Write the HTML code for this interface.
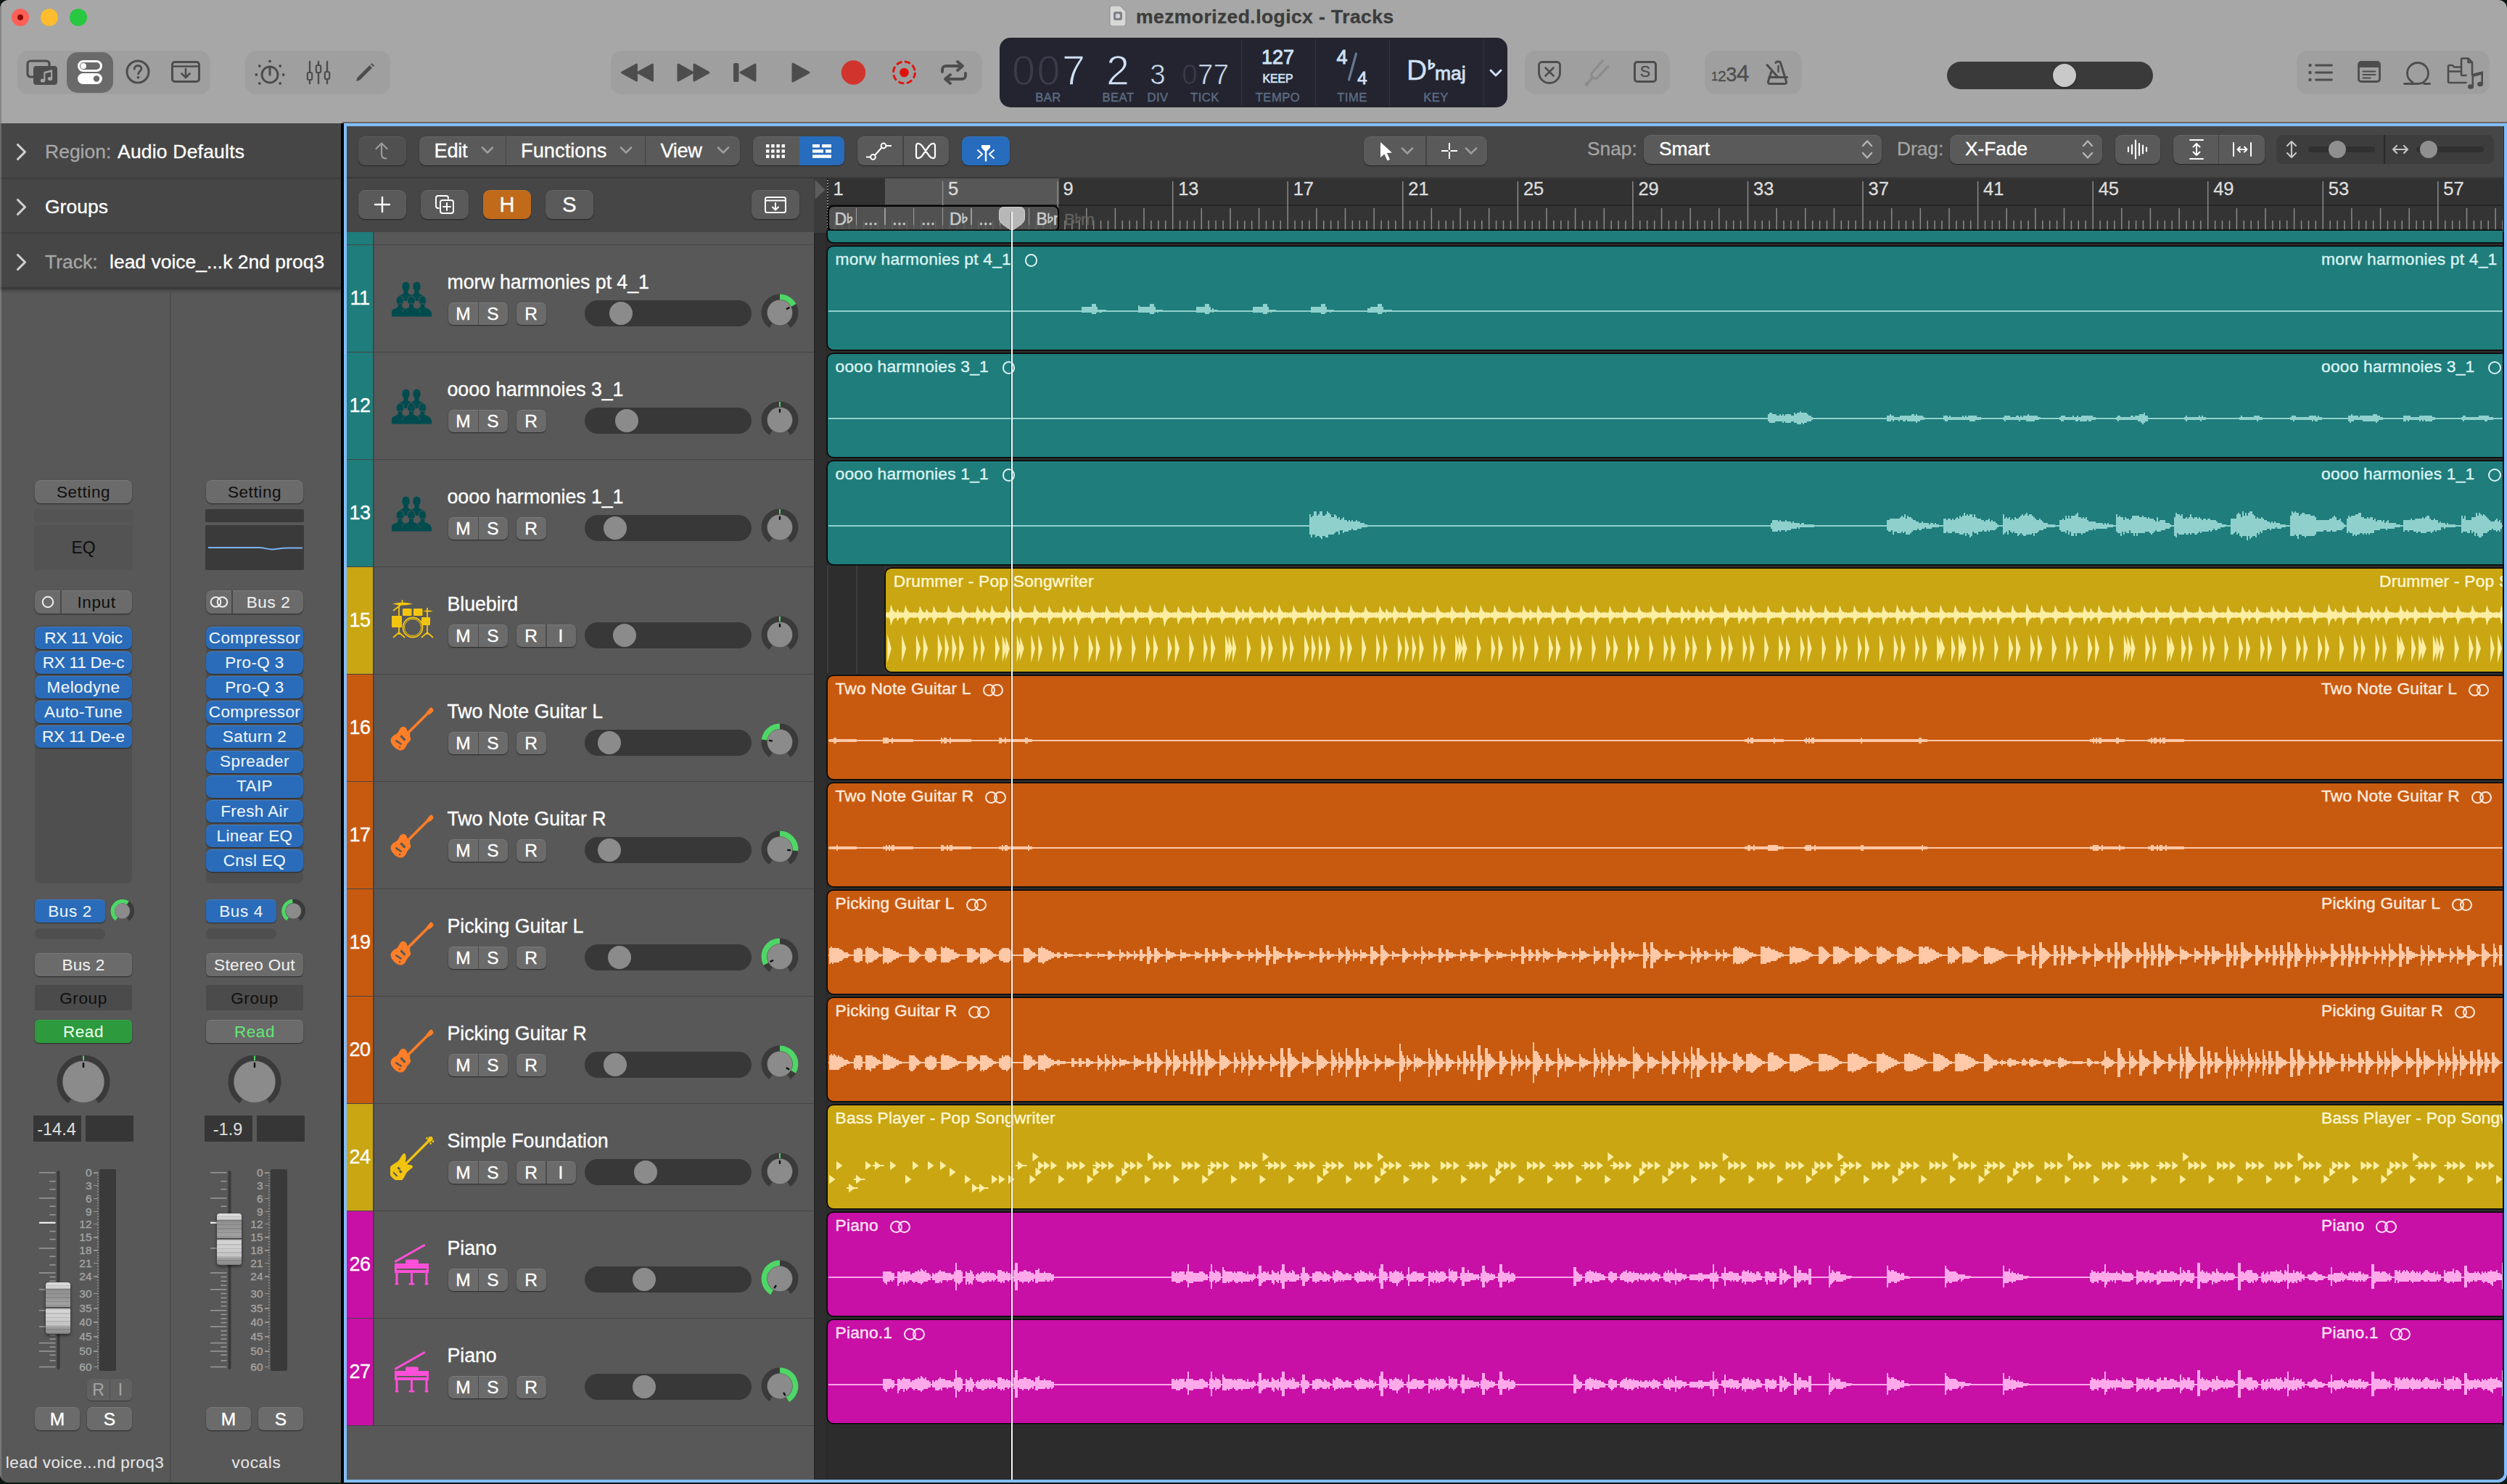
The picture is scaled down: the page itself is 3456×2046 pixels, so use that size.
<!DOCTYPE html><html><head><meta charset="utf-8"><title>mezmorized.logicx - Tracks</title><style>
html,body{margin:0;padding:0;}
body{width:3456px;height:2046px;position:relative;overflow:hidden;background:#0d1712;font-family:"Liberation Sans","DejaVu Sans",sans-serif;-webkit-text-stroke:.32px;}
div,svg{position:absolute;box-sizing:content-box;}
span{position:static}
#win{left:0;top:0;width:3456px;height:2044px;border-radius:12px;overflow:hidden;background:#585858;}
#win>div.sh{left:0;top:0;width:3456px;height:2046px;}
.rl{font-size:22.800px;line-height:28px;height:28px;color:#ecf6f5;-webkit-text-stroke:.42px;white-space:nowrap;letter-spacing:.2px;}
.rl i{display:inline-block;position:relative;vertical-align:-2.500px;height:17px;border:2px solid currentColor;border-radius:10px;box-sizing:border-box;}
.rl i.mono{width:17.500px;margin-left:19px;height:17.500px}
.rl i.stereo{width:17px;margin-left:16px;margin-right:11px}
.rl i.stereo:after{content:"";position:absolute;left:9.300px;top:-2px;width:17px;height:17px;border:2px solid currentColor;border-radius:10px;box-sizing:border-box;}
</style></head><body><div id="win"><div class="sh"><div style="left:0px;top:0px;width:3456px;height:170px;background:#a7a7a7;"></div><div style="left:16px;top:12px;width:24px;height:24px;background:#fe5f57;border-radius:12px;"><div style="left:8px;top:8px;width:8px;height:8px;background:#8c0a05;border-radius:4px;"></div></div><div style="left:56px;top:12px;width:24px;height:24px;background:#febc2e;border-radius:12px;"></div><div style="left:96px;top:12px;width:24px;height:24px;background:#28c840;border-radius:12px;"></div><svg style="left:1528px;top:8px;" width="26" height="28" viewBox="0 0 26 28"><path d="M2 3a3 3 0 0 1 3-3h11l8 8v17a3 3 0 0 1-3 3H5a3 3 0 0 1-3-3z" fill="#d8d8d8" stroke="#8e8e8e" stroke-width="1"/><rect x="7" y="8" width="12" height="12" rx="3" fill="#7d8288"/><circle cx="13" cy="14" r="3.2" fill="#cfd3d8"/></svg><div style="top:5.5px;height:34px;line-height:34px;font-size:26.5px;color:#3c3c3c;white-space:nowrap;font-weight:700;letter-spacing:0.42px;left:1566px;">mezmorized.logicx - Tracks</div><div style="left:24px;top:70px;width:266px;height:60px;background:#9f9f9f;border-radius:15px;"></div><div style="left:338px;top:70px;width:200px;height:60px;background:#9f9f9f;border-radius:15px;"></div><div style="left:842px;top:70px;width:512px;height:60px;background:#9f9f9f;border-radius:15px;"></div><div style="left:2102px;top:70px;width:200px;height:60px;background:#9f9f9f;border-radius:15px;"></div><div style="left:2350px;top:70px;width:134px;height:60px;background:#9f9f9f;border-radius:15px;"></div><div style="left:3166px;top:70px;width:266px;height:60px;background:#9f9f9f;border-radius:15px;"></div><div style="left:92px;top:72px;width:64px;height:56px;background:#6a6a6a;border-radius:15px;"></div><svg style="left:34px;top:78px;" width="48" height="44" viewBox="0 0 48 44"><rect x="4" y="6" width="30" height="22" rx="4" fill="none" stroke="#4d4d4d" stroke-width="3.2"/><rect x="12" y="13" width="33" height="26" rx="4" fill="#4d4d4d"/><g fill="#a4a4a4"><ellipse cx="25" cy="33" rx="3.2" ry="2.6"/><ellipse cx="35" cy="30.5" rx="3.2" ry="2.6"/><path d="M26.4 33V21l11.8-3v12.5h-2V21.3l-7.8 2V33z"/></g></svg><svg style="left:104px;top:80px;" width="40" height="40" viewBox="0 0 40 40"><rect x="4.5" y="4.5" width="31" height="13" rx="6.5" fill="none" stroke="#fff" stroke-width="3"/><circle cx="11" cy="11" r="4" fill="#fff"/><rect x="3" y="21" width="34" height="15" rx="7.5" fill="#fff"/><circle cx="29" cy="28.5" r="4.2" fill="#6a6a6a"/></svg><svg style="left:170px;top:79px;" width="40" height="40" viewBox="0 0 40 40"><circle cx="20" cy="20" r="15" fill="none" stroke="#4d4d4d" stroke-width="3"/><path d="M15.2 16.2c0-3 2.2-4.7 4.9-4.700 2.800 0 4.900 1.700 4.900 4.200 0 3.400-4.400 3.600-4.400 7.300" fill="none" stroke="#4d4d4d" stroke-width="2.8" stroke-linecap="round"/><circle cx="20.500" cy="27.800" r="1.900" fill="#4d4d4d"/></svg><svg style="left:234px;top:82px;" width="44" height="36" viewBox="0 0 44 36"><rect x="3.500" y="3.500" width="37" height="27" rx="3.500" fill="none" stroke="#4d4d4d" stroke-width="3"/><path d="M4 9.500h36" stroke="#4d4d4d" stroke-width="2.600"/><path d="M22 13v11M16.500 19.500l5.500 5.500 5.500-5.500" fill="none" stroke="#4d4d4d" stroke-width="2.600" stroke-linecap="round" stroke-linejoin="round"/></svg><svg style="left:350px;top:79.5px;" width="44" height="46" viewBox="0 0 44 46"><circle cx="22" cy="23" r="11" fill="none" stroke="#4d4d4d" stroke-width="3"/><path d="M22 12v11" stroke="#4d4d4d" stroke-width="3" stroke-linecap="round"/><circle cx="22.0" cy="4.4" r="1.900" fill="#4d4d4d"/><circle cx="36.2" cy="11.0" r="1.900" fill="#4d4d4d"/><circle cx="40.6" cy="23.0" r="1.900" fill="#4d4d4d"/><circle cx="7.8" cy="35.0" r="1.900" fill="#4d4d4d"/><circle cx="3.4" cy="23.0" r="1.900" fill="#4d4d4d"/><circle cx="7.8" cy="11.0" r="1.900" fill="#4d4d4d"/><circle cx="36.2" cy="35.0" r="1.900" fill="#4d4d4d"/></svg><svg style="left:420px;top:82px;" width="38" height="36" viewBox="0 0 38 36"><path d="M7 3v30" stroke="#4d4d4d" stroke-width="2.400" stroke-linecap="round"/><rect x="3.8" y="18" width="6.400" height="10" rx="2" fill="#9f9f9f" stroke="#4d4d4d" stroke-width="2.200"/><path d="M19 3v30" stroke="#4d4d4d" stroke-width="2.400" stroke-linecap="round"/><rect x="15.8" y="8" width="6.400" height="10" rx="2" fill="#9f9f9f" stroke="#4d4d4d" stroke-width="2.200"/><path d="M31 3v30" stroke="#4d4d4d" stroke-width="2.400" stroke-linecap="round"/><rect x="27.8" y="17" width="6.400" height="10" rx="2" fill="#9f9f9f" stroke="#4d4d4d" stroke-width="2.200"/></svg><svg style="left:487px;top:84px;" width="32" height="32" viewBox="0 0 32 32"><path d="M4 28l1.500-5L22.500 6l3.500 3.500L9 26.500z" fill="#4d4d4d"/><path d="M24 4.500l1.500-1.500 3.500 3.500L27.500 8z" fill="#4d4d4d"/></svg><svg style="left:842px;top:70px;" width="512" height="60" viewBox="0 0 512 60"><path d="M35.5 19.0L15.5 30L35.5 41.0z" fill="#4d4d4d" stroke="#4d4d4d" stroke-width="3" stroke-linejoin="round"/><path d="M57.5 19.0L37.5 30L57.5 41.0z" fill="#4d4d4d" stroke="#4d4d4d" stroke-width="3" stroke-linejoin="round"/><path d="M93.0 19.0L113.0 30L93.0 41.0z" fill="#4d4d4d" stroke="#4d4d4d" stroke-width="3" stroke-linejoin="round"/><path d="M115.0 19.0L135.0 30L115.0 41.0z" fill="#4d4d4d" stroke="#4d4d4d" stroke-width="3" stroke-linejoin="round"/><rect x="169" y="17" width="7.500" height="26" rx="2" fill="#4d4d4d"/><path d="M199.0 19.0L179.0 30L199.0 41.0z" fill="#4d4d4d" stroke="#4d4d4d" stroke-width="3" stroke-linejoin="round"/><path d="M251.0 18.0L273.0 30L251.0 42.0z" fill="#4d4d4d" stroke="#4d4d4d" stroke-width="3" stroke-linejoin="round"/><circle cx="334.5" cy="30" r="16.700" fill="#d1342d"/><circle cx="404.5" cy="30" r="15" fill="none" stroke="#e0140c" stroke-width="3" stroke-dasharray="8.200 3.580"/><circle cx="404.5" cy="30" r="6.300" fill="#e0140c"/><g fill="none" stroke="#4d4d4d" stroke-width="3.900" stroke-linecap="round" stroke-linejoin="round"><path d="M457 29v-3a5 5 0 0 1 5-5h22M478 15l7 6-7 6"/><path d="M489 31v3a5 5 0 0 1-5 5h-22M468 45l-7-6 7-6"/></g></svg><div style="left:1378px;top:52px;width:700px;height:96px;background:#23242f;border-radius:15px;"></div><div style="left:1711px;top:54px;width:1px;height:92px;background:#343642;"></div><div style="left:1813px;top:54px;width:1px;height:92px;background:#343642;"></div><div style="left:1915px;top:54px;width:1px;height:92px;background:#343642;"></div><div style="left:2045px;top:54px;width:1px;height:92px;background:#343642;"></div><div style="top:59.5px;height:74px;line-height:74px;font-size:57.5px;color:#cfe0f5;white-space:nowrap;letter-spacing:2.5px;left:496px;width:1000px;text-align:right;-webkit-text-stroke:1.300px #23242f;margin-left:2.5px;"><span style="color:#393c4a">00</span>7</div><div style="top:59.5px;height:74px;line-height:74px;font-size:57.5px;color:#cfe0f5;white-space:nowrap;left:1041px;width:1000px;text-align:center;-webkit-text-stroke:1.300px #23242f;">2</div><div style="top:78.0px;height:50px;line-height:50px;font-size:38.5px;color:#cfe0f5;white-space:nowrap;left:1096px;width:1000px;text-align:center;-webkit-text-stroke:.7px #23242f;">3</div><div style="top:78.0px;height:50px;line-height:50px;font-size:38.5px;color:#cfe0f5;white-space:nowrap;letter-spacing:0.3px;left:694.5px;width:1000px;text-align:right;-webkit-text-stroke:.7px #23242f;"><span style="color:#393c4a">0</span>77</div><div style="top:124.0px;height:21px;line-height:21px;font-size:16.6px;color:#5d6c82;white-space:nowrap;letter-spacing:0.5px;left:945px;width:1000px;text-align:center;-webkit-text-stroke:.45px;">BAR</div><div style="top:124.0px;height:21px;line-height:21px;font-size:16.6px;color:#5d6c82;white-space:nowrap;letter-spacing:0.5px;left:1041.5px;width:1000px;text-align:center;-webkit-text-stroke:.45px;">BEAT</div><div style="top:124.0px;height:21px;line-height:21px;font-size:16.6px;color:#5d6c82;white-space:nowrap;letter-spacing:0.5px;left:1096px;width:1000px;text-align:center;-webkit-text-stroke:.45px;">DIV</div><div style="top:124.0px;height:21px;line-height:21px;font-size:16.6px;color:#5d6c82;white-space:nowrap;letter-spacing:0.5px;left:1161px;width:1000px;text-align:center;-webkit-text-stroke:.45px;">TICK</div><div style="top:124.0px;height:21px;line-height:21px;font-size:16.6px;color:#5d6c82;white-space:nowrap;letter-spacing:0.5px;left:1261.5px;width:1000px;text-align:center;-webkit-text-stroke:.45px;">TEMPO</div><div style="top:124.0px;height:21px;line-height:21px;font-size:16.6px;color:#5d6c82;white-space:nowrap;letter-spacing:0.5px;left:1364px;width:1000px;text-align:center;-webkit-text-stroke:.45px;">TIME</div><div style="top:124.0px;height:21px;line-height:21px;font-size:16.6px;color:#5d6c82;white-space:nowrap;letter-spacing:0.5px;left:1479.5px;width:1000px;text-align:center;-webkit-text-stroke:.45px;">KEY</div><div style="top:61.5px;height:35px;line-height:35px;font-size:27px;color:#cfe0f5;white-space:nowrap;left:1261.5px;width:1000px;text-align:center;-webkit-text-stroke:.9px;">127</div><div style="top:98.5px;height:20px;line-height:20px;font-size:15.8px;color:#cfe0f5;white-space:nowrap;left:1261.5px;width:1000px;text-align:center;-webkit-text-stroke:.7px;">KEEP</div><div style="top:61.5px;height:35px;line-height:35px;font-size:27px;color:#cfe0f5;white-space:nowrap;left:1350px;width:1000px;text-align:center;-webkit-text-stroke:.9px;">4</div><div style="top:91.5px;height:31px;line-height:31px;font-size:24px;color:#cfe0f5;white-space:nowrap;left:1378px;width:1000px;text-align:center;-webkit-text-stroke:.9px;">4</div><svg style="left:1852px;top:70px;" width="26" height="44" viewBox="0 0 26 44"><path d="M17.500 4L7.500 40" stroke="#66788f" stroke-width="3.200" stroke-linecap="round"/></svg><div style="top:72.0px;height:50px;line-height:50px;font-size:39px;color:#cfe0f5;white-space:nowrap;left:1939px;">D</div><div style="top:80.0px;height:18px;line-height:18px;font-size:15.5px;color:#cfe0f5;white-space:nowrap;left:1964.5px;font-family:IPAGothic,sans-serif;font-weight:700;-webkit-text-stroke:.6px #cfe0f5;transform:scaleX(1.250);transform-origin:50% 50%;">♭</div><div style="top:84.0px;height:34px;line-height:34px;font-size:26.5px;color:#cfe0f5;white-space:nowrap;left:1978px;-webkit-text-stroke:.85px;">maj</div><svg style="left:2050px;top:92px;" width="24" height="18" viewBox="0 0 24 18"><path d="M5 5l7 7 7-7" fill="none" stroke="#cfe0f5" stroke-width="3" stroke-linecap="round" stroke-linejoin="round"/></svg><svg style="left:2116px;top:80px;" width="40" height="40" viewBox="0 0 40 40"><path d="M9.500 5.500h21a4 4 0 0 1 4 4v10.500a14.500 14.500 0 0 1-29 0V9.500a4 4 0 0 1 4-4z" fill="none" stroke="#4d4d4d" stroke-width="2.800"/><path d="M14.500 13.500l11 11M25.500 13.500l-11 11" stroke="#4d4d4d" stroke-width="2.600" stroke-linecap="round"/></svg><svg style="left:2183px;top:80px;" width="40" height="42" viewBox="0 0 40 42"><g fill="none" stroke="#8c8c8c" stroke-width="3.400" stroke-linecap="round" stroke-linejoin="round"><path d="M26 4L11.500 20.500c-2 2.300-.5 5 1.500 6.500s5 1.800 6.800-.5L33.500 12"/><path d="M12.500 27L4.500 36"/></g><circle cx="4.500" cy="36" r="2.800" fill="#8c8c8c"/></svg><svg style="left:2250px;top:82px;" width="36" height="36" viewBox="0 0 36 36"><rect x="3.500" y="3.500" width="29" height="27" rx="3.500" fill="none" stroke="#4d4d4d" stroke-width="3"/></svg><div style="top:86.0px;height:27px;line-height:27px;font-size:21.5px;color:#4d4d4d;white-space:nowrap;left:1768px;width:1000px;text-align:center;">S</div><div style="top:81.0px;height:40px;line-height:40px;font-size:32px;color:#4d4d4d;white-space:nowrap;letter-spacing:-0.5px;left:2359px;"><span style="font-size:17px;position:relative;top:-1px">1</span><span style="font-size:21px">2</span><span style="font-size:27px">3</span><span style="font-size:32px">4</span></div><svg style="left:2430px;top:80px;" width="42" height="40" viewBox="0 0 42 40"><g fill="none" stroke="#4d4d4d" stroke-width="3" stroke-linecap="round" stroke-linejoin="round"><path d="M18 6.500a2 2 0 0 1 2-1.500h2.500a2 2 0 0 1 2 1.500l8 26a2.300 2.300 0 0 1-2.200 3H9.700a2.300 2.300 0 0 1-2.200-3l4-13"/><path d="M9 26.500h24.500"/><path d="M6 9.500l15 17"/><path d="M21.500 11v8" stroke-width="2.400"/></g></svg><div style="left:2684px;top:85px;width:284px;height:38px;background:#3a3a3a;border-radius:19px;"></div><div style="left:2830px;top:88px;width:32px;height:32px;background:#c9c9c9;border-radius:16px;box-shadow:0 1px 2px rgba(0,0,0,.5);"></div><svg style="left:3180px;top:84px;" width="38" height="32" viewBox="0 0 38 32"><circle cx="4.500" cy="6" r="2.200" fill="#4d4d4d"/><path d="M12.500 6h22" stroke="#4d4d4d" stroke-width="2.800" stroke-linecap="round"/><circle cx="4.500" cy="16" r="2.200" fill="#4d4d4d"/><path d="M12.500 16h22" stroke="#4d4d4d" stroke-width="2.800" stroke-linecap="round"/><circle cx="4.500" cy="26" r="2.200" fill="#4d4d4d"/><path d="M12.500 26h22" stroke="#4d4d4d" stroke-width="2.800" stroke-linecap="round"/></svg><svg style="left:3248px;top:82px;" width="36" height="36" viewBox="0 0 36 36"><rect x="3.500" y="3.500" width="29" height="27" rx="3.500" fill="none" stroke="#4d4d4d" stroke-width="2.800"/><path d="M3.500 7a3.500 3.500 0 0 1 3.500-3.500h22A3.500 3.500 0 0 1 32.500 7v4h-29z" fill="#4d4d4d"/><path d="M9.500 16.500h17M9.500 21h17M9.500 25.500h10" stroke="#4d4d4d" stroke-width="2.200" stroke-linecap="round"/></svg><svg style="left:3310px;top:80px;" width="44" height="40" viewBox="0 0 44 40"><g fill="none" stroke="#4d4d4d" stroke-width="2.800" stroke-linecap="round"><path d="M4.500 35.500h18.500a14.500 14.500 0 1 0-14.500-14.500c0 5 3 10 7.500 12.500"/><path d="M31.500 35.500h8"/></g></svg><svg style="left:3372px;top:78px;" width="56" height="48" viewBox="0 0 56 48"><g fill="none" stroke="#4d4d4d" stroke-width="2.600" stroke-linejoin="round"><path d="M20 14.500h-9l-2-2.500H4.500a1.500 1.500 0 0 0-1.500 1.500v21a1.500 1.500 0 0 0 1.500 1.500h24"/><path d="M3 20.500h17"/><path d="M36 26V8l-5.500-5.500H22.500a1.500 1.500 0 0 0-1.500 1.500v20.500a1.500 1.500 0 0 0 1.500 1.500h6"/><path d="M30.500 2.500V8H36"/></g><g fill="#4d4d4d"><ellipse cx="34" cy="41.500" rx="4" ry="3.200"/><ellipse cx="47" cy="38" rx="4" ry="3.200"/><path d="M35.500 41.500V24l15.500-4v18h-2.600V25l-10.300 2.700V41.500z"/></g></svg><div style="left:0;top:0;width:470px;height:2046px;-webkit-text-stroke:.1px"><div style="left:0px;top:170px;width:470px;height:1876px;background:#585858;"></div><div style="left:0px;top:170px;width:470px;height:227px;background:#464646;"></div><div style="left:0px;top:245px;width:470px;height:2px;background:#3d3d3d;"></div><div style="left:0px;top:320px;width:470px;height:2px;background:#3d3d3d;"></div><div style="left:0px;top:396px;width:470px;height:3px;background:#3a3a3a;box-shadow:0 2px 4px rgba(0,0,0,.35);"></div><svg style="left:20.5px;top:195.5px;" width="18" height="28" viewBox="0 0 18 28"><path d="M3.500 3.500l10 10-10 10" fill="none" stroke="#d0d0d0" stroke-width="3.100" stroke-linecap="round" stroke-linejoin="round"/></svg><svg style="left:20.5px;top:271.5px;" width="18" height="28" viewBox="0 0 18 28"><path d="M3.500 3.500l10 10-10 10" fill="none" stroke="#d0d0d0" stroke-width="3.100" stroke-linecap="round" stroke-linejoin="round"/></svg><svg style="left:20.5px;top:347.5px;" width="18" height="28" viewBox="0 0 18 28"><path d="M3.500 3.500l10 10-10 10" fill="none" stroke="#d0d0d0" stroke-width="3.100" stroke-linecap="round" stroke-linejoin="round"/></svg><div style="top:192.0px;height:34px;line-height:34px;font-size:26.5px;color:#a6a6a6;white-space:nowrap;left:62px;-webkit-text-stroke:.32px;">Region:</div><div style="top:192.0px;height:34px;line-height:34px;font-size:26.5px;color:#fff;white-space:nowrap;letter-spacing:0.2px;left:162px;-webkit-text-stroke:.32px;">Audio Defaults</div><div style="top:268.0px;height:34px;line-height:34px;font-size:26.5px;color:#fff;white-space:nowrap;left:62px;-webkit-text-stroke:.32px;">Groups</div><div style="top:344.0px;height:34px;line-height:34px;font-size:26.5px;color:#a6a6a6;white-space:nowrap;left:62px;-webkit-text-stroke:.32px;">Track:</div><div style="top:344.0px;height:34px;line-height:34px;font-size:26.5px;color:#fff;white-space:nowrap;left:151px;-webkit-text-stroke:.32px;">lead voice_...k 2nd proq3</div><div style="left:234px;top:399px;width:2px;height:1647px;background:#4c4c4c;"></div><div style="left:48px;top:662px;width:134px;height:32px;background:#6b6b6b;border-radius:8px;box-shadow:0 1px 1.5px rgba(0,0,0,.55), inset 0 1px 0 rgba(255,255,255,.10);"></div><div style="top:663.5px;height:29px;line-height:29px;font-size:22.5px;color:#111;white-space:nowrap;letter-spacing:0.6px;left:-385.0px;width:1000px;text-align:center;">Setting</div><div style="left:47px;top:702px;width:136px;height:18px;background:#545454;border-radius:2px;"></div><div style="left:47px;top:724px;width:136px;height:62px;background:#535353;border-radius:2px;"></div><div style="top:740.5px;height:29px;line-height:29px;font-size:23px;color:#111;white-space:nowrap;left:-385.0px;width:1000px;text-align:center;">EQ</div><div style="left:48px;top:814px;width:134px;height:32px;background:#6b6b6b;border-radius:8px;box-shadow:0 1px 1.5px rgba(0,0,0,.55), inset 0 1px 0 rgba(255,255,255,.10);"></div><div style="left:83px;top:814px;width:1.5px;height:32px;background:#4a4a4a;"></div><svg style="left:56px;top:820px;" width="20" height="20" viewBox="0 0 20 20"><circle cx="10" cy="10" r="7.200" fill="none" stroke="#f0f0f0" stroke-width="2"/></svg><div style="top:815.5px;height:29px;line-height:29px;font-size:22.5px;color:#111;white-space:nowrap;letter-spacing:0.6px;left:-367px;width:1000px;text-align:center;">Input</div><div style="left:48px;top:862px;width:134px;height:356px;background:#4f4f4f;border-radius:8px;"></div><div style="left:48px;top:864.0px;width:134px;height:31px;background:#2a6cb9;border-radius:8px;box-shadow:0 1px 1.5px rgba(0,0,0,.5), inset 0 1px 0 rgba(255,255,255,.12);"></div><div style="top:864.8px;height:29px;line-height:29px;font-size:22.5px;color:#eef4fc;white-space:nowrap;letter-spacing:-0.2px;left:-385.0px;width:1000px;text-align:center;">RX 11 Voic</div><div style="left:48px;top:898.1px;width:134px;height:31px;background:#2a6cb9;border-radius:8px;box-shadow:0 1px 1.5px rgba(0,0,0,.5), inset 0 1px 0 rgba(255,255,255,.12);"></div><div style="top:898.9px;height:29px;line-height:29px;font-size:22.5px;color:#eef4fc;white-space:nowrap;letter-spacing:-0.2px;left:-385.0px;width:1000px;text-align:center;">RX 11 De-c</div><div style="left:48px;top:932.2px;width:134px;height:31px;background:#2a6cb9;border-radius:8px;box-shadow:0 1px 1.5px rgba(0,0,0,.5), inset 0 1px 0 rgba(255,255,255,.12);"></div><div style="top:933.0px;height:29px;line-height:29px;font-size:22.5px;color:#eef4fc;white-space:nowrap;letter-spacing:0.4px;left:-385.0px;width:1000px;text-align:center;">Melodyne</div><div style="left:48px;top:966.3px;width:134px;height:31px;background:#2a6cb9;border-radius:8px;box-shadow:0 1px 1.5px rgba(0,0,0,.5), inset 0 1px 0 rgba(255,255,255,.12);"></div><div style="top:967.1px;height:29px;line-height:29px;font-size:22.5px;color:#eef4fc;white-space:nowrap;letter-spacing:0.4px;left:-385.0px;width:1000px;text-align:center;">Auto-Tune</div><div style="left:48px;top:1000.4px;width:134px;height:31px;background:#2a6cb9;border-radius:8px;box-shadow:0 1px 1.5px rgba(0,0,0,.5), inset 0 1px 0 rgba(255,255,255,.12);"></div><div style="top:1001.2px;height:29px;line-height:29px;font-size:22.5px;color:#eef4fc;white-space:nowrap;letter-spacing:-0.2px;left:-385.0px;width:1000px;text-align:center;">RX 11 De-e</div><div style="left:48px;top:1240px;width:97px;height:32px;background:#2a6cb9;border-radius:6px;box-shadow:0 1px 1.5px rgba(0,0,0,.5), inset 0 1px 0 rgba(255,255,255,.12);"></div><div style="top:1241.5px;height:29px;line-height:29px;font-size:22.5px;color:#e8f0fb;white-space:nowrap;letter-spacing:0.6px;left:-403.5px;width:1000px;text-align:center;">Bus 2</div><svg style="left:149px;top:1236px;" width="40" height="40" viewBox="0 0 40 40"><path d="M11.6 31.3A13.8 13.8 0 1 1 27.4 31.3" fill="none" stroke="#3a3a3a" stroke-width="5.5"/><path d="M11.6 31.3A13.8 13.8 0 0 1 27.4 8.7" fill="none" stroke="#4fd667" stroke-width="5.5"/><circle cx="19.5" cy="20" r="10.5" fill="#8b8b8b"/></svg><div style="left:48px;top:1280px;width:97px;height:15px;background:#4f4f4f;border-radius:7px;"></div><div style="left:48px;top:1314px;width:134px;height:32px;background:#6b6b6b;border-radius:6px;box-shadow:0 1px 1.5px rgba(0,0,0,.55), inset 0 1px 0 rgba(255,255,255,.10);"></div><div style="top:1315.5px;height:29px;line-height:29px;font-size:22.5px;color:#eee;white-space:nowrap;letter-spacing:0.3px;left:-385.0px;width:1000px;text-align:center;">Bus 2</div><div style="left:48px;top:1358px;width:134px;height:35px;background:#4b4b4b;border-radius:2px;"></div><div style="top:1361.5px;height:29px;line-height:29px;font-size:22.5px;color:#111;white-space:nowrap;letter-spacing:0.6px;left:-385.0px;width:1000px;text-align:center;">Group</div><div style="left:48px;top:1406px;width:134px;height:32px;background:#2c9a3d;border-radius:6px;box-shadow:0 1px 1.5px rgba(0,0,0,.55), inset 0 1px 0 rgba(255,255,255,.10);"></div><div style="top:1407.5px;height:29px;line-height:29px;font-size:22.5px;color:#eaffea;white-space:nowrap;letter-spacing:0.6px;left:-385.0px;width:1000px;text-align:center;">Read</div><svg style="left:75.0px;top:1451px;" width="80" height="80" viewBox="0 0 80 80"><path d="M21.2 67.3A32.8 32.8 0 1 1 58.8 67.3" fill="none" stroke="#3a3a3a" stroke-width="7.5"/><path d="M40.0 11.0L40.0 4.5" stroke="#4fd667" stroke-width="2"/><circle cx="40" cy="40.5" r="28.5" fill="#8b8b8b"/><path d="M40.0 14.0L40.0 21.0" stroke="#111" stroke-width="2.400"/></svg><div style="left:46px;top:1538px;width:66px;height:36px;background:#363636;"></div><div style="left:118px;top:1538px;width:66px;height:36px;background:#363636;"></div><div style="top:1541.5px;height:30px;line-height:30px;font-size:23.5px;color:#ddd;white-space:nowrap;left:-422px;width:1000px;text-align:center;">-14.4</div><svg style="left:48px;top:1600px;" width="140" height="300" viewBox="0 0 140 300"><path d="M6 16.7h22.500" stroke="#959595" stroke-width="1.700"/><path d="M6 51.9h22.500" stroke="#959595" stroke-width="1.700"/><path d="M6 121.0h22.500" stroke="#959595" stroke-width="1.700"/><path d="M6 154.9h22.500" stroke="#959595" stroke-width="1.700"/><path d="M6 177.8h22.500" stroke="#959595" stroke-width="1.700"/><path d="M6 206.7h22.500" stroke="#959595" stroke-width="1.700"/><path d="M6 229.0h22.500" stroke="#959595" stroke-width="1.700"/><path d="M6 251.6h22.500" stroke="#959595" stroke-width="1.700"/><path d="M6 262.9h22.500" stroke="#959595" stroke-width="1.700"/><path d="M6 284.6h22.500" stroke="#959595" stroke-width="1.700"/><path d="M20.500 28.7h8" stroke="#959595" stroke-width="1.700"/><path d="M20.500 39.7h8" stroke="#959595" stroke-width="1.700"/><path d="M20.500 63.2h8" stroke="#959595" stroke-width="1.700"/><path d="M20.500 74.8h8" stroke="#959595" stroke-width="1.700"/><path d="M20.500 97.7h8" stroke="#959595" stroke-width="1.700"/><path d="M20.500 108.7h8" stroke="#959595" stroke-width="1.700"/><path d="M20.500 132.3h8" stroke="#959595" stroke-width="1.700"/><path d="M20.500 143.9h8" stroke="#959595" stroke-width="1.700"/><path d="M20.500 160.5h8" stroke="#959595" stroke-width="1.700"/><path d="M20.500 166.2h8" stroke="#959595" stroke-width="1.700"/><path d="M20.500 172.2h8" stroke="#959595" stroke-width="1.700"/><path d="M20.500 183.5h8" stroke="#959595" stroke-width="1.700"/><path d="M20.500 189.4h8" stroke="#959595" stroke-width="1.700"/><path d="M20.500 195.1h8" stroke="#959595" stroke-width="1.700"/><path d="M20.500 200.7h8" stroke="#959595" stroke-width="1.700"/><path d="M20.500 212.3h8" stroke="#959595" stroke-width="1.700"/><path d="M20.500 218.0h8" stroke="#959595" stroke-width="1.700"/><path d="M20.500 223.6h8" stroke="#959595" stroke-width="1.700"/><path d="M20.500 234.9h8" stroke="#959595" stroke-width="1.700"/><path d="M20.500 240.6h8" stroke="#959595" stroke-width="1.700"/><path d="M20.500 246.2h8" stroke="#959595" stroke-width="1.700"/><path d="M20.500 257.2h8" stroke="#959595" stroke-width="1.700"/><path d="M20.500 268.2h8" stroke="#959595" stroke-width="1.700"/><path d="M20.500 275.8h8" stroke="#959595" stroke-width="1.700"/><rect x="30.500" y="14" width="4" height="274" rx="2" fill="#3a3a3a"/><path d="M6 85.800h22.500" stroke="#f2f2f2" stroke-width="2.200"/><path d="M86.800 16v272" stroke="#959595" stroke-width="1.700" stroke-dasharray="1.500 2.300"/></svg><div style="top:1608.0px;height:18px;line-height:18px;font-size:15.5px;color:#a6a6a6;white-space:nowrap;letter-spacing:0.3px;left:-873px;width:1000px;text-align:right;-webkit-text-stroke:.3px;">0</div><div style="left:129px;top:1616.2px;width:5.5px;height:1.6px;background:#959595;"></div><div style="top:1625.5px;height:18px;line-height:18px;font-size:15.5px;color:#a6a6a6;white-space:nowrap;letter-spacing:0.3px;left:-873px;width:1000px;text-align:right;-webkit-text-stroke:.3px;">3</div><div style="left:129px;top:1633.7px;width:5.5px;height:1.6px;background:#959595;"></div><div style="top:1643.5px;height:18px;line-height:18px;font-size:15.5px;color:#a6a6a6;white-space:nowrap;letter-spacing:0.3px;left:-873px;width:1000px;text-align:right;-webkit-text-stroke:.3px;">6</div><div style="left:129px;top:1651.7px;width:5.5px;height:1.6px;background:#959595;"></div><div style="top:1661.5px;height:18px;line-height:18px;font-size:15.5px;color:#a6a6a6;white-space:nowrap;letter-spacing:0.3px;left:-873px;width:1000px;text-align:right;-webkit-text-stroke:.3px;">9</div><div style="left:129px;top:1669.7px;width:5.5px;height:1.6px;background:#959595;"></div><div style="top:1678.5px;height:18px;line-height:18px;font-size:15.5px;color:#a6a6a6;white-space:nowrap;letter-spacing:0.3px;left:-873px;width:1000px;text-align:right;-webkit-text-stroke:.3px;">12</div><div style="left:129px;top:1686.7px;width:5.5px;height:1.6px;background:#959595;"></div><div style="top:1697.0px;height:18px;line-height:18px;font-size:15.5px;color:#a6a6a6;white-space:nowrap;letter-spacing:0.3px;left:-873px;width:1000px;text-align:right;-webkit-text-stroke:.3px;">15</div><div style="left:129px;top:1705.2px;width:5.5px;height:1.6px;background:#959595;"></div><div style="top:1715.0px;height:18px;line-height:18px;font-size:15.5px;color:#a6a6a6;white-space:nowrap;letter-spacing:0.3px;left:-873px;width:1000px;text-align:right;-webkit-text-stroke:.3px;">18</div><div style="left:129px;top:1723.2px;width:5.5px;height:1.6px;background:#959595;"></div><div style="top:1732.5px;height:18px;line-height:18px;font-size:15.5px;color:#a6a6a6;white-space:nowrap;letter-spacing:0.3px;left:-873px;width:1000px;text-align:right;-webkit-text-stroke:.3px;">21</div><div style="left:129px;top:1740.7px;width:5.5px;height:1.6px;background:#959595;"></div><div style="top:1751.0px;height:18px;line-height:18px;font-size:15.5px;color:#a6a6a6;white-space:nowrap;letter-spacing:0.3px;left:-873px;width:1000px;text-align:right;-webkit-text-stroke:.3px;">24</div><div style="left:129px;top:1759.2px;width:5.5px;height:1.6px;background:#959595;"></div><div style="top:1774.5px;height:18px;line-height:18px;font-size:15.5px;color:#a6a6a6;white-space:nowrap;letter-spacing:0.3px;left:-873px;width:1000px;text-align:right;-webkit-text-stroke:.3px;">30</div><div style="left:129px;top:1782.7px;width:5.5px;height:1.6px;background:#959595;"></div><div style="top:1795.0px;height:18px;line-height:18px;font-size:15.5px;color:#a6a6a6;white-space:nowrap;letter-spacing:0.3px;left:-873px;width:1000px;text-align:right;-webkit-text-stroke:.3px;">35</div><div style="left:129px;top:1803.2px;width:5.5px;height:1.6px;background:#959595;"></div><div style="top:1814.0px;height:18px;line-height:18px;font-size:15.5px;color:#a6a6a6;white-space:nowrap;letter-spacing:0.3px;left:-873px;width:1000px;text-align:right;-webkit-text-stroke:.3px;">40</div><div style="left:129px;top:1822.2px;width:5.5px;height:1.6px;background:#959595;"></div><div style="top:1834.0px;height:18px;line-height:18px;font-size:15.5px;color:#a6a6a6;white-space:nowrap;letter-spacing:0.3px;left:-873px;width:1000px;text-align:right;-webkit-text-stroke:.3px;">45</div><div style="left:129px;top:1842.2px;width:5.5px;height:1.6px;background:#959595;"></div><div style="top:1854.0px;height:18px;line-height:18px;font-size:15.5px;color:#a6a6a6;white-space:nowrap;letter-spacing:0.3px;left:-873px;width:1000px;text-align:right;-webkit-text-stroke:.3px;">50</div><div style="left:129px;top:1862.2px;width:5.5px;height:1.6px;background:#959595;"></div><div style="top:1875.5px;height:18px;line-height:18px;font-size:15.5px;color:#a6a6a6;white-space:nowrap;letter-spacing:0.3px;left:-873px;width:1000px;text-align:right;-webkit-text-stroke:.3px;">60</div><div style="left:129px;top:1883.7px;width:5.5px;height:1.6px;background:#959595;"></div><div style="left:136.5px;top:1612px;width:23.5px;height:278px;background:#3a3a3a;border-radius:2px;"></div><div style="left:63px;top:1768px;width:34px;height:71px;border-radius:4px;background:repeating-linear-gradient(rgba(0,0,0,0) 0 4px,rgba(0,0,0,.10) 4px 5.500px),linear-gradient(#dcdcdc 0%,#cfcfcf 11%,#8f8f8f 13%,#979797 30%,#a4a4a4 47%,#4c4c4c 48.500%,#4c4c4c 50%,#d6d6d6 51.500%,#cdcdcd 70%,#c4c4c4 84%,#a0a0a0 86%,#8a8a8a 100%);box-shadow:0 2px 4px rgba(0,0,0,.55);"></div><div style="left:120px;top:1901px;width:61.5px;height:30px;background:#616161;border-radius:6px;box-shadow:0 1px 1px rgba(0,0,0,.35);"></div><div style="left:150.5px;top:1901px;width:1.5px;height:30px;background:#505050;"></div><div style="top:1902.0px;height:29px;line-height:29px;font-size:23px;color:#a4a4a4;white-space:nowrap;left:-364.5px;width:1000px;text-align:center;">R</div><div style="top:1902.0px;height:29px;line-height:29px;font-size:23px;color:#a4a4a4;white-space:nowrap;left:-334px;width:1000px;text-align:center;">I</div><div style="left:48px;top:1940px;width:62px;height:32px;background:#6b6b6b;border-radius:7px;box-shadow:0 1px 1.5px rgba(0,0,0,.55), inset 0 1px 0 rgba(255,255,255,.10);"></div><div style="left:120px;top:1940px;width:62px;height:32px;background:#6b6b6b;border-radius:7px;box-shadow:0 1px 1.5px rgba(0,0,0,.55), inset 0 1px 0 rgba(255,255,255,.10);"></div><div style="top:1941.0px;height:31px;line-height:31px;font-size:24.5px;color:#fff;white-space:nowrap;left:-421px;width:1000px;text-align:center;-webkit-text-stroke:.4px;">M</div><div style="top:1941.0px;height:31px;line-height:31px;font-size:24.5px;color:#fff;white-space:nowrap;left:-349px;width:1000px;text-align:center;-webkit-text-stroke:.4px;">S</div><div style="left:284px;top:662px;width:134px;height:32px;background:#6b6b6b;border-radius:8px;box-shadow:0 1px 1.5px rgba(0,0,0,.55), inset 0 1px 0 rgba(255,255,255,.10);"></div><div style="top:663.5px;height:29px;line-height:29px;font-size:22.5px;color:#111;white-space:nowrap;letter-spacing:0.6px;left:-149.0px;width:1000px;text-align:center;">Setting</div><div style="left:283px;top:702px;width:136px;height:18px;background:#3a3a3a;border-radius:2px;"></div><div style="left:283px;top:724px;width:136px;height:62px;background:#3a3a3a;border-radius:2px;"></div><svg style="left:283px;top:724px;" width="136" height="62" viewBox="0 0 136 62"><path d="M4 31h70c8 0 12 2.500 18 2.500s10-2 22-2h20" fill="none" stroke="#7db4f0" stroke-width="2"/></svg><div style="left:284px;top:814px;width:134px;height:32px;background:#6b6b6b;border-radius:8px;box-shadow:0 1px 1.5px rgba(0,0,0,.55), inset 0 1px 0 rgba(255,255,255,.10);"></div><div style="left:319px;top:814px;width:1.5px;height:32px;background:#4a4a4a;"></div><svg style="left:288px;top:820px;" width="28" height="20" viewBox="0 0 28 20"><circle cx="9.500" cy="10" r="6.800" fill="none" stroke="#f0f0f0" stroke-width="2"/><circle cx="18.500" cy="10" r="6.800" fill="none" stroke="#f0f0f0" stroke-width="2"/></svg><div style="top:815.5px;height:29px;line-height:29px;font-size:22.5px;color:#eee;white-space:nowrap;letter-spacing:0.6px;left:-130px;width:1000px;text-align:center;">Bus 2</div><div style="left:284px;top:862px;width:134px;height:356px;background:#4f4f4f;border-radius:8px;"></div><div style="left:284px;top:864.0px;width:134px;height:31px;background:#2a6cb9;border-radius:8px;box-shadow:0 1px 1.5px rgba(0,0,0,.5), inset 0 1px 0 rgba(255,255,255,.12);"></div><div style="top:864.8px;height:29px;line-height:29px;font-size:22.5px;color:#eef4fc;white-space:nowrap;letter-spacing:0.4px;left:-149.0px;width:1000px;text-align:center;">Compressor</div><div style="left:284px;top:898.1px;width:134px;height:31px;background:#2a6cb9;border-radius:8px;box-shadow:0 1px 1.5px rgba(0,0,0,.5), inset 0 1px 0 rgba(255,255,255,.12);"></div><div style="top:898.9px;height:29px;line-height:29px;font-size:22.5px;color:#eef4fc;white-space:nowrap;letter-spacing:0.4px;left:-149.0px;width:1000px;text-align:center;">Pro-Q 3</div><div style="left:284px;top:932.2px;width:134px;height:31px;background:#2a6cb9;border-radius:8px;box-shadow:0 1px 1.5px rgba(0,0,0,.5), inset 0 1px 0 rgba(255,255,255,.12);"></div><div style="top:933.0px;height:29px;line-height:29px;font-size:22.5px;color:#eef4fc;white-space:nowrap;letter-spacing:0.4px;left:-149.0px;width:1000px;text-align:center;">Pro-Q 3</div><div style="left:284px;top:966.3px;width:134px;height:31px;background:#2a6cb9;border-radius:8px;box-shadow:0 1px 1.5px rgba(0,0,0,.5), inset 0 1px 0 rgba(255,255,255,.12);"></div><div style="top:967.1px;height:29px;line-height:29px;font-size:22.5px;color:#eef4fc;white-space:nowrap;letter-spacing:0.4px;left:-149.0px;width:1000px;text-align:center;">Compressor</div><div style="left:284px;top:1000.4px;width:134px;height:31px;background:#2a6cb9;border-radius:8px;box-shadow:0 1px 1.5px rgba(0,0,0,.5), inset 0 1px 0 rgba(255,255,255,.12);"></div><div style="top:1001.2px;height:29px;line-height:29px;font-size:22.5px;color:#eef4fc;white-space:nowrap;letter-spacing:0.4px;left:-149.0px;width:1000px;text-align:center;">Saturn 2</div><div style="left:284px;top:1034.5px;width:134px;height:31px;background:#2a6cb9;border-radius:8px;box-shadow:0 1px 1.5px rgba(0,0,0,.5), inset 0 1px 0 rgba(255,255,255,.12);"></div><div style="top:1035.3px;height:29px;line-height:29px;font-size:22.5px;color:#eef4fc;white-space:nowrap;letter-spacing:0.4px;left:-149.0px;width:1000px;text-align:center;">Spreader</div><div style="left:284px;top:1068.6px;width:134px;height:31px;background:#2a6cb9;border-radius:8px;box-shadow:0 1px 1.5px rgba(0,0,0,.5), inset 0 1px 0 rgba(255,255,255,.12);"></div><div style="top:1069.4px;height:29px;line-height:29px;font-size:22.5px;color:#eef4fc;white-space:nowrap;letter-spacing:0.4px;left:-149.0px;width:1000px;text-align:center;">TAIP</div><div style="left:284px;top:1102.7px;width:134px;height:31px;background:#2a6cb9;border-radius:8px;box-shadow:0 1px 1.5px rgba(0,0,0,.5), inset 0 1px 0 rgba(255,255,255,.12);"></div><div style="top:1103.5px;height:29px;line-height:29px;font-size:22.5px;color:#eef4fc;white-space:nowrap;letter-spacing:0.4px;left:-149.0px;width:1000px;text-align:center;">Fresh Air</div><div style="left:284px;top:1136.8px;width:134px;height:31px;background:#2a6cb9;border-radius:8px;box-shadow:0 1px 1.5px rgba(0,0,0,.5), inset 0 1px 0 rgba(255,255,255,.12);"></div><div style="top:1137.6px;height:29px;line-height:29px;font-size:22.5px;color:#eef4fc;white-space:nowrap;letter-spacing:0.4px;left:-149.0px;width:1000px;text-align:center;">Linear EQ</div><div style="left:284px;top:1170.9px;width:134px;height:31px;background:#2a6cb9;border-radius:8px;box-shadow:0 1px 1.5px rgba(0,0,0,.5), inset 0 1px 0 rgba(255,255,255,.12);"></div><div style="top:1171.7px;height:29px;line-height:29px;font-size:22.5px;color:#eef4fc;white-space:nowrap;letter-spacing:0.4px;left:-149.0px;width:1000px;text-align:center;">Cnsl EQ</div><div style="left:284px;top:1240px;width:97px;height:32px;background:#2a6cb9;border-radius:6px;box-shadow:0 1px 1.5px rgba(0,0,0,.5), inset 0 1px 0 rgba(255,255,255,.12);"></div><div style="top:1241.5px;height:29px;line-height:29px;font-size:22.5px;color:#e8f0fb;white-space:nowrap;letter-spacing:0.6px;left:-167.5px;width:1000px;text-align:center;">Bus 4</div><svg style="left:385px;top:1236px;" width="40" height="40" viewBox="0 0 40 40"><path d="M11.6 31.3A13.8 13.8 0 1 1 27.4 31.3" fill="none" stroke="#3a3a3a" stroke-width="5.5"/><path d="M11.6 31.3A13.8 13.8 0 0 1 18.3 6.3" fill="none" stroke="#4fd667" stroke-width="5.5"/><circle cx="19.5" cy="20" r="10.5" fill="#8b8b8b"/></svg><div style="left:284px;top:1280px;width:97px;height:15px;background:#4f4f4f;border-radius:7px;"></div><div style="left:284px;top:1314px;width:134px;height:32px;background:#6b6b6b;border-radius:6px;box-shadow:0 1px 1.5px rgba(0,0,0,.55), inset 0 1px 0 rgba(255,255,255,.10);"></div><div style="top:1315.5px;height:29px;line-height:29px;font-size:22.5px;color:#eee;white-space:nowrap;letter-spacing:0.3px;left:-149.0px;width:1000px;text-align:center;">Stereo Out</div><div style="left:284px;top:1358px;width:134px;height:35px;background:#4b4b4b;border-radius:2px;"></div><div style="top:1361.5px;height:29px;line-height:29px;font-size:22.5px;color:#111;white-space:nowrap;letter-spacing:0.6px;left:-149.0px;width:1000px;text-align:center;">Group</div><div style="left:284px;top:1406px;width:134px;height:32px;background:#6b6b6b;border-radius:6px;box-shadow:0 1px 1.5px rgba(0,0,0,.55), inset 0 1px 0 rgba(255,255,255,.10);"></div><div style="top:1407.5px;height:29px;line-height:29px;font-size:22.5px;color:#63e577;white-space:nowrap;letter-spacing:0.6px;left:-149.0px;width:1000px;text-align:center;">Read</div><svg style="left:311.0px;top:1451px;" width="80" height="80" viewBox="0 0 80 80"><path d="M21.2 67.3A32.8 32.8 0 1 1 58.8 67.3" fill="none" stroke="#3a3a3a" stroke-width="7.5"/><path d="M40.0 11.0L40.0 4.5" stroke="#4fd667" stroke-width="2"/><circle cx="40" cy="40.5" r="28.5" fill="#8b8b8b"/><path d="M40.0 14.0L40.0 21.0" stroke="#111" stroke-width="2.400"/></svg><div style="left:282px;top:1538px;width:66px;height:36px;background:#363636;"></div><div style="left:354px;top:1538px;width:66px;height:36px;background:#363636;"></div><div style="top:1541.5px;height:30px;line-height:30px;font-size:23.5px;color:#ddd;white-space:nowrap;left:-186px;width:1000px;text-align:center;">-1.9</div><svg style="left:284px;top:1600px;" width="140" height="300" viewBox="0 0 140 300"><path d="M6 16.7h22.500" stroke="#959595" stroke-width="1.700"/><path d="M6 51.9h22.500" stroke="#959595" stroke-width="1.700"/><path d="M6 121.0h22.500" stroke="#959595" stroke-width="1.700"/><path d="M6 154.9h22.500" stroke="#959595" stroke-width="1.700"/><path d="M6 177.8h22.500" stroke="#959595" stroke-width="1.700"/><path d="M6 206.7h22.500" stroke="#959595" stroke-width="1.700"/><path d="M6 229.0h22.500" stroke="#959595" stroke-width="1.700"/><path d="M6 251.6h22.500" stroke="#959595" stroke-width="1.700"/><path d="M6 262.9h22.500" stroke="#959595" stroke-width="1.700"/><path d="M6 284.6h22.500" stroke="#959595" stroke-width="1.700"/><path d="M20.500 28.7h8" stroke="#959595" stroke-width="1.700"/><path d="M20.500 39.7h8" stroke="#959595" stroke-width="1.700"/><path d="M20.500 63.2h8" stroke="#959595" stroke-width="1.700"/><path d="M20.500 74.8h8" stroke="#959595" stroke-width="1.700"/><path d="M20.500 97.7h8" stroke="#959595" stroke-width="1.700"/><path d="M20.500 108.7h8" stroke="#959595" stroke-width="1.700"/><path d="M20.500 132.3h8" stroke="#959595" stroke-width="1.700"/><path d="M20.500 143.9h8" stroke="#959595" stroke-width="1.700"/><path d="M20.500 160.5h8" stroke="#959595" stroke-width="1.700"/><path d="M20.500 166.2h8" stroke="#959595" stroke-width="1.700"/><path d="M20.500 172.2h8" stroke="#959595" stroke-width="1.700"/><path d="M20.500 183.5h8" stroke="#959595" stroke-width="1.700"/><path d="M20.500 189.4h8" stroke="#959595" stroke-width="1.700"/><path d="M20.500 195.1h8" stroke="#959595" stroke-width="1.700"/><path d="M20.500 200.7h8" stroke="#959595" stroke-width="1.700"/><path d="M20.500 212.3h8" stroke="#959595" stroke-width="1.700"/><path d="M20.500 218.0h8" stroke="#959595" stroke-width="1.700"/><path d="M20.500 223.6h8" stroke="#959595" stroke-width="1.700"/><path d="M20.500 234.9h8" stroke="#959595" stroke-width="1.700"/><path d="M20.500 240.6h8" stroke="#959595" stroke-width="1.700"/><path d="M20.500 246.2h8" stroke="#959595" stroke-width="1.700"/><path d="M20.500 257.2h8" stroke="#959595" stroke-width="1.700"/><path d="M20.500 268.2h8" stroke="#959595" stroke-width="1.700"/><path d="M20.500 275.8h8" stroke="#959595" stroke-width="1.700"/><rect x="30.500" y="14" width="4" height="274" rx="2" fill="#3a3a3a"/><path d="M6 85.800h10" stroke="#f2f2f2" stroke-width="2.200"/><path d="M86.800 16v272" stroke="#959595" stroke-width="1.700" stroke-dasharray="1.500 2.300"/></svg><div style="top:1608.0px;height:18px;line-height:18px;font-size:15.5px;color:#a6a6a6;white-space:nowrap;letter-spacing:0.3px;left:-637px;width:1000px;text-align:right;-webkit-text-stroke:.3px;">0</div><div style="left:365px;top:1616.2px;width:5.5px;height:1.6px;background:#959595;"></div><div style="top:1625.5px;height:18px;line-height:18px;font-size:15.5px;color:#a6a6a6;white-space:nowrap;letter-spacing:0.3px;left:-637px;width:1000px;text-align:right;-webkit-text-stroke:.3px;">3</div><div style="left:365px;top:1633.7px;width:5.5px;height:1.6px;background:#959595;"></div><div style="top:1643.5px;height:18px;line-height:18px;font-size:15.5px;color:#a6a6a6;white-space:nowrap;letter-spacing:0.3px;left:-637px;width:1000px;text-align:right;-webkit-text-stroke:.3px;">6</div><div style="left:365px;top:1651.7px;width:5.5px;height:1.6px;background:#959595;"></div><div style="top:1661.5px;height:18px;line-height:18px;font-size:15.5px;color:#a6a6a6;white-space:nowrap;letter-spacing:0.3px;left:-637px;width:1000px;text-align:right;-webkit-text-stroke:.3px;">9</div><div style="left:365px;top:1669.7px;width:5.5px;height:1.6px;background:#959595;"></div><div style="top:1678.5px;height:18px;line-height:18px;font-size:15.5px;color:#a6a6a6;white-space:nowrap;letter-spacing:0.3px;left:-637px;width:1000px;text-align:right;-webkit-text-stroke:.3px;">12</div><div style="left:365px;top:1686.7px;width:5.5px;height:1.6px;background:#959595;"></div><div style="top:1697.0px;height:18px;line-height:18px;font-size:15.5px;color:#a6a6a6;white-space:nowrap;letter-spacing:0.3px;left:-637px;width:1000px;text-align:right;-webkit-text-stroke:.3px;">15</div><div style="left:365px;top:1705.2px;width:5.5px;height:1.6px;background:#959595;"></div><div style="top:1715.0px;height:18px;line-height:18px;font-size:15.5px;color:#a6a6a6;white-space:nowrap;letter-spacing:0.3px;left:-637px;width:1000px;text-align:right;-webkit-text-stroke:.3px;">18</div><div style="left:365px;top:1723.2px;width:5.5px;height:1.6px;background:#959595;"></div><div style="top:1732.5px;height:18px;line-height:18px;font-size:15.5px;color:#a6a6a6;white-space:nowrap;letter-spacing:0.3px;left:-637px;width:1000px;text-align:right;-webkit-text-stroke:.3px;">21</div><div style="left:365px;top:1740.7px;width:5.5px;height:1.6px;background:#959595;"></div><div style="top:1751.0px;height:18px;line-height:18px;font-size:15.5px;color:#a6a6a6;white-space:nowrap;letter-spacing:0.3px;left:-637px;width:1000px;text-align:right;-webkit-text-stroke:.3px;">24</div><div style="left:365px;top:1759.2px;width:5.5px;height:1.6px;background:#959595;"></div><div style="top:1774.5px;height:18px;line-height:18px;font-size:15.5px;color:#a6a6a6;white-space:nowrap;letter-spacing:0.3px;left:-637px;width:1000px;text-align:right;-webkit-text-stroke:.3px;">30</div><div style="left:365px;top:1782.7px;width:5.5px;height:1.6px;background:#959595;"></div><div style="top:1795.0px;height:18px;line-height:18px;font-size:15.5px;color:#a6a6a6;white-space:nowrap;letter-spacing:0.3px;left:-637px;width:1000px;text-align:right;-webkit-text-stroke:.3px;">35</div><div style="left:365px;top:1803.2px;width:5.5px;height:1.6px;background:#959595;"></div><div style="top:1814.0px;height:18px;line-height:18px;font-size:15.5px;color:#a6a6a6;white-space:nowrap;letter-spacing:0.3px;left:-637px;width:1000px;text-align:right;-webkit-text-stroke:.3px;">40</div><div style="left:365px;top:1822.2px;width:5.5px;height:1.6px;background:#959595;"></div><div style="top:1834.0px;height:18px;line-height:18px;font-size:15.5px;color:#a6a6a6;white-space:nowrap;letter-spacing:0.3px;left:-637px;width:1000px;text-align:right;-webkit-text-stroke:.3px;">45</div><div style="left:365px;top:1842.2px;width:5.5px;height:1.6px;background:#959595;"></div><div style="top:1854.0px;height:18px;line-height:18px;font-size:15.5px;color:#a6a6a6;white-space:nowrap;letter-spacing:0.3px;left:-637px;width:1000px;text-align:right;-webkit-text-stroke:.3px;">50</div><div style="left:365px;top:1862.2px;width:5.5px;height:1.6px;background:#959595;"></div><div style="top:1875.5px;height:18px;line-height:18px;font-size:15.5px;color:#a6a6a6;white-space:nowrap;letter-spacing:0.3px;left:-637px;width:1000px;text-align:right;-webkit-text-stroke:.3px;">60</div><div style="left:365px;top:1883.7px;width:5.5px;height:1.6px;background:#959595;"></div><div style="left:372.5px;top:1612px;width:23.5px;height:278px;background:#3a3a3a;border-radius:2px;"></div><div style="left:299px;top:1673px;width:34px;height:71px;border-radius:4px;background:repeating-linear-gradient(rgba(0,0,0,0) 0 4px,rgba(0,0,0,.10) 4px 5.500px),linear-gradient(#dcdcdc 0%,#cfcfcf 11%,#8f8f8f 13%,#979797 30%,#a4a4a4 47%,#4c4c4c 48.500%,#4c4c4c 50%,#d6d6d6 51.500%,#cdcdcd 70%,#c4c4c4 84%,#a0a0a0 86%,#8a8a8a 100%);box-shadow:0 2px 4px rgba(0,0,0,.55);"></div><div style="left:284px;top:1940px;width:62px;height:32px;background:#6b6b6b;border-radius:7px;box-shadow:0 1px 1.5px rgba(0,0,0,.55), inset 0 1px 0 rgba(255,255,255,.10);"></div><div style="left:356px;top:1940px;width:62px;height:32px;background:#6b6b6b;border-radius:7px;box-shadow:0 1px 1.5px rgba(0,0,0,.55), inset 0 1px 0 rgba(255,255,255,.10);"></div><div style="top:1941.0px;height:31px;line-height:31px;font-size:24.5px;color:#fff;white-space:nowrap;left:-185px;width:1000px;text-align:center;-webkit-text-stroke:.4px;">M</div><div style="top:1941.0px;height:31px;line-height:31px;font-size:24.5px;color:#fff;white-space:nowrap;left:-113px;width:1000px;text-align:center;-webkit-text-stroke:.4px;">S</div><div style="top:2002.0px;height:29px;line-height:29px;font-size:22.5px;color:#e4e4e4;white-space:nowrap;letter-spacing:0.45px;left:-383px;width:1000px;text-align:center;">lead voice...nd proq3</div><div style="top:2002.0px;height:29px;line-height:29px;font-size:22.5px;color:#e4e4e4;white-space:nowrap;letter-spacing:0.7px;left:-146.5px;width:1000px;text-align:center;">vocals</div></div><div style="left:470px;top:170px;width:4px;height:1876px;background:#000;"></div><div style="left:474px;top:170px;width:2982px;height:1874px;background:#82bdfb;border-radius:0 0 12px 0;"></div><div style="left:478px;top:174px;width:2973.5px;height:1866px;background:#2c2c2c;border-radius:0 0 10px 0;overflow:hidden;"><div style="left:0px;top:0px;width:2973px;height:71px;background:#464646;"></div><div style="left:0px;top:70px;width:2973px;height:1.5px;background:#3a3a3a;"></div><div style="left:0px;top:71.5px;width:644px;height:75px;background:#464646;"></div><div style="left:0px;top:146px;width:644px;height:1720px;background:#585858;"></div><div style="left:644px;top:71.5px;width:19px;height:1800px;background:linear-gradient(90deg,#272727 0,#2e2e2e 3px,#2e2e2e 15px,#282828 19px);"></div><div style="left:644px;top:71.5px;width:19px;height:75px;background:#3b3b3b;"></div><svg style="left:644px;top:73px;" width="19" height="34" viewBox="0 0 19 34"><path d="M1.500 1v27l14-13.500z" fill="#5c5c5c"/></svg><div style="left:16px;top:14px;width:66px;height:40px;background:#505050;border-radius:9px;box-shadow:0 1px 1.5px rgba(0,0,0,.5), inset 0 1px 0 rgba(255,255,255,.08);"></div><svg style="left:34px;top:19px;" width="30" height="30" viewBox="0 0 30 30"><path d="M14 5v14.500c0 4 2 6 6.500 6M6.500 12L14 4.500l7.500 7.500" fill="none" stroke="#9a9a9a" stroke-width="2.200" stroke-linecap="round" stroke-linejoin="round"/></svg><div style="left:100px;top:14px;width:442px;height:40px;background:#5a5a5a;border-radius:9px;box-shadow:0 1px 1.5px rgba(0,0,0,.5), inset 0 1px 0 rgba(255,255,255,.08);"></div><div style="left:218.5px;top:14px;width:1.5px;height:40px;background:#444;"></div><div style="left:410.5px;top:14px;width:1.5px;height:40px;background:#444;"></div><div style="top:15.5px;height:35px;line-height:35px;font-size:27.3px;color:#fff;white-space:nowrap;letter-spacing:-0.3px;left:120.5px;">Edit</div><svg style="left:184px;top:25px;" width="20" height="16" viewBox="0 0 20 16"><path d="M3 4.500l7 7 7-7" fill="none" stroke="#9d9d9d" stroke-width="2.600" stroke-linecap="round" stroke-linejoin="round"/></svg><div style="top:15.5px;height:35px;line-height:35px;font-size:27.3px;color:#fff;white-space:nowrap;left:240px;">Functions</div><svg style="left:375px;top:25px;" width="20" height="16" viewBox="0 0 20 16"><path d="M3 4.500l7 7 7-7" fill="none" stroke="#9d9d9d" stroke-width="2.600" stroke-linecap="round" stroke-linejoin="round"/></svg><div style="top:15.5px;height:35px;line-height:35px;font-size:27.3px;color:#fff;white-space:nowrap;letter-spacing:-0.4px;left:432.5px;">View</div><svg style="left:509px;top:25px;" width="20" height="16" viewBox="0 0 20 16"><path d="M3 4.500l7 7 7-7" fill="none" stroke="#9d9d9d" stroke-width="2.600" stroke-linecap="round" stroke-linejoin="round"/></svg><div style="left:560px;top:14px;width:126px;height:40px;background:#5a5a5a;border-radius:9px;box-shadow:0 1px 1.5px rgba(0,0,0,.5), inset 0 1px 0 rgba(255,255,255,.08);"></div><div style="left:623.5px;top:14px;width:62.5px;height:40px;background:#276cbd;border-radius:0 9px 9px 0;"></div><svg style="left:576px;top:23px;" width="32" height="24" viewBox="0 0 32 24"><rect x="2.0" y="2.0" width="4.400" height="4.400" fill="#fff"/><rect x="2.0" y="9.2" width="4.400" height="4.400" fill="#fff"/><rect x="2.0" y="16.4" width="4.400" height="4.400" fill="#fff"/><rect x="9.2" y="2.0" width="4.400" height="4.400" fill="#fff"/><rect x="9.2" y="9.2" width="4.400" height="4.400" fill="#fff"/><rect x="9.2" y="16.4" width="4.400" height="4.400" fill="#fff"/><rect x="16.4" y="2.0" width="4.400" height="4.400" fill="#fff"/><rect x="16.4" y="9.2" width="4.400" height="4.400" fill="#fff"/><rect x="16.4" y="16.4" width="4.400" height="4.400" fill="#fff"/><rect x="23.6" y="2.0" width="4.400" height="4.400" fill="#fff"/><rect x="23.6" y="9.2" width="4.400" height="4.400" fill="#fff"/><rect x="23.6" y="16.4" width="4.400" height="4.400" fill="#fff"/></svg><svg style="left:641px;top:24px;" width="28" height="22" viewBox="0 0 28 22"><g fill="#fff"><rect x="1" y="1" width="10" height="4.400"/><rect x="14" y="1" width="13" height="4.400"/><rect x="1" y="8.200" width="15" height="4.400"/><rect x="19" y="8.200" width="8" height="4.400"/><rect x="1" y="15.400" width="26" height="4.400"/></g></svg><div style="left:704px;top:14px;width:126px;height:40px;background:#5a5a5a;border-radius:9px;box-shadow:0 1px 1.5px rgba(0,0,0,.5), inset 0 1px 0 rgba(255,255,255,.08);"></div><div style="left:766px;top:14px;width:1.5px;height:40px;background:#444;"></div><svg style="left:715px;top:22px;" width="38" height="28" viewBox="0 0 38 28"><g fill="none" stroke="#fff" stroke-width="2"><path d="M1 20.500h6.500M13.500 17.500l9-10M28.500 5h7.500"/><circle cx="10.500" cy="20.500" r="3.400"/><circle cx="25" cy="5" r="3.400"/></g></svg><svg style="left:781px;top:20px;" width="34" height="28" viewBox="0 0 34 28"><path d="M4 7v14M30 7v14M4 7C4 2.500 9 3 12 7L22 21C25 25 30 25.500 30 21M4 21C4 25.500 9 25 12 21L22 7C25 3 30 2.500 30 7" fill="none" stroke="#fff" stroke-width="2.200" stroke-linejoin="round" stroke-linecap="round"/></svg><div style="left:848px;top:14px;width:66px;height:40px;background:#276cbd;border-radius:9px;box-shadow:0 1px 1.5px rgba(0,0,0,.5), inset 0 1px 0 rgba(255,255,255,.08);"></div><svg style="left:864px;top:19px;" width="34" height="32" viewBox="0 0 34 32"><path d="M11 7h12v3.500l-4 4.500h-4l-4-4.500z" fill="#fff"/><path d="M17 13v16.500" stroke="#fff" stroke-width="2.400"/><path d="M6 14l6 5.500-6 5.500M28 14l-6 5.500 6 5.500" fill="none" stroke="#fff" stroke-width="2" stroke-linecap="round" stroke-linejoin="round"/></svg><div style="left:1402px;top:14px;width:170px;height:40px;background:#5a5a5a;border-radius:9px;box-shadow:0 1px 1.5px rgba(0,0,0,.5), inset 0 1px 0 rgba(255,255,255,.08);"></div><div style="left:1487px;top:14px;width:1.5px;height:40px;background:#444;"></div><svg style="left:1420px;top:20px;" width="26" height="30" viewBox="0 0 26 30"><path d="M5 2v21l5.500-4.500 4 9 3.500-1.500-4-9 7-.5z" fill="#fff"/></svg><svg style="left:1452px;top:26px;" width="20" height="16" viewBox="0 0 20 16"><path d="M3 4.500l7 7 7-7" fill="none" stroke="#9d9d9d" stroke-width="2.600" stroke-linecap="round" stroke-linejoin="round"/></svg><svg style="left:1506px;top:20px;" width="28" height="28" viewBox="0 0 28 28"><path d="M14 3v22M3 14h22" stroke="#fff" stroke-width="2"/><rect x="12.500" y="12.500" width="3" height="3" fill="#5a5a5a"/></svg><svg style="left:1540px;top:26px;" width="20" height="16" viewBox="0 0 20 16"><path d="M3 4.500l7 7 7-7" fill="none" stroke="#9d9d9d" stroke-width="2.600" stroke-linecap="round" stroke-linejoin="round"/></svg><div style="top:13.5px;height:34px;line-height:34px;font-size:26.3px;color:#a4a4a4;white-space:nowrap;left:1710px;">Snap:</div><div style="left:1788px;top:12px;width:328px;height:40px;background:#5a5a5a;border-radius:9px;box-shadow:0 1px 1.5px rgba(0,0,0,.5), inset 0 1px 0 rgba(255,255,255,.08);"></div><div style="top:13.5px;height:34px;line-height:34px;font-size:26.3px;color:#fff;white-space:nowrap;left:1809px;">Smart</div><svg style="left:2087px;top:17px;" width="18" height="30" viewBox="0 0 18 30"><path d="M3 10l6-6.500 6 6.500M3 20l6 6.500 6-6.500" fill="none" stroke="#b5b5b5" stroke-width="2.400" stroke-linecap="round" stroke-linejoin="round"/></svg><div style="top:13.5px;height:34px;line-height:34px;font-size:26.3px;color:#a4a4a4;white-space:nowrap;left:2137px;">Drag:</div><div style="left:2210px;top:12px;width:210px;height:40px;background:#5a5a5a;border-radius:9px;box-shadow:0 1px 1.5px rgba(0,0,0,.5), inset 0 1px 0 rgba(255,255,255,.08);"></div><div style="top:13.5px;height:34px;line-height:34px;font-size:26.3px;color:#fff;white-space:nowrap;left:2231px;">X-Fade</div><svg style="left:2391px;top:17px;" width="18" height="30" viewBox="0 0 18 30"><path d="M3 10l6-6.500 6 6.500M3 20l6 6.500 6-6.500" fill="none" stroke="#b5b5b5" stroke-width="2.400" stroke-linecap="round" stroke-linejoin="round"/></svg><div style="left:2438px;top:12px;width:62px;height:40px;background:#5a5a5a;border-radius:9px;box-shadow:0 1px 1.5px rgba(0,0,0,.5), inset 0 1px 0 rgba(255,255,255,.08);"></div><svg style="left:2452px;top:17px;" width="34" height="30" viewBox="0 0 34 30"><g stroke="#fff" stroke-width="2.200" stroke-linecap="round"><path d="M4 12v6M9 9v12M14 2.500v25M19 7v16M24 9.500v11M29 12.500v5"/></g></svg><div style="left:2518px;top:12px;width:126px;height:40px;background:#5a5a5a;border-radius:9px;box-shadow:0 1px 1.5px rgba(0,0,0,.5), inset 0 1px 0 rgba(255,255,255,.08);"></div><div style="left:2579.5px;top:12px;width:1.5px;height:40px;background:#444;"></div><svg style="left:2534px;top:17px;" width="32" height="30" viewBox="0 0 32 30"><g fill="none" stroke="#fff" stroke-width="2" stroke-linecap="round" stroke-linejoin="round"><path d="M7 2h18M7 28h18M16 7v16M11.500 11.500L16 7l4.500 4.500M11.500 18.500L16 23l4.500-4.500"/></g></svg><svg style="left:2597px;top:18px;" width="32" height="28" viewBox="0 0 32 28"><g fill="none" stroke="#fff" stroke-width="2" stroke-linecap="round" stroke-linejoin="round"><path d="M4 5v18M28 5v18M9.500 14h13M13 10.500L9.500 14l3.500 3.500M19 10.500l3.500 3.500-3.500 3.500"/></g></svg><div style="left:2660px;top:12px;width:300px;height:40px;background:#3d3d3d;border-radius:9px;"></div><div style="left:2808px;top:12px;width:1.5px;height:40px;background:#2a2a2a;"></div><svg style="left:2671px;top:18px;" width="20" height="28" viewBox="0 0 20 28"><g fill="none" stroke="#c4c4c4" stroke-width="2.200" stroke-linecap="round" stroke-linejoin="round"><path d="M10 3v22M4 9l6-6 6 6M4 19l6 6 6-6"/></g></svg><div style="left:2704px;top:28px;width:92px;height:8px;background:#313131;border-radius:4px;"></div><div style="left:2732px;top:20px;width:24px;height:24px;background:#8f8f8f;border-radius:12px;"></div><svg style="left:2816px;top:22px;" width="30" height="20" viewBox="0 0 30 20"><g fill="none" stroke="#c4c4c4" stroke-width="2.200" stroke-linecap="round" stroke-linejoin="round"><path d="M5 10h20M10 5l-5 5 5 5M20 5l5 5-5 5"/></g></svg><div style="left:2853px;top:28px;width:93px;height:8px;background:#313131;border-radius:4px;"></div><div style="left:2858px;top:20px;width:24px;height:24px;background:#8f8f8f;border-radius:12px;"></div><div style="left:16px;top:88px;width:66px;height:40px;background:#5a5a5a;border-radius:9px;box-shadow:0 1px 1.5px rgba(0,0,0,.5), inset 0 1px 0 rgba(255,255,255,.08);"></div><svg style="left:35px;top:94px;" width="28" height="28" viewBox="0 0 28 28"><path d="M14 4v20M4 14h20" stroke="#fff" stroke-width="2.400" stroke-linecap="round"/></svg><div style="left:102px;top:88px;width:66px;height:40px;background:#5a5a5a;border-radius:9px;box-shadow:0 1px 1.5px rgba(0,0,0,.5), inset 0 1px 0 rgba(255,255,255,.08);"></div><svg style="left:120px;top:93px;" width="32" height="30" viewBox="0 0 32 30"><g fill="none" stroke="#fff" stroke-width="2"><path d="M7.500 20H6a3 3 0 0 1-3-3V6a3 3 0 0 1 3-3h11a3 3 0 0 1 3 3v1.500"/><rect x="9" y="9" width="18" height="18" rx="3"/><path d="M18 13v10M13 18h10" stroke-linecap="round"/></g></svg><div style="left:188px;top:88px;width:66px;height:40px;background:#c06a1a;border-radius:9px;box-shadow:0 1px 1.5px rgba(0,0,0,.5), inset 0 1px 0 rgba(255,255,255,.08);"></div><div style="top:90.0px;height:37px;line-height:37px;font-size:29px;color:#fff;white-space:nowrap;left:-279px;width:1000px;text-align:center;">H</div><div style="left:274px;top:88px;width:66px;height:40px;background:#5a5a5a;border-radius:9px;box-shadow:0 1px 1.5px rgba(0,0,0,.5), inset 0 1px 0 rgba(255,255,255,.08);"></div><div style="top:90.0px;height:37px;line-height:37px;font-size:29px;color:#fff;white-space:nowrap;left:-193px;width:1000px;text-align:center;">S</div><div style="left:558px;top:88px;width:66px;height:40px;background:#5a5a5a;border-radius:9px;box-shadow:0 1px 1.5px rgba(0,0,0,.5), inset 0 1px 0 rgba(255,255,255,.08);"></div><svg style="left:575px;top:96px;" width="32" height="26" viewBox="0 0 32 26"><g fill="none" stroke="#fff" stroke-width="2" stroke-linecap="round" stroke-linejoin="round"><rect x="2" y="2" width="28" height="21" rx="2.500"/><path d="M2 6.500h28M16 10v9M12 15.500l4 4 4-4"/></g></svg><div style="left:0px;top:146px;width:36px;height:16.5px;background:#1f7d7c;"></div><div style="left:0px;top:162.5px;width:644px;height:1.8px;background:#454545;"></div><div style="left:36px;top:146px;width:2px;height:17px;background:#454545;"></div><div style="left:0px;top:164px;width:36px;height:146.5px;background:#1f7d7c;"></div><div style="left:36px;top:164px;width:2px;height:146.5px;background:#454545;"></div><div style="left:0px;top:310.5px;width:644px;height:1.8px;background:#454545;"></div><div style="top:220.0px;height:35px;line-height:35px;font-size:27px;color:#fff;white-space:nowrap;letter-spacing:-0.5px;left:-482px;width:1000px;text-align:center;">11</div><svg style="left:62.0px;top:212.5px;" width="55" height="50" viewBox="0 0 55 50"><g fill="#004b4e"><ellipse cx="19.5" cy="8" rx="5.2" ry="6.6"/><path d="M16.5 13.0h6.0v4.0c1.0 2.5 9.0 2.5 9.5 8.0v3.0h-25.0v-3.0c0.5-5.5 8.5-5.5 9.5-8.0z"/><ellipse cx="34.5" cy="8" rx="5.2" ry="6.6"/><path d="M31.5 13.0h6.0v4.0c1.0 2.5 9.0 2.5 9.5 8.0v3.0h-25.0v-3.0c0.5-5.5 8.5-5.5 9.5-8.0z"/></g><g fill="#004b4e" stroke="#585858" stroke-width="1.600" paint-order="stroke"><ellipse cx="11.5" cy="27.5" rx="4.9" ry="6.3"/><path d="M8.7 32.2h5.7v3.8c0.9 2.4 8.5 2.4 9.0 7.6v2.8h-23.8v-2.8c0.5-5.2 8.1-5.2 9.0-7.6z"/><ellipse cx="42.5" cy="27.5" rx="4.9" ry="6.3"/><path d="M39.6 32.2h5.7v3.8c0.9 2.4 8.5 2.4 9.0 7.6v2.8h-23.8v-2.8c0.5-5.2 8.1-5.2 9.0-7.6z"/><ellipse cx="27" cy="27.5" rx="4.9" ry="6.3"/><path d="M24.1 32.2h5.7v3.8c0.9 2.4 8.5 2.4 9.0 7.6v2.8h-23.8v-2.8c0.5-5.2 8.1-5.2 9.0-7.6z"/></g><rect x="0" y="44" width="55" height="5.500" fill="#004b4e"/></svg><div style="top:198.0px;height:34px;line-height:34px;font-size:26.8px;color:#fff;white-space:nowrap;letter-spacing:-0.08px;left:138.5px;">morw harmonies pt 4_1</div><div style="left:140px;top:242.5px;width:82px;height:31px;background:#6b6b6b;border-radius:7px;box-shadow:0 1px 1.5px rgba(0,0,0,.55), inset 0 1px 0 rgba(255,255,255,.10);"></div><div style="left:180.5px;top:242.5px;width:1.5px;height:31px;background:#4c4c4c;"></div><div style="top:243.0px;height:31px;line-height:31px;font-size:24.5px;color:#fff;white-space:nowrap;left:-339.5px;width:1000px;text-align:center;">M</div><div style="top:243.0px;height:31px;line-height:31px;font-size:24.5px;color:#fff;white-space:nowrap;left:-298.5px;width:1000px;text-align:center;">S</div><div style="left:233.5px;top:242.5px;width:41px;height:31px;background:#6b6b6b;border-radius:7px;box-shadow:0 1px 1.5px rgba(0,0,0,.55), inset 0 1px 0 rgba(255,255,255,.10);"></div><div style="top:243.0px;height:31px;line-height:31px;font-size:24.5px;color:#fff;white-space:nowrap;left:-246px;width:1000px;text-align:center;">R</div><div style="left:328px;top:240px;width:230px;height:36px;background:#383838;border-radius:18px;"></div><div style="left:361.70000000000005px;top:242px;width:32px;height:32px;background:#8b8b8b;border-radius:16px;"></div><svg style="left:567px;top:227px;" width="60" height="60" viewBox="0 0 60 60"><path d="M17.6 47.7A21.6 21.6 0 1 1 42.4 47.7" fill="none" stroke="#3a3a3a" stroke-width="7.8"/><path d="M30.0 8.4A21.6 21.6 0 0 1 49.1 19.9" fill="none" stroke="#4fd667" stroke-width="7.8"/><circle cx="30" cy="30" r="17.2" fill="#8b8b8b"/><path d="M43.4 22.9L39.0 25.2" stroke="#111" stroke-width="2.400"/></svg><div style="left:0px;top:312px;width:36px;height:146.5px;background:#1f7d7c;"></div><div style="left:36px;top:312px;width:2px;height:146.5px;background:#454545;"></div><div style="left:0px;top:458.5px;width:644px;height:1.8px;background:#454545;"></div><div style="top:368.0px;height:35px;line-height:35px;font-size:27px;color:#fff;white-space:nowrap;letter-spacing:-0.5px;left:-482px;width:1000px;text-align:center;">12</div><svg style="left:62.0px;top:360.5px;" width="55" height="50" viewBox="0 0 55 50"><g fill="#004b4e"><ellipse cx="19.5" cy="8" rx="5.2" ry="6.6"/><path d="M16.5 13.0h6.0v4.0c1.0 2.5 9.0 2.5 9.5 8.0v3.0h-25.0v-3.0c0.5-5.5 8.5-5.5 9.5-8.0z"/><ellipse cx="34.5" cy="8" rx="5.2" ry="6.6"/><path d="M31.5 13.0h6.0v4.0c1.0 2.5 9.0 2.5 9.5 8.0v3.0h-25.0v-3.0c0.5-5.5 8.5-5.5 9.5-8.0z"/></g><g fill="#004b4e" stroke="#585858" stroke-width="1.600" paint-order="stroke"><ellipse cx="11.5" cy="27.5" rx="4.9" ry="6.3"/><path d="M8.7 32.2h5.7v3.8c0.9 2.4 8.5 2.4 9.0 7.6v2.8h-23.8v-2.8c0.5-5.2 8.1-5.2 9.0-7.6z"/><ellipse cx="42.5" cy="27.5" rx="4.9" ry="6.3"/><path d="M39.6 32.2h5.7v3.8c0.9 2.4 8.5 2.4 9.0 7.6v2.8h-23.8v-2.8c0.5-5.2 8.1-5.2 9.0-7.6z"/><ellipse cx="27" cy="27.5" rx="4.9" ry="6.3"/><path d="M24.1 32.2h5.7v3.8c0.9 2.4 8.5 2.4 9.0 7.6v2.8h-23.8v-2.8c0.5-5.2 8.1-5.2 9.0-7.6z"/></g><rect x="0" y="44" width="55" height="5.500" fill="#004b4e"/></svg><div style="top:346.0px;height:34px;line-height:34px;font-size:26.8px;color:#fff;white-space:nowrap;letter-spacing:-0.08px;left:138.5px;">oooo harmnoies 3_1</div><div style="left:140px;top:390.5px;width:82px;height:31px;background:#6b6b6b;border-radius:7px;box-shadow:0 1px 1.5px rgba(0,0,0,.55), inset 0 1px 0 rgba(255,255,255,.10);"></div><div style="left:180.5px;top:390.5px;width:1.5px;height:31px;background:#4c4c4c;"></div><div style="top:391.0px;height:31px;line-height:31px;font-size:24.5px;color:#fff;white-space:nowrap;left:-339.5px;width:1000px;text-align:center;">M</div><div style="top:391.0px;height:31px;line-height:31px;font-size:24.5px;color:#fff;white-space:nowrap;left:-298.5px;width:1000px;text-align:center;">S</div><div style="left:233.5px;top:390.5px;width:41px;height:31px;background:#6b6b6b;border-radius:7px;box-shadow:0 1px 1.5px rgba(0,0,0,.55), inset 0 1px 0 rgba(255,255,255,.10);"></div><div style="top:391.0px;height:31px;line-height:31px;font-size:24.5px;color:#fff;white-space:nowrap;left:-246px;width:1000px;text-align:center;">R</div><div style="left:328px;top:388px;width:230px;height:36px;background:#383838;border-radius:18px;"></div><div style="left:369.70000000000005px;top:390px;width:32px;height:32px;background:#8b8b8b;border-radius:16px;"></div><svg style="left:567px;top:375px;" width="60" height="60" viewBox="0 0 60 60"><path d="M17.6 47.7A21.6 21.6 0 1 1 42.4 47.7" fill="none" stroke="#3a3a3a" stroke-width="7.8"/><path d="M30.0 11.8L30.0 5.0" stroke="#4fd667" stroke-width="2"/><circle cx="30" cy="30" r="17.2" fill="#8b8b8b"/><path d="M30.0 14.8L30.0 19.8" stroke="#111" stroke-width="2.400"/></svg><div style="left:0px;top:460px;width:36px;height:146.5px;background:#1f7d7c;"></div><div style="left:36px;top:460px;width:2px;height:146.5px;background:#454545;"></div><div style="left:0px;top:606.5px;width:644px;height:1.8px;background:#454545;"></div><div style="top:516.0px;height:35px;line-height:35px;font-size:27px;color:#fff;white-space:nowrap;letter-spacing:-0.5px;left:-482px;width:1000px;text-align:center;">13</div><svg style="left:62.0px;top:508.5px;" width="55" height="50" viewBox="0 0 55 50"><g fill="#004b4e"><ellipse cx="19.5" cy="8" rx="5.2" ry="6.6"/><path d="M16.5 13.0h6.0v4.0c1.0 2.5 9.0 2.5 9.5 8.0v3.0h-25.0v-3.0c0.5-5.5 8.5-5.5 9.5-8.0z"/><ellipse cx="34.5" cy="8" rx="5.2" ry="6.6"/><path d="M31.5 13.0h6.0v4.0c1.0 2.5 9.0 2.5 9.5 8.0v3.0h-25.0v-3.0c0.5-5.5 8.5-5.5 9.5-8.0z"/></g><g fill="#004b4e" stroke="#585858" stroke-width="1.600" paint-order="stroke"><ellipse cx="11.5" cy="27.5" rx="4.9" ry="6.3"/><path d="M8.7 32.2h5.7v3.8c0.9 2.4 8.5 2.4 9.0 7.6v2.8h-23.8v-2.8c0.5-5.2 8.1-5.2 9.0-7.6z"/><ellipse cx="42.5" cy="27.5" rx="4.9" ry="6.3"/><path d="M39.6 32.2h5.7v3.8c0.9 2.4 8.5 2.4 9.0 7.6v2.8h-23.8v-2.8c0.5-5.2 8.1-5.2 9.0-7.6z"/><ellipse cx="27" cy="27.5" rx="4.9" ry="6.3"/><path d="M24.1 32.2h5.7v3.8c0.9 2.4 8.5 2.4 9.0 7.6v2.8h-23.8v-2.8c0.5-5.2 8.1-5.2 9.0-7.6z"/></g><rect x="0" y="44" width="55" height="5.500" fill="#004b4e"/></svg><div style="top:494.0px;height:34px;line-height:34px;font-size:26.8px;color:#fff;white-space:nowrap;letter-spacing:-0.08px;left:138.5px;">oooo harmonies 1_1</div><div style="left:140px;top:538.5px;width:82px;height:31px;background:#6b6b6b;border-radius:7px;box-shadow:0 1px 1.5px rgba(0,0,0,.55), inset 0 1px 0 rgba(255,255,255,.10);"></div><div style="left:180.5px;top:538.5px;width:1.5px;height:31px;background:#4c4c4c;"></div><div style="top:539.0px;height:31px;line-height:31px;font-size:24.5px;color:#fff;white-space:nowrap;left:-339.5px;width:1000px;text-align:center;">M</div><div style="top:539.0px;height:31px;line-height:31px;font-size:24.5px;color:#fff;white-space:nowrap;left:-298.5px;width:1000px;text-align:center;">S</div><div style="left:233.5px;top:538.5px;width:41px;height:31px;background:#6b6b6b;border-radius:7px;box-shadow:0 1px 1.5px rgba(0,0,0,.55), inset 0 1px 0 rgba(255,255,255,.10);"></div><div style="top:539.0px;height:31px;line-height:31px;font-size:24.5px;color:#fff;white-space:nowrap;left:-246px;width:1000px;text-align:center;">R</div><div style="left:328px;top:536px;width:230px;height:36px;background:#383838;border-radius:18px;"></div><div style="left:353.6px;top:538px;width:32px;height:32px;background:#8b8b8b;border-radius:16px;"></div><svg style="left:567px;top:523px;" width="60" height="60" viewBox="0 0 60 60"><path d="M17.6 47.7A21.6 21.6 0 1 1 42.4 47.7" fill="none" stroke="#3a3a3a" stroke-width="7.8"/><path d="M30.0 11.8L30.0 5.0" stroke="#4fd667" stroke-width="2"/><circle cx="30" cy="30" r="17.2" fill="#8b8b8b"/><path d="M30.0 14.8L30.0 19.8" stroke="#111" stroke-width="2.400"/></svg><div style="left:0px;top:608px;width:36px;height:146.5px;background:#c9a612;"></div><div style="left:36px;top:608px;width:2px;height:146.5px;background:#454545;"></div><div style="left:0px;top:754.5px;width:644px;height:1.8px;background:#454545;"></div><div style="top:664.0px;height:35px;line-height:35px;font-size:27px;color:#fff;white-space:nowrap;letter-spacing:-0.5px;left:-482px;width:1000px;text-align:center;">15</div><svg style="left:60.5px;top:652.0px;" width="60" height="56" viewBox="0 0 60 56"><g fill="#f2c40f" stroke="none"><path d="M2 6.500c8-2.500 20-2.500 28 0-8 2.500-20 2.500-28 0z"/><path d="M44 16.500c4-1.500 10-1.500 14 0-4 1.500-10 1.500-14 0z"/><rect x="16" y="13" width="12.500" height="10" rx="1"/><rect x="31" y="13" width="12.500" height="10" rx="1"/><rect x="1" y="23" width="14" height="16" rx="1"/><rect x="42" y="25" width="12" height="11" rx="1"/></g><g fill="none" stroke="#f2c40f" stroke-width="1.800"><circle cx="30" cy="39" r="13.500"/><circle cx="30" cy="39" r="11.500" stroke-width="1"/><path d="M15.500 1v6M11 7v42M11 46l-8 7M11 46l8 7M50 12v37M50 46l-8 7M50 46l8 7M16 6l-13 10"/></g></svg><div style="top:642.0px;height:34px;line-height:34px;font-size:26.8px;color:#fff;white-space:nowrap;letter-spacing:-0.08px;left:138.5px;">Bluebird</div><div style="left:140px;top:686.5px;width:82px;height:31px;background:#6b6b6b;border-radius:7px;box-shadow:0 1px 1.5px rgba(0,0,0,.55), inset 0 1px 0 rgba(255,255,255,.10);"></div><div style="left:180.5px;top:686.5px;width:1.5px;height:31px;background:#4c4c4c;"></div><div style="top:687.0px;height:31px;line-height:31px;font-size:24.5px;color:#fff;white-space:nowrap;left:-339.5px;width:1000px;text-align:center;">M</div><div style="top:687.0px;height:31px;line-height:31px;font-size:24.5px;color:#fff;white-space:nowrap;left:-298.5px;width:1000px;text-align:center;">S</div><div style="left:233.5px;top:686.5px;width:82px;height:31px;background:#6b6b6b;border-radius:7px;box-shadow:0 1px 1.5px rgba(0,0,0,.55), inset 0 1px 0 rgba(255,255,255,.10);"></div><div style="left:274px;top:686.5px;width:1.5px;height:31px;background:#4c4c4c;"></div><div style="top:687.0px;height:31px;line-height:31px;font-size:24.5px;color:#fff;white-space:nowrap;left:-205px;width:1000px;text-align:center;">I</div><div style="top:687.0px;height:31px;line-height:31px;font-size:24.5px;color:#fff;white-space:nowrap;left:-246px;width:1000px;text-align:center;">R</div><div style="left:328px;top:684px;width:230px;height:36px;background:#383838;border-radius:18px;"></div><div style="left:367.29999999999995px;top:686px;width:32px;height:32px;background:#8b8b8b;border-radius:16px;"></div><svg style="left:567px;top:671px;" width="60" height="60" viewBox="0 0 60 60"><path d="M17.6 47.7A21.6 21.6 0 1 1 42.4 47.7" fill="none" stroke="#3a3a3a" stroke-width="7.8"/><path d="M30.0 11.8L30.0 5.0" stroke="#4fd667" stroke-width="2"/><circle cx="30" cy="30" r="17.2" fill="#8b8b8b"/><path d="M30.0 14.8L30.0 19.8" stroke="#111" stroke-width="2.400"/></svg><div style="left:0px;top:756px;width:36px;height:146.5px;background:#c85a10;"></div><div style="left:36px;top:756px;width:2px;height:146.5px;background:#454545;"></div><div style="left:0px;top:902.5px;width:644px;height:1.8px;background:#454545;"></div><div style="top:812.0px;height:35px;line-height:35px;font-size:27px;color:#fff;white-space:nowrap;letter-spacing:-0.5px;left:-482px;width:1000px;text-align:center;">16</div><svg style="left:59.5px;top:800.5px;" width="62" height="60" viewBox="0 0 62 60"><g transform="translate(16.5 43.5) rotate(45) scale(0.97)" fill="#ff7e27"><path d="M-3-13C-8-16.500-13-14-12.500-8.500-12-4.500-9.500-2.500-11 2-13.500 9-12 16.500 0 16.500 12 16.500 14 9 11 2.500 9.500-1 10.500-3.500 9.500-7 8.500-10 4-9.500 3-13z"/><rect x="-1.900" y="-50" width="3.800" height="38"/><path d="M-2.200-50l-.8-9c0-1.500 1.500-2.500 3-2l3.500 1.500v4.500l-1.300 5z"/><rect x="-4.500" y="-3" width="9" height="3.200" fill="#585858"/><rect x="-5" y="6" width="10" height="2.600" fill="#585858" transform="rotate(-12 0 7)"/><circle cx="6" cy="11" r="1.200" fill="#585858"/></g></svg><div style="top:790.0px;height:34px;line-height:34px;font-size:26.8px;color:#fff;white-space:nowrap;letter-spacing:-0.08px;left:138.5px;">Two Note Guitar L</div><div style="left:140px;top:834.5px;width:82px;height:31px;background:#6b6b6b;border-radius:7px;box-shadow:0 1px 1.5px rgba(0,0,0,.55), inset 0 1px 0 rgba(255,255,255,.10);"></div><div style="left:180.5px;top:834.5px;width:1.5px;height:31px;background:#4c4c4c;"></div><div style="top:835.0px;height:31px;line-height:31px;font-size:24.5px;color:#fff;white-space:nowrap;left:-339.5px;width:1000px;text-align:center;">M</div><div style="top:835.0px;height:31px;line-height:31px;font-size:24.5px;color:#fff;white-space:nowrap;left:-298.5px;width:1000px;text-align:center;">S</div><div style="left:233.5px;top:834.5px;width:41px;height:31px;background:#6b6b6b;border-radius:7px;box-shadow:0 1px 1.5px rgba(0,0,0,.55), inset 0 1px 0 rgba(255,255,255,.10);"></div><div style="top:835.0px;height:31px;line-height:31px;font-size:24.5px;color:#fff;white-space:nowrap;left:-246px;width:1000px;text-align:center;">R</div><div style="left:328px;top:832px;width:230px;height:36px;background:#383838;border-radius:18px;"></div><div style="left:345.6px;top:834px;width:32px;height:32px;background:#8b8b8b;border-radius:16px;"></div><svg style="left:567px;top:819px;" width="60" height="60" viewBox="0 0 60 60"><path d="M17.6 47.7A21.6 21.6 0 1 1 42.4 47.7" fill="none" stroke="#3a3a3a" stroke-width="7.8"/><path d="M8.6 27.0A21.6 21.6 0 0 1 30.0 8.4" fill="none" stroke="#4fd667" stroke-width="7.8"/><circle cx="30" cy="30" r="17.2" fill="#8b8b8b"/><path d="M14.9 27.9L19.9 28.6" stroke="#111" stroke-width="2.400"/></svg><div style="left:0px;top:904px;width:36px;height:146.5px;background:#c85a10;"></div><div style="left:36px;top:904px;width:2px;height:146.5px;background:#454545;"></div><div style="left:0px;top:1050.5px;width:644px;height:1.8px;background:#454545;"></div><div style="top:960.0px;height:35px;line-height:35px;font-size:27px;color:#fff;white-space:nowrap;letter-spacing:-0.5px;left:-482px;width:1000px;text-align:center;">17</div><svg style="left:59.5px;top:948.5px;" width="62" height="60" viewBox="0 0 62 60"><g transform="translate(16.5 43.5) rotate(45) scale(0.97)" fill="#ff7e27"><path d="M-3-13C-8-16.500-13-14-12.500-8.500-12-4.500-9.500-2.500-11 2-13.500 9-12 16.500 0 16.500 12 16.500 14 9 11 2.500 9.500-1 10.500-3.500 9.500-7 8.500-10 4-9.500 3-13z"/><rect x="-1.900" y="-50" width="3.800" height="38"/><path d="M-2.200-50l-.8-9c0-1.500 1.500-2.500 3-2l3.500 1.500v4.500l-1.300 5z"/><rect x="-4.500" y="-3" width="9" height="3.200" fill="#585858"/><rect x="-5" y="6" width="10" height="2.600" fill="#585858" transform="rotate(-12 0 7)"/><circle cx="6" cy="11" r="1.200" fill="#585858"/></g></svg><div style="top:938.0px;height:34px;line-height:34px;font-size:26.8px;color:#fff;white-space:nowrap;letter-spacing:-0.08px;left:138.5px;">Two Note Guitar R</div><div style="left:140px;top:982.5px;width:82px;height:31px;background:#6b6b6b;border-radius:7px;box-shadow:0 1px 1.5px rgba(0,0,0,.55), inset 0 1px 0 rgba(255,255,255,.10);"></div><div style="left:180.5px;top:982.5px;width:1.5px;height:31px;background:#4c4c4c;"></div><div style="top:983.0px;height:31px;line-height:31px;font-size:24.5px;color:#fff;white-space:nowrap;left:-339.5px;width:1000px;text-align:center;">M</div><div style="top:983.0px;height:31px;line-height:31px;font-size:24.5px;color:#fff;white-space:nowrap;left:-298.5px;width:1000px;text-align:center;">S</div><div style="left:233.5px;top:982.5px;width:41px;height:31px;background:#6b6b6b;border-radius:7px;box-shadow:0 1px 1.5px rgba(0,0,0,.55), inset 0 1px 0 rgba(255,255,255,.10);"></div><div style="top:983.0px;height:31px;line-height:31px;font-size:24.5px;color:#fff;white-space:nowrap;left:-246px;width:1000px;text-align:center;">R</div><div style="left:328px;top:980px;width:230px;height:36px;background:#383838;border-radius:18px;"></div><div style="left:345.6px;top:982px;width:32px;height:32px;background:#8b8b8b;border-radius:16px;"></div><svg style="left:567px;top:967px;" width="60" height="60" viewBox="0 0 60 60"><path d="M17.6 47.7A21.6 21.6 0 1 1 42.4 47.7" fill="none" stroke="#3a3a3a" stroke-width="7.8"/><path d="M30.0 8.4A21.6 21.6 0 0 1 51.5 31.9" fill="none" stroke="#4fd667" stroke-width="7.8"/><circle cx="30" cy="30" r="17.2" fill="#8b8b8b"/><path d="M45.1 31.3L40.2 30.9" stroke="#111" stroke-width="2.400"/></svg><div style="left:0px;top:1052px;width:36px;height:146.5px;background:#c85a10;"></div><div style="left:36px;top:1052px;width:2px;height:146.5px;background:#454545;"></div><div style="left:0px;top:1198.5px;width:644px;height:1.8px;background:#454545;"></div><div style="top:1108.0px;height:35px;line-height:35px;font-size:27px;color:#fff;white-space:nowrap;letter-spacing:-0.5px;left:-482px;width:1000px;text-align:center;">19</div><svg style="left:59.5px;top:1096.5px;" width="62" height="60" viewBox="0 0 62 60"><g transform="translate(16.5 43.5) rotate(45) scale(0.97)" fill="#ff7e27"><path d="M-3-13C-8-16.500-13-14-12.500-8.500-12-4.500-9.500-2.500-11 2-13.500 9-12 16.500 0 16.500 12 16.500 14 9 11 2.500 9.500-1 10.500-3.500 9.500-7 8.500-10 4-9.500 3-13z"/><rect x="-1.900" y="-50" width="3.800" height="38"/><path d="M-2.200-50l-.8-9c0-1.500 1.500-2.500 3-2l3.500 1.500v4.500l-1.300 5z"/><rect x="-4.500" y="-3" width="9" height="3.200" fill="#585858"/><rect x="-5" y="6" width="10" height="2.600" fill="#585858" transform="rotate(-12 0 7)"/><circle cx="6" cy="11" r="1.200" fill="#585858"/></g></svg><div style="top:1086.0px;height:34px;line-height:34px;font-size:26.8px;color:#fff;white-space:nowrap;letter-spacing:-0.08px;left:138.5px;">Picking Guitar L</div><div style="left:140px;top:1130.5px;width:82px;height:31px;background:#6b6b6b;border-radius:7px;box-shadow:0 1px 1.5px rgba(0,0,0,.55), inset 0 1px 0 rgba(255,255,255,.10);"></div><div style="left:180.5px;top:1130.5px;width:1.5px;height:31px;background:#4c4c4c;"></div><div style="top:1131.0px;height:31px;line-height:31px;font-size:24.5px;color:#fff;white-space:nowrap;left:-339.5px;width:1000px;text-align:center;">M</div><div style="top:1131.0px;height:31px;line-height:31px;font-size:24.5px;color:#fff;white-space:nowrap;left:-298.5px;width:1000px;text-align:center;">S</div><div style="left:233.5px;top:1130.5px;width:41px;height:31px;background:#6b6b6b;border-radius:7px;box-shadow:0 1px 1.5px rgba(0,0,0,.55), inset 0 1px 0 rgba(255,255,255,.10);"></div><div style="top:1131.0px;height:31px;line-height:31px;font-size:24.5px;color:#fff;white-space:nowrap;left:-246px;width:1000px;text-align:center;">R</div><div style="left:328px;top:1128px;width:230px;height:36px;background:#383838;border-radius:18px;"></div><div style="left:359.79999999999995px;top:1130px;width:32px;height:32px;background:#8b8b8b;border-radius:16px;"></div><svg style="left:567px;top:1115px;" width="60" height="60" viewBox="0 0 60 60"><path d="M17.6 47.7A21.6 21.6 0 1 1 42.4 47.7" fill="none" stroke="#3a3a3a" stroke-width="7.8"/><path d="M10.9 40.1A21.6 21.6 0 0 1 30.0 8.4" fill="none" stroke="#4fd667" stroke-width="7.8"/><circle cx="30" cy="30" r="17.2" fill="#8b8b8b"/><path d="M16.6 37.1L21.0 34.8" stroke="#111" stroke-width="2.400"/></svg><div style="left:0px;top:1200px;width:36px;height:146.5px;background:#c85a10;"></div><div style="left:36px;top:1200px;width:2px;height:146.5px;background:#454545;"></div><div style="left:0px;top:1346.5px;width:644px;height:1.8px;background:#454545;"></div><div style="top:1256.0px;height:35px;line-height:35px;font-size:27px;color:#fff;white-space:nowrap;letter-spacing:-0.5px;left:-482px;width:1000px;text-align:center;">20</div><svg style="left:59.5px;top:1244.5px;" width="62" height="60" viewBox="0 0 62 60"><g transform="translate(16.5 43.5) rotate(45) scale(0.97)" fill="#ff7e27"><path d="M-3-13C-8-16.500-13-14-12.500-8.500-12-4.500-9.500-2.500-11 2-13.500 9-12 16.500 0 16.500 12 16.500 14 9 11 2.500 9.500-1 10.500-3.500 9.500-7 8.500-10 4-9.500 3-13z"/><rect x="-1.900" y="-50" width="3.800" height="38"/><path d="M-2.200-50l-.8-9c0-1.500 1.500-2.500 3-2l3.500 1.500v4.500l-1.300 5z"/><rect x="-4.500" y="-3" width="9" height="3.200" fill="#585858"/><rect x="-5" y="6" width="10" height="2.600" fill="#585858" transform="rotate(-12 0 7)"/><circle cx="6" cy="11" r="1.200" fill="#585858"/></g></svg><div style="top:1234.0px;height:34px;line-height:34px;font-size:26.8px;color:#fff;white-space:nowrap;letter-spacing:-0.08px;left:138.5px;">Picking Guitar R</div><div style="left:140px;top:1278.5px;width:82px;height:31px;background:#6b6b6b;border-radius:7px;box-shadow:0 1px 1.5px rgba(0,0,0,.55), inset 0 1px 0 rgba(255,255,255,.10);"></div><div style="left:180.5px;top:1278.5px;width:1.5px;height:31px;background:#4c4c4c;"></div><div style="top:1279.0px;height:31px;line-height:31px;font-size:24.5px;color:#fff;white-space:nowrap;left:-339.5px;width:1000px;text-align:center;">M</div><div style="top:1279.0px;height:31px;line-height:31px;font-size:24.5px;color:#fff;white-space:nowrap;left:-298.5px;width:1000px;text-align:center;">S</div><div style="left:233.5px;top:1278.5px;width:41px;height:31px;background:#6b6b6b;border-radius:7px;box-shadow:0 1px 1.5px rgba(0,0,0,.55), inset 0 1px 0 rgba(255,255,255,.10);"></div><div style="top:1279.0px;height:31px;line-height:31px;font-size:24.5px;color:#fff;white-space:nowrap;left:-246px;width:1000px;text-align:center;">R</div><div style="left:328px;top:1276px;width:230px;height:36px;background:#383838;border-radius:18px;"></div><div style="left:353.6px;top:1278px;width:32px;height:32px;background:#8b8b8b;border-radius:16px;"></div><svg style="left:567px;top:1263px;" width="60" height="60" viewBox="0 0 60 60"><path d="M17.6 47.7A21.6 21.6 0 1 1 42.4 47.7" fill="none" stroke="#3a3a3a" stroke-width="7.8"/><path d="M30.0 8.4A21.6 21.6 0 0 1 48.7 40.8" fill="none" stroke="#4fd667" stroke-width="7.8"/><circle cx="30" cy="30" r="17.2" fill="#8b8b8b"/><path d="M43.2 37.6L38.8 35.1" stroke="#111" stroke-width="2.400"/></svg><div style="left:0px;top:1348px;width:36px;height:146.5px;background:#c9a612;"></div><div style="left:36px;top:1348px;width:2px;height:146.5px;background:#454545;"></div><div style="left:0px;top:1494.5px;width:644px;height:1.8px;background:#454545;"></div><div style="top:1404.0px;height:35px;line-height:35px;font-size:27px;color:#fff;white-space:nowrap;letter-spacing:-0.5px;left:-482px;width:1000px;text-align:center;">24</div><svg style="left:59.5px;top:1392.5px;" width="62" height="60" viewBox="0 0 62 60"><g transform="translate(14.5 44.5) rotate(45) scale(0.97)" fill="#f2c40f"><path d="M-3-12C-5-17-11-21-12.500-19-13.500-15-10-8-10.500-4-11 0-13 4-12.500 9-12 15-7 17.500 0 17.500 8 17.500 13 14 12.500 8 12 3 9.500 0 9.500-4 9.500-8 11-11 10-14.500 8-15.500 4-13 3-11z"/><rect x="-1.700" y="-54" width="3.400" height="44"/><path d="M-2-54l-1.500-7c0-2 1.500-3 3-2.500l3 1.200.5 4-1 4.300z"/><circle cx="-4.500" cy="-57" r="1.500"/><circle cx="-4.500" cy="-61.500" r="1.500"/><circle cx="4.500" cy="-55.500" r="1.500"/><circle cx="4.800" cy="-60" r="1.500"/><rect x="-4.500" y="0" width="4" height="3" fill="#585858"/><rect x="0.500" y="1.500" width="4" height="3" fill="#585858"/><rect x="-4" y="10" width="8" height="2" fill="#585858"/></g></svg><div style="top:1382.0px;height:34px;line-height:34px;font-size:26.8px;color:#fff;white-space:nowrap;letter-spacing:-0.08px;left:138.5px;">Simple Foundation</div><div style="left:140px;top:1426.5px;width:82px;height:31px;background:#6b6b6b;border-radius:7px;box-shadow:0 1px 1.5px rgba(0,0,0,.55), inset 0 1px 0 rgba(255,255,255,.10);"></div><div style="left:180.5px;top:1426.5px;width:1.5px;height:31px;background:#4c4c4c;"></div><div style="top:1427.0px;height:31px;line-height:31px;font-size:24.5px;color:#fff;white-space:nowrap;left:-339.5px;width:1000px;text-align:center;">M</div><div style="top:1427.0px;height:31px;line-height:31px;font-size:24.5px;color:#fff;white-space:nowrap;left:-298.5px;width:1000px;text-align:center;">S</div><div style="left:233.5px;top:1426.5px;width:82px;height:31px;background:#6b6b6b;border-radius:7px;box-shadow:0 1px 1.5px rgba(0,0,0,.55), inset 0 1px 0 rgba(255,255,255,.10);"></div><div style="left:274px;top:1426.5px;width:1.5px;height:31px;background:#4c4c4c;"></div><div style="top:1427.0px;height:31px;line-height:31px;font-size:24.5px;color:#fff;white-space:nowrap;left:-205px;width:1000px;text-align:center;">I</div><div style="top:1427.0px;height:31px;line-height:31px;font-size:24.5px;color:#fff;white-space:nowrap;left:-246px;width:1000px;text-align:center;">R</div><div style="left:328px;top:1424px;width:230px;height:36px;background:#383838;border-radius:18px;"></div><div style="left:395.6px;top:1426px;width:32px;height:32px;background:#8b8b8b;border-radius:16px;"></div><svg style="left:567px;top:1411px;" width="60" height="60" viewBox="0 0 60 60"><path d="M17.6 47.7A21.6 21.6 0 1 1 42.4 47.7" fill="none" stroke="#3a3a3a" stroke-width="7.8"/><path d="M30.0 11.8L30.0 5.0" stroke="#4fd667" stroke-width="2"/><circle cx="30" cy="30" r="17.2" fill="#8b8b8b"/><path d="M30.0 14.8L30.0 19.8" stroke="#111" stroke-width="2.400"/></svg><div style="left:0px;top:1496px;width:36px;height:146.5px;background:#c80fa6;"></div><div style="left:36px;top:1496px;width:2px;height:146.5px;background:#454545;"></div><div style="left:0px;top:1642.5px;width:644px;height:1.8px;background:#454545;"></div><div style="top:1552.0px;height:35px;line-height:35px;font-size:27px;color:#fff;white-space:nowrap;letter-spacing:-0.5px;left:-482px;width:1000px;text-align:center;">26</div><svg style="left:65.0px;top:1540.5px;" width="50" height="58" viewBox="0 0 50 58"><g fill="#ff4fd8"><path d="M0.500 23.500L42 0l1.500 2.500L2 26z"/><path d="M1 27h47v13H1z"/><rect x="16" y="21.500" width="18" height="6" rx="2"/><rect x="2.500" y="40" width="3" height="15"/><rect x="43.500" y="40" width="3" height="15"/><rect x="23" y="40" width="3" height="15"/><rect x="1.500" y="54" width="5" height="2.500" rx="1"/><rect x="42.500" y="54" width="5" height="2.500" rx="1"/><rect x="20.500" y="54" width="8" height="2.500" rx="1"/></g><rect x="4" y="34" width="41" height="2" fill="#585858"/></svg><div style="top:1530.0px;height:34px;line-height:34px;font-size:26.8px;color:#fff;white-space:nowrap;letter-spacing:-0.08px;left:138.5px;">Piano</div><div style="left:140px;top:1574.5px;width:82px;height:31px;background:#6b6b6b;border-radius:7px;box-shadow:0 1px 1.5px rgba(0,0,0,.55), inset 0 1px 0 rgba(255,255,255,.10);"></div><div style="left:180.5px;top:1574.5px;width:1.5px;height:31px;background:#4c4c4c;"></div><div style="top:1575.0px;height:31px;line-height:31px;font-size:24.5px;color:#fff;white-space:nowrap;left:-339.5px;width:1000px;text-align:center;">M</div><div style="top:1575.0px;height:31px;line-height:31px;font-size:24.5px;color:#fff;white-space:nowrap;left:-298.5px;width:1000px;text-align:center;">S</div><div style="left:233.5px;top:1574.5px;width:41px;height:31px;background:#6b6b6b;border-radius:7px;box-shadow:0 1px 1.5px rgba(0,0,0,.55), inset 0 1px 0 rgba(255,255,255,.10);"></div><div style="top:1575.0px;height:31px;line-height:31px;font-size:24.5px;color:#fff;white-space:nowrap;left:-246px;width:1000px;text-align:center;">R</div><div style="left:328px;top:1572px;width:230px;height:36px;background:#383838;border-radius:18px;"></div><div style="left:393.9px;top:1574px;width:32px;height:32px;background:#8b8b8b;border-radius:16px;"></div><svg style="left:567px;top:1559px;" width="60" height="60" viewBox="0 0 60 60"><path d="M17.6 47.7A21.6 21.6 0 1 1 42.4 47.7" fill="none" stroke="#3a3a3a" stroke-width="7.8"/><path d="M19.2 48.7A21.6 21.6 0 0 1 30.0 8.4" fill="none" stroke="#4fd667" stroke-width="7.8"/><circle cx="30" cy="30" r="17.2" fill="#8b8b8b"/><path d="M22.4 43.2L24.9 38.8" stroke="#111" stroke-width="2.400"/></svg><div style="left:0px;top:1644px;width:36px;height:146.5px;background:#c80fa6;"></div><div style="left:36px;top:1644px;width:2px;height:146.5px;background:#454545;"></div><div style="left:0px;top:1790.5px;width:644px;height:1.8px;background:#454545;"></div><div style="top:1700.0px;height:35px;line-height:35px;font-size:27px;color:#fff;white-space:nowrap;letter-spacing:-0.5px;left:-482px;width:1000px;text-align:center;">27</div><svg style="left:65.0px;top:1688.5px;" width="50" height="58" viewBox="0 0 50 58"><g fill="#ff4fd8"><path d="M0.500 23.500L42 0l1.500 2.500L2 26z"/><path d="M1 27h47v13H1z"/><rect x="16" y="21.500" width="18" height="6" rx="2"/><rect x="2.500" y="40" width="3" height="15"/><rect x="43.500" y="40" width="3" height="15"/><rect x="23" y="40" width="3" height="15"/><rect x="1.500" y="54" width="5" height="2.500" rx="1"/><rect x="42.500" y="54" width="5" height="2.500" rx="1"/><rect x="20.500" y="54" width="8" height="2.500" rx="1"/></g><rect x="4" y="34" width="41" height="2" fill="#585858"/></svg><div style="top:1678.0px;height:34px;line-height:34px;font-size:26.8px;color:#fff;white-space:nowrap;letter-spacing:-0.08px;left:138.5px;">Piano</div><div style="left:140px;top:1722.5px;width:82px;height:31px;background:#6b6b6b;border-radius:7px;box-shadow:0 1px 1.5px rgba(0,0,0,.55), inset 0 1px 0 rgba(255,255,255,.10);"></div><div style="left:180.5px;top:1722.5px;width:1.5px;height:31px;background:#4c4c4c;"></div><div style="top:1723.0px;height:31px;line-height:31px;font-size:24.5px;color:#fff;white-space:nowrap;left:-339.5px;width:1000px;text-align:center;">M</div><div style="top:1723.0px;height:31px;line-height:31px;font-size:24.5px;color:#fff;white-space:nowrap;left:-298.5px;width:1000px;text-align:center;">S</div><div style="left:233.5px;top:1722.5px;width:41px;height:31px;background:#6b6b6b;border-radius:7px;box-shadow:0 1px 1.5px rgba(0,0,0,.55), inset 0 1px 0 rgba(255,255,255,.10);"></div><div style="top:1723.0px;height:31px;line-height:31px;font-size:24.5px;color:#fff;white-space:nowrap;left:-246px;width:1000px;text-align:center;">R</div><div style="left:328px;top:1720px;width:230px;height:36px;background:#383838;border-radius:18px;"></div><div style="left:393.9px;top:1722px;width:32px;height:32px;background:#8b8b8b;border-radius:16px;"></div><svg style="left:567px;top:1707px;" width="60" height="60" viewBox="0 0 60 60"><path d="M17.6 47.7A21.6 21.6 0 1 1 42.4 47.7" fill="none" stroke="#3a3a3a" stroke-width="7.8"/><path d="M30.0 8.4A21.6 21.6 0 0 1 40.8 48.7" fill="none" stroke="#4fd667" stroke-width="7.8"/><circle cx="30" cy="30" r="17.2" fill="#8b8b8b"/><path d="M37.6 43.2L35.1 38.8" stroke="#111" stroke-width="2.400"/></svg><div style="left:663px;top:71.5px;width:2320px;height:37px;background:#323232;"></div><div style="left:663px;top:108.5px;width:2320px;height:38px;background:#343434;"></div><div style="left:663px;top:108px;width:2320px;height:1.5px;background:#252525;"></div><div style="left:742.3px;top:71.5px;width:239.33999999999992px;height:36.5px;background:#575757;"></div><svg style="left:663px;top:71px;" width="2312" height="75" viewBox="0 0 2312 75"><path d="M0.0 5V75M9.9 59V75M19.8 59V75M29.7 59V75M39.6 42V75M49.6 59V75M59.5 59V75M69.4 59V75M79.3 42V75M89.2 59V75M99.1 59V75M109.0 59V75M118.9 42V75M128.8 59V75M138.7 59V75M148.7 59V75M158.6 5V75M168.5 59V75M178.4 59V75M188.3 59V75M198.2 42V75M208.1 59V75M218.0 59V75M227.9 59V75M237.8 42V75M247.7 59V75M257.7 59V75M267.6 59V75M277.5 42V75M287.4 59V75M297.3 59V75M307.2 59V75M317.1 5V75M327.0 59V75M336.9 59V75M346.8 59V75M356.8 42V75M366.7 59V75M376.6 59V75M386.5 59V75M396.4 42V75M406.3 59V75M416.2 59V75M426.1 59V75M436.0 42V75M445.9 59V75M455.9 59V75M465.8 59V75M475.7 5V75M485.6 59V75M495.5 59V75M505.4 59V75M515.3 42V75M525.2 59V75M535.1 59V75M545.1 59V75M555.0 42V75M564.9 59V75M574.8 59V75M584.7 59V75M594.6 42V75M604.5 59V75M614.4 59V75M624.3 59V75M634.2 5V75M644.1 59V75M654.1 59V75M664.0 59V75M673.9 42V75M683.8 59V75M693.7 59V75M703.6 59V75M713.5 42V75M723.4 59V75M733.3 59V75M743.2 59V75M753.2 42V75M763.1 59V75M773.0 59V75M782.9 59V75M792.8 5V75M802.7 59V75M812.6 59V75M822.5 59V75M832.4 42V75M842.4 59V75M852.3 59V75M862.2 59V75M872.1 42V75M882.0 59V75M891.9 59V75M901.8 59V75M911.7 42V75M921.6 59V75M931.5 59V75M941.5 59V75M951.4 5V75M961.3 59V75M971.2 59V75M981.1 59V75M991.0 42V75M1000.9 59V75M1010.8 59V75M1020.7 59V75M1030.6 42V75M1040.6 59V75M1050.5 59V75M1060.4 59V75M1070.3 42V75M1080.2 59V75M1090.1 59V75M1100.0 59V75M1109.9 5V75M1119.8 59V75M1129.7 59V75M1139.7 59V75M1149.6 42V75M1159.5 59V75M1169.4 59V75M1179.3 59V75M1189.2 42V75M1199.1 59V75M1209.0 59V75M1218.9 59V75M1228.8 42V75M1238.8 59V75M1248.7 59V75M1258.6 59V75M1268.5 5V75M1278.4 59V75M1288.3 59V75M1298.2 59V75M1308.1 42V75M1318.0 59V75M1327.9 59V75M1337.8 59V75M1347.8 42V75M1357.7 59V75M1367.6 59V75M1377.5 59V75M1387.4 42V75M1397.3 59V75M1407.2 59V75M1417.1 59V75M1427.0 5V75M1437.0 59V75M1446.9 59V75M1456.8 59V75M1466.7 42V75M1476.6 59V75M1486.5 59V75M1496.4 59V75M1506.3 42V75M1516.2 59V75M1526.1 59V75M1536.0 59V75M1546.0 42V75M1555.9 59V75M1565.8 59V75M1575.7 59V75M1585.6 5V75M1595.5 59V75M1605.4 59V75M1615.3 59V75M1625.2 42V75M1635.1 59V75M1645.1 59V75M1655.0 59V75M1664.9 42V75M1674.8 59V75M1684.7 59V75M1694.6 59V75M1704.5 42V75M1714.4 59V75M1724.3 59V75M1734.2 59V75M1744.2 5V75M1754.1 59V75M1764.0 59V75M1773.9 59V75M1783.8 42V75M1793.7 59V75M1803.6 59V75M1813.5 59V75M1823.4 42V75M1833.4 59V75M1843.3 59V75M1853.2 59V75M1863.1 42V75M1873.0 59V75M1882.9 59V75M1892.8 59V75M1902.7 5V75M1912.6 59V75M1922.5 59V75M1932.5 59V75M1942.4 42V75M1952.3 59V75M1962.2 59V75M1972.1 59V75M1982.0 42V75M1991.9 59V75M2001.8 59V75M2011.7 59V75M2021.6 42V75M2031.6 59V75M2041.5 59V75M2051.4 59V75M2061.3 5V75M2071.2 59V75M2081.1 59V75M2091.0 59V75M2100.9 42V75M2110.8 59V75M2120.7 59V75M2130.7 59V75M2140.6 42V75M2150.5 59V75M2160.4 59V75M2170.3 59V75M2180.2 42V75M2190.1 59V75M2200.0 59V75M2209.9 59V75M2219.8 5V75M2229.8 59V75M2239.7 59V75M2249.6 59V75M2259.5 42V75M2269.4 59V75M2279.3 59V75M2289.2 59V75M2299.1 42V75M2309.0 59V75M2318.9 59V75M2328.8 59V75" stroke="#8a8a8a" stroke-width="1.500" fill="none"/></svg><div style="top:70.0px;height:33px;line-height:33px;font-size:25.5px;color:#dcdcdc;white-space:nowrap;left:670.5px;">1</div><div style="top:70.0px;height:33px;line-height:33px;font-size:25.5px;color:#dcdcdc;white-space:nowrap;left:829.1px;">5</div><div style="top:70.0px;height:33px;line-height:33px;font-size:25.5px;color:#dcdcdc;white-space:nowrap;left:987.6px;">9</div><div style="top:70.0px;height:33px;line-height:33px;font-size:25.5px;color:#dcdcdc;white-space:nowrap;left:1146.2px;">13</div><div style="top:70.0px;height:33px;line-height:33px;font-size:25.5px;color:#dcdcdc;white-space:nowrap;left:1304.7px;">17</div><div style="top:70.0px;height:33px;line-height:33px;font-size:25.5px;color:#dcdcdc;white-space:nowrap;left:1463.3px;">21</div><div style="top:70.0px;height:33px;line-height:33px;font-size:25.5px;color:#dcdcdc;white-space:nowrap;left:1621.9px;">25</div><div style="top:70.0px;height:33px;line-height:33px;font-size:25.5px;color:#dcdcdc;white-space:nowrap;left:1780.4px;">29</div><div style="top:70.0px;height:33px;line-height:33px;font-size:25.5px;color:#dcdcdc;white-space:nowrap;left:1939.0px;">33</div><div style="top:70.0px;height:33px;line-height:33px;font-size:25.5px;color:#dcdcdc;white-space:nowrap;left:2097.5px;">37</div><div style="top:70.0px;height:33px;line-height:33px;font-size:25.5px;color:#dcdcdc;white-space:nowrap;left:2256.1px;">41</div><div style="top:70.0px;height:33px;line-height:33px;font-size:25.5px;color:#dcdcdc;white-space:nowrap;left:2414.7px;">45</div><div style="top:70.0px;height:33px;line-height:33px;font-size:25.5px;color:#dcdcdc;white-space:nowrap;left:2573.2px;">49</div><div style="top:70.0px;height:33px;line-height:33px;font-size:25.5px;color:#dcdcdc;white-space:nowrap;left:2731.8px;">53</div><div style="top:70.0px;height:33px;line-height:33px;font-size:25.5px;color:#dcdcdc;white-space:nowrap;left:2890.3px;">57</div><div style="left:662px;top:71.5px;width:1.5px;height:75px;background:repeating-linear-gradient(#111 0 2px,#888 2px 4px);"></div><div style="top:114.0px;height:29px;line-height:29px;font-size:22.5px;color:#626262;white-space:nowrap;left:989px;">B<span style="font-family:IPAGothic;font-size:16px;margin:0 -3.500px 0 -4.500px;position:relative;top:-3px;-webkit-text-stroke:.7px">♭</span>m</div><div style="left:663px;top:109px;width:319px;height:37px;background:rgba(88,88,88,.82);border-radius:8px;border:2px solid #050505;box-sizing:border-box;overflow:hidden;"><div style="top:3.0px;height:29px;line-height:29px;font-size:23px;color:#c9c9c9;white-space:nowrap;left:7.5px;-webkit-text-stroke:.55px;">D<span style="font-family:IPAGothic;font-size:16px;margin:0 -3.500px 0 -4.500px;position:relative;top:-3px;-webkit-text-stroke:.7px">♭</span></div><div style="top:3.0px;height:29px;line-height:29px;font-size:23px;color:#c9c9c9;white-space:nowrap;left:166px;-webkit-text-stroke:.55px;">D<span style="font-family:IPAGothic;font-size:16px;margin:0 -3.500px 0 -4.500px;position:relative;top:-3px;-webkit-text-stroke:.7px">♭</span></div><div style="top:3.0px;height:29px;line-height:29px;font-size:23px;color:#c9c9c9;white-space:nowrap;left:285.5px;-webkit-text-stroke:.55px;">B<span style="font-family:IPAGothic;font-size:16px;margin:0 -3.500px 0 -4.500px;position:relative;top:-3px;-webkit-text-stroke:.7px">♭</span>m</div><div style="top:3.0px;height:29px;line-height:29px;font-size:23px;color:#c9c9c9;white-space:nowrap;left:47.6400000000001px;-webkit-text-stroke:.55px;">...</div><div style="top:3.0px;height:29px;line-height:29px;font-size:23px;color:#c9c9c9;white-space:nowrap;left:87.27999999999997px;-webkit-text-stroke:.55px;">...</div><div style="top:3.0px;height:29px;line-height:29px;font-size:23px;color:#c9c9c9;white-space:nowrap;left:126.92000000000007px;-webkit-text-stroke:.55px;">...</div><div style="top:3.0px;height:29px;line-height:29px;font-size:23px;color:#c9c9c9;white-space:nowrap;left:206.20000000000005px;-webkit-text-stroke:.55px;">...</div><div style="top:3.0px;height:29px;line-height:29px;font-size:23px;color:#c9c9c9;white-space:nowrap;left:245.83999999999992px;-webkit-text-stroke:.55px;">...</div><div style="left:36.6px;top:2px;width:1.6px;height:23px;background:#9a9a9a;"></div><div style="left:76.3px;top:2px;width:1.6px;height:23px;background:#9a9a9a;"></div><div style="left:115.9px;top:2px;width:1.6px;height:23px;background:#9a9a9a;"></div><div style="left:155.6px;top:2px;width:1.6px;height:23px;background:#9a9a9a;"></div><div style="left:195.2px;top:2px;width:1.6px;height:23px;background:#9a9a9a;"></div><div style="left:234.8px;top:2px;width:1.6px;height:23px;background:#9a9a9a;"></div><div style="left:274.5px;top:2px;width:1.6px;height:23px;background:#9a9a9a;"></div></div><div style="left:663px;top:146px;width:2320px;height:1645px;background:#2e2e2e;"></div><div style="left:663px;top:1791px;width:2320px;height:90px;background:#2c2c2c;"></div><div style="left:663px;top:144px;width:2329px;height:15.8px;background:#1f7d7c;border-radius:0 0 0 8px;box-shadow:0 0 0 1.500px #050505;"></div><div style="left:663px;top:606px;width:78.27999999999997px;height:148px;background:#2d2d2d;"></div><div style="left:702px;top:606px;width:1.5px;height:148px;background:#3d3d3d;"></div><div style="left:662.3px;top:606px;width:1.5px;height:148px;background:#3d3d3d;"></div><div style="left:741.6px;top:606px;width:1.5px;height:148px;background:#3d3d3d;"></div><div style="left:663px;top:166.2px;width:2329px;height:141.4px;background:#1f7d7c;border-radius:8px 0 0 8px;box-shadow:0 0 0 1.500px #050505;"></div><div style="left:664px;top:254px;width:2308px;height:2px;background:#8fd0cd;"></div><svg style="left:0px;top:164px;" width="2973" height="148" viewBox="0 164 2973 148"><path d="M1013 255V249h14V245h6V249h2V253h12V256h-6V257h-4V256h-2V257h-2V259h-6V257h-14zM1091 255V247h2V249h14V245h6V249h2V253h10V256h-6V257h-2V256h-2V257h-2V259h-6V257h-16zM1171 255V249h12V245h6V249h2V253h2V251h2V253h6V256h-6V257h-2V256h-2V257h-2V259h-6V257h-12zM1249 255V249h14V245h6V249h2V253h10V256h-6V257h-2V256h-2V257h-2V259h-6V257h-14zM1329 255V249h14V245h6V249h2V253h10V256h-4V257h-2V256h-4V257h-2V259h-6V257h-14zM1407 255V251h4V249h10V245h6V249h2V253h12V256h-8V257h-2V256h-2V257h-2V259h-6V257h-14z" fill="#8fd0cd"/></svg><div class="rl" style="color:#d8f2f0;left:673.5px;top:169.2px">morw harmonies pt 4_1<i class="mono"></i></div><div class="rl" style="color:#d8f2f0;left:2722px;top:169.2px">morw harmonies pt 4_1<i class="mono"></i></div><div style="left:663px;top:314.2px;width:2329px;height:141.4px;background:#1f7d7c;border-radius:8px 0 0 8px;box-shadow:0 0 0 1.500px #050505;"></div><div style="left:664px;top:402px;width:2308px;height:2px;background:#8fd0cd;"></div><svg style="left:0px;top:312px;" width="2973" height="148" viewBox="0 312 2973 148"><path d="M1959 403V397h2V395h4V397h6V399h4V397h2V399h2V397h2V399h2V397h8V399h4V395h2V397h2V395h4V393h2V395h8V397h2V399h4V401h2V405h-2V407h-6V409h-4V411h-2V409h-2V411h-6V409h-4V407h-4V409h-8V407h-2V409h-2V407h-10V409h-8V407h-2zM2123 403V399h4V397h2V399h4V401h8V399h16V397h4V399h2V397h2V399h8V401h2V405h-6V407h-4V409h-2V407h-12V405h-2V407h-4V405h-4V407h-2V405h-6V407h-2V405h-2V407h-6zM2201 403V399h6V401h2V399h2V401h16V399h2V401h2V399h2V401h2V399h12V401h6V405h-8V407h-8V405h-30V407h-4V405h-2zM2283 403V401h2V399h8V401h8V399h4V401h2V399h2V401h2V399h6V397h2V399h12V401h4V404h-2V405h-6V407h-12V405h-8V407h-2V405h-18V407h-2V405h-2zM2361 403V401h2V399h6V401h10V399h2V401h4V399h2V401h4V399h16V401h4V405h-6V407h-4V405h-2V407h-10V405h-2V407h-4V405h-16V407h-4V405h-2zM2439 403V401h2V399h4V401h14V399h4V401h2V399h6V397h6V395h2V399h4V407h-4V409h-2V411h-2V409h-2V407h-4V405h-26V407h-2V405h-2zM2533 403V401h2V399h2V401h16V399h2V401h2V399h2V401h4V405h-6V407h-2V405h-18V407h-2V405h-2zM2609 403V401h2V399h2V401h16V399h8V401h4V405h-6V407h-2V405h-24zM2679 403V401h2V399h6V401h18V399h10V401h2V399h2V401h4V405h-6V407h-4V405h-2V407h-2V405h-24V407h-2V405h-4zM2759 403V399h4V397h2V399h8V401h2V399h18V397h6V399h4V401h4V405h-6V407h-2V409h-2V407h-18V405h-12V407h-4V409h-2V407h-2zM2835 403V399h10V401h12V399h18V401h4V405h-4V407h-10V405h-2V407h-2V405h-2V407h-2V405h-14V407h-2V405h-2V407h-4zM2915 403V401h2V399h4V401h18V399h14V401h6V405h-8V407h-4V405h-28V407h-2V405h-2z" fill="#8fd0cd"/></svg><div class="rl" style="color:#d8f2f0;left:673.5px;top:317.2px">oooo harmnoies 3_1<i class="mono"></i></div><div class="rl" style="color:#d8f2f0;left:2722px;top:317.2px">oooo harmnoies 3_1<i class="mono"></i></div><div style="left:663px;top:462.2px;width:2329px;height:141.4px;background:#1f7d7c;border-radius:8px 0 0 8px;box-shadow:0 0 0 1.500px #050505;"></div><div style="left:664px;top:550px;width:2308px;height:2px;background:#8fd0cd;"></div><svg style="left:0px;top:460px;" width="2973" height="148" viewBox="0 460 2973 148"><path d="M1327 551V535h2V539h2V537h2V531h4V537h2V535h2V531h4V537h4V535h2V531h2V533h2V535h2V539h4V535h2V537h2V541h2V539h2V543h2V541h2V539h2V543h4V545h2V543h2V545h2V543h2V545h4V543h2V545h4V547h6V549h4V553h-8V555h-6V557h-6V555h-2V557h-4V559h-6V561h-2V557h-4V563h-2V559h-4V561h-2V563h-8V567h-4V565h-4V569h-2V567h-2V565h-4V567h-2V563h-4V567h-2V563h-2zM1963 551V547h2V543h8V545h2V543h2V545h6V543h2V545h6V547h2V545h2V547h8V549h2V547h4V549h14V553h-20V555h-2V553h-2V555h-8V557h-6V559h-2V557h-6V559h-2V557h-2V559h-8V555h-2zM2123 551V543h4V541h14V539h2V537h2V539h2V535h2V541h2V537h2V539h4V541h2V543h4V545h4V547h4V545h2V547h8V549h2V547h4V549h2V547h2V549h4V553h-10V555h-8V553h-2V555h-4V557h-4V555h-2V557h-6V559h-2V561h-2V563h-6V559h-2V561h-2V559h-2V561h-6V559h-4V563h-2V557h-2V559h-4V557h-2zM2201 551V541h4V543h2V541h4V543h2V541h2V543h2V541h2V539h2V541h2V537h2V539h2V537h2V533h2V537h2V535h2V537h2V535h4V539h2V535h2V539h2V541h6V543h4V545h2V543h4V541h2V545h2V543h2V545h4V547h2V549h2V553h-2V555h-2V557h-8V559h-2V557h-2V559h-4V557h-2V559h-6V563h-2V561h-4V559h-2V565h-2V567h-2V563h-2V561h-2V565h-2V561h-2V563h-6V561h-6V559h-4V561h-6V559h-2V561h-4zM2283 551V535h2V541h2V539h2V541h2V539h2V543h2V541h2V543h2V539h2V541h4V539h2V537h2V535h2V537h2V535h2V533h2V537h2V535h4V537h2V539h2V541h2V543h4V541h2V543h2V545h2V547h6V549h10V553h-12V555h-4V557h-6V559h-2V561h-4V565h-2V561h-2V563h-8V565h-4V563h-2V561h-2V563h-2V565h-2V561h-4V559h-2V561h-2V559h-2V557h-2V563h-2V559h-2V561h-2V563h-2zM2361 551V543h4V541h2V543h2V537h2V541h2V537h2V541h2V537h6V535h2V533h2V539h4V541h2V539h2V541h2V539h2V543h2V545h10V547h10V549h2V547h2V549h2V547h2V549h6V553h-8V555h-16V557h-2V555h-2V557h-6V559h-4V561h-4V563h-2V561h-6V565h-2V561h-2V565h-4V559h-2V563h-2V557h-2V561h-2V559h-6V557h-2zM2439 551V535h2V539h2V537h2V539h4V543h2V539h2V541h4V543h2V541h2V537h10V539h4V537h2V539h4V541h2V539h2V541h6V543h2V545h2V539h2V545h2V543h8V547h6V549h2V553h-2V555h-6V557h-6V559h-6V557h-2V559h-2V561h-2V563h-2V561h-2V559h-6V561h-10V565h-2V561h-2V565h-2V561h-4V557h-2V561h-4V559h-2V563h-2V559h-2V565h-2V561h-4V559h-2zM2519 551V539h2V533h2V535h4V537h2V535h2V541h4V539h2V541h2V539h2V535h2V539h2V541h2V539h4V541h2V539h2V541h2V543h2V541h4V543h2V541h4V543h8V545h2V547h6V549h6V552h-2V553h-6V555h-4V557h-4V555h-2V557h-2V559h-2V557h-2V559h-10V561h-2V559h-2V561h-2V563h-4V561h-4V563h-2V561h-2V563h-4V561h-2V563h-8V561h-2V567h-2V565h-2zM2597 551V541h8V535h2V533h2V535h2V539h2V531h2V537h2V533h2V537h2V533h2V531h4V535h2V537h2V541h2V539h2V541h4V539h2V541h2V543h4V545h4V547h2V545h2V547h2V545h2V547h6V549h8V553h-6V555h-6V553h-2V555h-6V557h-2V555h-4V557h-6V561h-2V559h-2V563h-2V561h-2V567h-2V565h-4V567h-2V569h-2V565h-2V571h-2V565h-6V567h-2V565h-2V561h-2V563h-2V559h-2V561h-2V563h-4zM2679 551V537h2V531h2V533h2V531h2V533h4V537h2V535h2V533h4V535h8V537h6V539h2V543h18V541h4V539h2V537h2V539h2V543h4V541h2V545h2V547h2V549h2V553h-2V555h-2V557h-8V559h-6V557h-2V559h-6V557h-4V559h-10V563h-2V565h-12V567h-2V565h-4V563h-4V569h-2V565h-2V563h-2V565h-6zM2757 551V541h2V537h2V539h2V537h6V535h4V533h4V539h4V541h4V539h2V541h2V539h4V543h2V541h2V545h2V543h6V545h2V543h2V547h2V545h2V543h2V547h10V549h6V553h-8V555h-10V557h-2V555h-8V557h-8V561h-6V563h-2V561h-2V563h-2V561h-2V563h-2V561h-4V563h-4V565h-2V563h-2V565h-2V561h-4V559h-2V561h-2zM2835 551V543h10V541h2V543h4V541h10V539h2V541h2V539h2V537h4V541h2V543h4V541h2V543h4V547h2V545h2V547h6V549h2V547h2V549h10V553h-14V555h-2V553h-4V557h-6V559h-2V557h-2V559h-2V561h-2V559h-6V561h-8V559h-4V561h-2V559h-4V557h-6V559h-2V557h-4V559h-2zM2915 551V537h2V541h2V537h2V543h8V539h6V533h2V537h2V533h2V535h2V537h2V535h2V537h2V539h2V541h2V543h2V545h6V543h2V541h2V545h2V543h2V547h2V555h-2V559h-2V557h-2V559h-2V557h-4V555h-2V557h-4V559h-2V561h-6V565h-2V567h-4V565h-2V561h-2V565h-2V559h-2V561h-2V557h-2V561h-4V559h-6V561h-2z" fill="#8fd0cd"/></svg><div class="rl" style="color:#d8f2f0;left:673.5px;top:465.20000000000005px">oooo harmonies 1_1<i class="mono"></i></div><div class="rl" style="color:#d8f2f0;left:2722px;top:465.20000000000005px">oooo harmonies 1_1<i class="mono"></i></div><div style="left:743.3px;top:610.2px;width:2248.7200000000003px;height:141.4px;background:#c9a612;border-radius:8px 0 0 8px;box-shadow:0 0 0 1.500px #050505;"></div><svg style="left:0px;top:608px;" width="2973" height="148" viewBox="0 608 2973 148"><path d="M743 674.0L744 670.4L745 669.5L746 670.4L747 670.4L748 669.6L749 666.7L750 659.4L751 661.4L752 664.6L753 667.0L754 668.4L755 669.3L756 669.8L757 670.6L758 669.9L759 665.8L760 667.0L761 668.8L762 670.1L763 670.8L764 669.8L765 669.5L766 670.9L767 670.7L768 670.1L769 667.2L770 660.5L771 662.4L772 665.4L773 667.5L774 668.9L775 669.7L776 670.1L777 670.9L778 670.1L779 671.0L780 670.8L781 669.5L782 670.0L783 670.7L784 669.9L785 670.1L786 671.4L787 670.8L788 670.0L789 667.8L790 661.6L791 663.3L792 666.1L793 668.0L794 669.3L795 670.0L796 670.4L797 670.5L798 669.7L799 665.5L800 666.7L801 668.6L802 669.9L803 670.8L804 670.2L805 670.6L806 671.3L807 670.1L808 667.6L809 661.3L810 663.1L811 665.9L812 667.9L813 669.2L814 669.9L815 670.3L816 671.0L817 669.8L818 669.5L819 670.7L820 670.4L821 669.9L822 671.1L823 671.2L824 670.0L825 670.3L826 670.8L827 669.6L828 667.1L829 660.2L830 662.1L831 665.2L832 667.4L833 668.8L834 669.6L835 670.0L836 670.6L837 669.6L838 670.0L839 671.3L840 670.6L841 670.2L842 671.1L843 670.6L844 669.4L845 670.2L846 670.7L847 669.8L848 667.0L849 660.1L850 662.0L851 665.1L852 667.3L853 668.7L854 669.3L855 670.0L856 670.9L857 670.0L858 670.7L859 671.5L860 670.3L861 669.8L862 670.7L863 670.1L864 669.4L865 670.7L866 671.1L867 670.1L868 667.3L869 660.6L870 662.5L871 665.4L872 667.6L873 668.9L874 669.7L875 670.1L876 671.1L877 669.0L878 664.0L879 665.4L880 667.6L881 669.2L882 670.2L883 670.2L884 670.0L885 671.3L886 671.0L887 669.9L888 666.9L889 659.8L890 661.8L891 664.9L892 667.2L893 668.6L894 669.5L895 669.9L896 670.7L897 669.6L898 670.4L899 670.5L900 669.5L901 670.3L902 671.3L903 670.4L904 670.3L905 671.2L906 670.3L907 669.4L908 667.3L909 660.7L910 662.5L911 665.5L912 667.6L913 668.9L914 669.7L915 670.1L916 670.0L917 669.1L918 664.2L919 665.5L920 667.7L921 669.3L922 670.3L923 670.0L924 670.0L925 670.8L926 669.8L927 667.6L928 661.1L929 662.9L930 665.8L931 667.8L932 669.1L933 669.7L934 669.9L935 670.7L936 669.9L937 669.9L938 671.3L939 670.9L940 670.0L941 670.8L942 670.8L943 669.4L944 669.9L945 670.8L946 670.1L947 666.8L948 659.5L949 661.6L950 664.7L951 667.1L952 668.5L953 669.3L954 669.8L955 671.1L956 670.2L957 670.4L958 671.4L959 670.5L960 669.6L961 670.5L962 670.3L963 669.5L964 670.5L965 671.3L966 670.3L967 667.4L968 660.9L969 662.7L970 665.6L971 667.7L972 669.0L973 669.7L974 670.2L975 671.4L976 670.1L977 670.3L978 670.9L979 669.8L980 669.5L981 670.8L982 670.6L983 670.0L984 671.1L985 671.2L986 669.9L987 667.6L988 661.2L989 662.9L990 665.8L991 667.8L992 669.1L993 669.9L994 670.3L995 670.9L996 669.4L997 664.7L998 666.0L999 668.1L1000 669.5L1001 670.5L1002 670.7L1003 670.1L1004 671.0L1005 670.5L1006 669.3L1007 666.9L1008 659.8L1009 661.8L1010 664.9L1011 667.2L1012 668.6L1013 669.4L1014 669.9L1015 670.2L1016 669.3L1017 670.4L1018 671.0L1019 670.1L1020 670.6L1021 671.4L1022 670.2L1023 669.7L1024 670.6L1025 670.1L1026 667.3L1027 660.6L1028 662.5L1029 665.4L1030 667.6L1031 668.9L1032 669.7L1033 669.6L1034 670.7L1035 670.2L1036 669.8L1037 671.1L1038 671.2L1039 670.0L1040 670.5L1041 670.8L1042 669.6L1043 669.7L1044 670.9L1045 670.4L1046 667.3L1047 660.7L1048 662.6L1049 665.5L1050 667.6L1051 668.9L1052 669.5L1053 670.0L1054 671.2L1055 670.5L1056 670.2L1057 671.3L1058 670.7L1059 669.5L1060 670.3L1061 670.6L1062 669.6L1063 670.3L1064 671.4L1065 670.5L1066 666.7L1067 659.3L1068 661.4L1069 664.6L1070 667.0L1071 668.4L1072 669.3L1073 669.7L1074 671.5L1075 670.3L1076 670.0L1077 670.8L1078 670.0L1079 669.4L1080 670.7L1081 670.9L1082 670.1L1083 670.8L1084 671.3L1085 670.0L1086 667.4L1087 660.8L1088 662.7L1089 665.6L1090 667.7L1091 669.0L1092 669.8L1093 670.2L1094 671.0L1095 669.6L1096 669.8L1097 670.7L1098 670.0L1099 670.0L1100 671.3L1101 671.0L1102 670.0L1103 670.7L1104 670.7L1105 669.4L1106 666.8L1107 659.6L1108 661.6L1109 664.8L1110 667.1L1111 668.5L1112 669.4L1113 669.8L1114 670.5L1115 669.4L1116 670.2L1117 671.2L1118 670.4L1119 670.4L1120 671.3L1121 670.4L1122 669.5L1123 670.4L1124 670.4L1125 669.6L1126 666.3L1127 658.5L1128 660.7L1129 664.1L1130 666.6L1131 668.1L1132 669.1L1133 669.5L1134 670.6L1135 669.9L1136 670.9L1137 671.4L1138 670.1L1139 670.2L1140 670.8L1141 669.8L1142 669.5L1143 670.9L1144 670.7L1145 667.7L1146 661.4L1147 663.2L1148 666.0L1149 668.0L1150 669.2L1151 669.8L1152 669.8L1153 671.2L1154 670.8L1155 670.1L1156 671.0L1157 670.8L1158 669.5L1159 670.0L1160 670.7L1161 669.9L1162 670.2L1163 671.4L1164 670.8L1165 667.2L1166 660.3L1167 662.3L1168 665.3L1169 667.4L1170 668.8L1171 669.6L1172 670.0L1173 671.5L1174 670.5L1175 669.7L1176 670.6L1177 670.3L1178 669.4L1179 670.5L1180 671.2L1181 670.2L1182 670.6L1183 671.3L1184 670.1L1185 667.5L1186 660.9L1187 662.8L1188 665.6L1189 667.7L1190 669.0L1191 669.8L1192 670.2L1193 671.0L1194 669.8L1195 669.5L1196 670.7L1197 670.4L1198 669.9L1199 671.1L1200 671.2L1201 669.9L1202 670.3L1203 670.8L1204 669.6L1205 667.4L1206 660.8L1207 662.7L1208 665.6L1209 667.7L1210 669.0L1211 669.6L1212 670.2L1213 670.6L1214 669.6L1215 670.0L1216 671.3L1217 670.6L1218 670.2L1219 671.1L1220 670.6L1221 669.4L1222 670.2L1223 670.7L1224 669.8L1225 667.2L1226 660.4L1227 662.3L1228 665.3L1229 667.5L1230 668.8L1231 669.3L1232 670.1L1233 670.9L1234 669.7L1235 665.3L1236 666.5L1237 668.5L1238 669.8L1239 670.7L1240 670.1L1241 669.4L1242 670.7L1243 671.1L1244 667.4L1245 660.9L1246 662.7L1247 665.6L1248 667.7L1249 669.0L1250 669.8L1251 669.7L1252 671.1L1253 671.1L1254 670.1L1255 670.7L1256 670.9L1257 669.6L1258 669.7L1259 670.8L1260 670.2L1261 670.0L1262 671.3L1263 671.0L1264 667.6L1265 661.2L1266 663.0L1267 665.8L1268 667.9L1269 669.1L1270 669.9L1271 670.3L1272 671.4L1273 669.9L1274 665.9L1275 667.0L1276 668.8L1277 669.5L1278 670.3L1279 671.3L1280 670.4L1281 670.3L1282 671.2L1283 670.3L1284 666.6L1285 659.3L1286 661.4L1287 664.6L1288 666.9L1289 668.4L1290 669.3L1291 669.7L1292 671.0L1293 670.0L1294 669.4L1295 670.6L1296 670.7L1297 670.0L1298 670.9L1299 671.4L1300 670.0L1301 670.0L1302 670.8L1303 669.8L1304 667.1L1305 660.3L1306 662.2L1307 665.2L1308 667.4L1309 668.8L1310 669.6L1311 669.9L1312 670.7L1313 669.9L1314 669.9L1315 671.3L1316 670.9L1317 670.0L1318 670.8L1319 670.7L1320 669.4L1321 669.9L1322 670.8L1323 670.1L1324 667.0L1325 659.9L1326 661.9L1327 665.0L1328 667.2L1329 668.6L1330 669.3L1331 669.9L1332 671.1L1333 669.3L1334 664.7L1335 666.0L1336 668.0L1337 669.5L1338 670.5L1339 670.3L1340 669.5L1341 670.6L1342 671.3L1343 670.3L1344 667.0L1345 660.0L1346 662.0L1347 665.0L1348 667.3L1349 668.7L1350 669.5L1351 669.9L1352 671.3L1353 670.1L1354 670.3L1355 670.9L1356 669.8L1357 669.5L1358 670.8L1359 670.6L1360 670.0L1361 671.1L1362 671.2L1363 667.6L1364 661.2L1365 663.0L1366 665.8L1367 667.9L1368 669.1L1369 669.9L1370 670.1L1371 671.1L1372 670.9L1373 669.5L1374 670.1L1375 670.7L1376 669.7L1377 670.1L1378 671.4L1379 670.7L1380 670.1L1381 671.0L1382 670.5L1383 666.7L1384 659.4L1385 661.5L1386 664.7L1387 667.0L1388 668.5L1389 669.3L1390 669.8L1391 670.8L1392 670.2L1393 669.3L1394 670.4L1395 671.0L1396 670.1L1397 670.6L1398 671.4L1399 670.2L1400 669.7L1401 670.6L1402 670.1L1403 667.7L1404 661.5L1405 663.2L1406 666.0L1407 668.0L1408 669.2L1409 669.8L1410 669.6L1411 670.7L1412 670.2L1413 669.8L1414 671.1L1415 671.2L1416 670.0L1417 670.5L1418 670.8L1419 669.6L1420 669.7L1421 670.9L1422 670.4L1423 667.5L1424 661.0L1425 662.8L1426 665.7L1427 667.8L1428 669.1L1429 669.5L1430 670.0L1431 671.2L1432 669.4L1433 664.7L1434 666.0L1435 668.0L1436 669.5L1437 670.3L1438 670.6L1439 669.6L1440 670.4L1441 671.4L1442 670.5L1443 667.3L1444 660.7L1445 662.6L1446 665.5L1447 667.6L1448 668.9L1449 669.7L1450 670.1L1451 671.5L1452 670.3L1453 670.0L1454 670.8L1455 670.0L1456 669.4L1457 670.7L1458 670.9L1459 670.1L1460 670.9L1461 671.3L1462 669.9L1463 667.4L1464 660.7L1465 662.6L1466 665.5L1467 667.6L1468 669.0L1469 669.7L1470 670.1L1471 671.0L1472 669.6L1473 669.8L1474 670.7L1475 670.0L1476 670.0L1477 671.3L1478 671.0L1479 670.0L1480 670.7L1481 670.7L1482 667.8L1483 661.5L1484 663.3L1485 666.0L1486 668.0L1487 669.3L1488 670.0L1489 669.7L1490 670.5L1491 670.5L1492 669.4L1493 670.2L1494 671.2L1495 670.3L1496 670.4L1497 671.3L1498 670.4L1499 669.5L1500 670.5L1501 670.4L1502 666.9L1503 659.9L1504 661.9L1505 665.0L1506 667.2L1507 668.6L1508 669.5L1509 669.4L1510 670.6L1511 670.5L1512 669.9L1513 670.9L1514 671.4L1515 670.1L1516 670.2L1517 670.8L1518 669.8L1519 669.5L1520 670.9L1521 670.7L1522 667.6L1523 661.2L1524 663.0L1525 665.8L1526 667.9L1527 669.1L1528 669.7L1529 669.8L1530 671.2L1531 670.8L1532 670.1L1533 671.0L1534 670.8L1535 669.5L1536 670.0L1537 670.7L1538 669.9L1539 670.2L1540 671.4L1541 670.7L1542 667.0L1543 660.0L1544 662.0L1545 665.1L1546 667.3L1547 668.7L1548 669.5L1549 669.9L1550 671.5L1551 670.5L1552 669.8L1553 670.6L1554 670.3L1555 669.4L1556 670.5L1557 671.2L1558 670.2L1559 670.6L1560 671.3L1561 670.1L1562 667.0L1563 660.0L1564 662.0L1565 665.0L1566 667.3L1567 668.7L1568 669.5L1569 669.9L1570 671.0L1571 669.8L1572 669.5L1573 670.7L1574 670.4L1575 669.9L1576 671.2L1577 671.2L1578 669.9L1579 670.3L1580 670.8L1581 667.2L1582 660.3L1583 662.3L1584 665.3L1585 667.4L1586 668.8L1587 669.6L1588 669.6L1589 670.2L1590 670.6L1591 669.6L1592 670.0L1593 671.3L1594 670.6L1595 670.2L1596 671.1L1597 670.6L1598 669.4L1599 670.2L1600 670.7L1601 667.5L1602 661.0L1603 662.8L1604 665.7L1605 667.8L1606 669.1L1607 669.8L1608 669.3L1609 670.4L1610 670.8L1611 670.0L1612 670.7L1613 671.5L1614 670.2L1615 669.8L1616 670.7L1617 670.0L1618 669.4L1619 670.7L1620 671.0L1621 667.2L1622 660.4L1623 662.3L1624 665.3L1625 667.5L1626 668.8L1627 669.6L1628 669.7L1629 671.1L1630 669.7L1631 665.4L1632 666.6L1633 668.5L1634 669.6L1635 669.7L1636 670.8L1637 670.2L1638 670.0L1639 671.3L1640 671.0L1641 667.0L1642 659.9L1643 661.9L1644 665.0L1645 667.2L1646 668.7L1647 669.5L1648 669.9L1649 671.4L1650 670.7L1651 669.6L1652 670.4L1653 670.5L1654 669.5L1655 670.3L1656 671.3L1657 670.4L1658 670.3L1659 671.2L1660 670.3L1661 666.9L1662 659.8L1663 661.8L1664 664.9L1665 667.2L1666 668.6L1667 669.5L1668 669.9L1669 671.0L1670 670.0L1671 669.4L1672 670.6L1673 670.7L1674 670.0L1675 670.9L1676 671.4L1677 670.0L1678 670.0L1679 670.8L1680 669.8L1681 667.2L1682 660.3L1683 662.2L1684 665.3L1685 667.4L1686 668.8L1687 669.6L1688 669.9L1689 670.7L1690 669.9L1691 669.9L1692 671.3L1693 670.9L1694 670.0L1695 670.9L1696 670.7L1697 669.4L1698 669.9L1699 670.8L1700 666.9L1701 659.7L1702 661.7L1703 664.9L1704 667.1L1705 668.6L1706 669.4L1707 669.3L1708 670.2L1709 671.1L1710 670.2L1711 670.4L1712 671.4L1713 670.4L1714 669.6L1715 670.5L1716 670.3L1717 669.5L1718 670.6L1719 671.3L1720 667.0L1721 659.9L1722 661.9L1723 665.0L1724 667.2L1725 668.7L1726 669.5L1727 669.7L1728 670.9L1729 671.3L1730 670.1L1731 670.3L1732 670.9L1733 669.7L1734 669.5L1735 670.8L1736 670.6L1737 670.0L1738 671.1L1739 671.2L1740 667.6L1741 661.2L1742 663.0L1743 665.8L1744 667.9L1745 669.1L1746 669.9L1747 670.1L1748 671.1L1749 670.9L1750 669.5L1751 670.1L1752 670.7L1753 669.7L1754 670.1L1755 671.4L1756 670.7L1757 670.1L1758 671.0L1759 670.5L1760 667.5L1761 661.0L1762 662.8L1763 665.7L1764 667.8L1765 669.1L1766 669.8L1767 669.9L1768 670.8L1769 670.2L1770 669.3L1771 670.5L1772 671.0L1773 670.1L1774 670.7L1775 671.4L1776 670.2L1777 669.7L1778 670.6L1779 670.1L1780 667.6L1781 661.2L1782 663.0L1783 665.8L1784 667.9L1785 669.1L1786 669.8L1787 669.6L1788 670.7L1789 670.2L1790 669.8L1791 671.2L1792 671.2L1793 670.0L1794 670.5L1795 670.8L1796 669.5L1797 669.7L1798 670.9L1799 666.7L1800 659.4L1801 661.5L1802 664.7L1803 667.0L1804 668.5L1805 669.3L1806 669.5L1807 670.0L1808 671.2L1809 670.5L1810 670.2L1811 671.3L1812 670.6L1813 669.5L1814 670.3L1815 670.6L1816 669.6L1817 670.4L1818 671.4L1819 666.6L1820 659.2L1821 661.2L1822 664.5L1823 666.9L1824 668.4L1825 669.3L1826 669.7L1827 670.7L1828 671.5L1829 670.3L1830 670.0L1831 670.8L1832 670.0L1833 669.4L1834 670.7L1835 670.9L1836 670.1L1837 670.9L1838 671.3L1839 667.7L1840 661.5L1841 663.2L1842 666.0L1843 668.0L1844 669.2L1845 670.0L1846 670.1L1847 670.8L1848 670.0L1849 665.9L1850 667.1L1851 668.8L1852 670.0L1853 670.0L1854 671.3L1855 671.0L1856 670.0L1857 670.7L1858 670.7L1859 667.3L1860 660.6L1861 662.5L1862 665.4L1863 667.6L1864 668.9L1865 669.7L1866 669.7L1867 670.5L1868 669.6L1869 665.1L1870 666.4L1871 668.3L1872 669.7L1873 670.4L1874 671.2L1875 670.4L1876 669.5L1877 670.5L1878 670.4L1879 667.5L1880 660.9L1881 662.7L1882 665.6L1883 667.7L1884 669.0L1885 669.8L1886 669.4L1887 670.6L1888 670.5L1889 669.9L1890 670.9L1891 671.4L1892 670.1L1893 670.2L1894 670.8L1895 669.8L1896 669.5L1897 670.9L1898 670.7L1899 666.1L1900 658.2L1901 660.4L1902 663.9L1903 666.4L1904 668.0L1905 668.9L1906 669.4L1907 671.2L1908 670.8L1909 670.1L1910 671.0L1911 670.8L1912 669.5L1913 670.0L1914 670.7L1915 669.9L1916 670.2L1917 671.4L1918 667.2L1919 660.4L1920 662.3L1921 665.3L1922 667.5L1923 668.8L1924 669.7L1925 670.1L1926 670.5L1927 669.0L1928 664.0L1929 665.4L1930 667.6L1931 669.2L1932 669.4L1933 670.5L1934 671.1L1935 670.2L1936 670.6L1937 671.3L1938 667.2L1939 660.4L1940 662.3L1941 665.3L1942 667.5L1943 668.8L1944 669.7L1945 670.1L1946 670.5L1947 671.0L1948 669.8L1949 669.5L1950 670.7L1951 670.4L1952 669.9L1953 671.2L1954 671.2L1955 669.9L1956 670.3L1957 670.8L1958 667.2L1959 660.5L1960 662.4L1961 665.3L1962 667.5L1963 668.9L1964 669.7L1965 669.6L1966 670.2L1967 670.6L1968 669.6L1969 670.1L1970 671.3L1971 670.6L1972 670.2L1973 671.1L1974 670.6L1975 669.4L1976 670.2L1977 670.7L1978 667.2L1979 660.5L1980 662.4L1981 665.4L1982 667.5L1983 668.9L1984 669.7L1985 669.3L1986 670.4L1987 670.8L1988 670.0L1989 670.7L1990 671.5L1991 670.2L1992 669.9L1993 670.7L1994 670.0L1995 669.4L1996 670.8L1997 671.0L1998 667.6L1999 661.2L2000 663.0L2001 665.8L2002 667.8L2003 669.1L2004 669.9L2005 669.7L2006 671.1L2007 669.0L2008 664.0L2009 665.4L2010 667.6L2011 669.2L2012 669.7L2013 670.8L2014 670.2L2015 670.1L2016 671.3L2017 666.8L2018 659.5L2019 661.5L2020 664.7L2021 667.1L2022 668.5L2023 669.4L2024 669.8L2025 670.3L2026 671.4L2027 670.7L2028 669.6L2029 670.4L2030 670.5L2031 669.5L2032 670.3L2033 671.3L2034 670.4L2035 670.3L2036 671.2L2037 666.9L2038 659.8L2039 661.8L2040 664.9L2041 667.2L2042 668.6L2043 669.5L2044 669.9L2045 670.2L2046 671.0L2047 670.0L2048 669.4L2049 670.6L2050 670.7L2051 670.0L2052 670.9L2053 671.4L2054 670.0L2055 670.0L2056 670.8L2057 667.4L2058 660.7L2059 662.6L2060 665.5L2061 667.6L2062 668.9L2063 669.7L2064 669.7L2065 669.9L2066 670.7L2067 669.9L2068 669.9L2069 671.3L2070 670.9L2071 670.0L2072 670.9L2073 670.7L2074 669.4L2075 670.0L2076 670.8L2077 667.3L2078 660.5L2079 662.4L2080 665.4L2081 667.5L2082 668.9L2083 669.7L2084 669.3L2085 670.2L2086 671.1L2087 670.2L2088 670.5L2089 671.4L2090 670.4L2091 669.6L2092 670.5L2093 670.3L2094 669.5L2095 670.6L2096 671.3L2097 667.6L2098 661.1L2099 662.9L2100 665.8L2101 667.8L2102 669.1L2103 669.9L2104 669.7L2105 670.9L2106 671.3L2107 670.1L2108 670.3L2109 670.9L2110 669.7L2111 669.5L2112 670.8L2113 670.5L2114 670.0L2115 671.1L2116 671.2L2117 667.3L2118 660.7L2119 662.5L2120 665.5L2121 667.6L2122 668.9L2123 669.7L2124 670.1L2125 671.2L2126 670.9L2127 669.5L2128 670.1L2129 670.7L2130 669.7L2131 670.1L2132 671.4L2133 670.7L2134 670.1L2135 671.0L2136 666.8L2137 659.6L2138 661.6L2139 664.8L2140 667.1L2141 668.5L2142 669.4L2143 669.8L2144 669.9L2145 669.6L2146 665.2L2147 666.4L2148 668.4L2149 669.8L2150 670.1L2151 670.7L2152 671.4L2153 670.2L2154 669.7L2155 670.7L2156 667.4L2157 660.8L2158 662.6L2159 665.5L2160 667.6L2161 669.0L2162 669.8L2163 669.8L2164 669.6L2165 670.7L2166 670.2L2167 669.8L2168 671.2L2169 671.2L2170 670.0L2171 670.5L2172 670.8L2173 669.5L2174 669.7L2175 670.9L2176 667.4L2177 660.9L2178 662.7L2179 665.6L2180 667.7L2181 669.0L2182 669.8L2183 669.5L2184 670.0L2185 671.2L2186 670.5L2187 670.2L2188 671.3L2189 670.6L2190 669.5L2191 670.3L2192 670.6L2193 669.6L2194 670.4L2195 671.4L2196 666.9L2197 659.8L2198 661.8L2199 664.9L2200 667.2L2201 668.6L2202 669.5L2203 669.9L2204 670.7L2205 671.5L2206 670.3L2207 670.0L2208 670.8L2209 670.0L2210 669.4L2211 670.7L2212 670.9L2213 670.1L2214 670.9L2215 671.3L2216 667.0L2217 660.0L2218 662.0L2219 665.0L2220 667.3L2221 668.7L2222 669.5L2223 669.9L2224 670.9L2225 671.0L2226 669.6L2227 669.8L2228 670.7L2229 670.0L2230 670.0L2231 671.3L2232 671.0L2233 670.0L2234 670.7L2235 670.7L2236 667.3L2237 660.7L2238 662.5L2239 665.5L2240 667.6L2241 668.9L2242 669.7L2243 669.7L2244 670.5L2245 670.4L2246 669.4L2247 670.3L2248 671.2L2249 670.3L2250 670.4L2251 671.3L2252 670.3L2253 669.5L2254 670.5L2255 667.8L2256 661.7L2257 663.4L2258 666.1L2259 668.1L2260 669.3L2261 670.1L2262 670.0L2263 669.4L2264 670.0L2265 665.9L2266 667.0L2267 668.8L2268 670.1L2269 670.1L2270 670.2L2271 670.8L2272 669.8L2273 669.5L2274 670.9L2275 667.2L2276 660.4L2277 662.3L2278 665.3L2279 667.5L2280 668.8L2281 669.6L2282 669.7L2283 669.8L2284 671.2L2285 670.8L2286 670.1L2287 671.0L2288 670.8L2289 669.5L2290 670.0L2291 670.7L2292 669.9L2293 670.2L2294 671.4L2295 666.9L2296 659.8L2297 661.8L2298 664.9L2299 667.2L2300 668.6L2301 669.5L2302 669.9L2303 670.5L2304 671.5L2305 670.5L2306 669.8L2307 670.7L2308 670.2L2309 669.4L2310 670.5L2311 671.1L2312 670.2L2313 670.6L2314 671.3L2315 665.8L2316 657.6L2317 659.9L2318 663.5L2319 666.1L2320 667.8L2321 668.7L2322 669.2L2323 670.5L2324 671.0L2325 669.7L2326 669.5L2327 670.7L2328 670.4L2329 669.9L2330 671.2L2331 671.2L2332 669.9L2333 670.4L2334 670.7L2335 666.9L2336 659.7L2337 661.7L2338 664.9L2339 667.2L2340 668.6L2341 669.4L2342 669.6L2343 670.2L2344 670.6L2345 669.6L2346 670.1L2347 671.3L2348 670.6L2349 670.2L2350 671.1L2351 670.5L2352 669.4L2353 670.2L2354 667.1L2355 660.3L2356 662.2L2357 665.2L2358 667.4L2359 668.8L2360 669.6L2361 670.0L2362 669.3L2363 670.4L2364 670.8L2365 670.0L2366 670.7L2367 671.4L2368 670.2L2369 669.9L2370 670.7L2371 670.0L2372 669.4L2373 670.8L2374 667.1L2375 660.2L2376 662.2L2377 665.2L2378 667.4L2379 668.8L2380 669.6L2381 670.0L2382 669.7L2383 671.1L2384 671.1L2385 670.1L2386 670.7L2387 670.9L2388 669.5L2389 669.7L2390 670.8L2391 670.2L2392 670.1L2393 671.4L2394 667.3L2395 660.7L2396 662.5L2397 665.5L2398 667.6L2399 668.9L2400 669.7L2401 670.1L2402 670.3L2403 669.2L2404 664.3L2405 665.7L2406 667.8L2407 669.3L2408 669.5L2409 670.3L2410 671.2L2411 670.4L2412 670.3L2413 671.2L2414 667.0L2415 659.9L2416 661.9L2417 665.0L2418 667.2L2419 668.7L2420 669.5L2421 669.9L2422 670.2L2423 671.0L2424 670.0L2425 669.4L2426 670.6L2427 670.7L2428 670.0L2429 670.9L2430 671.3L2431 670.0L2432 670.0L2433 670.8L2434 667.2L2435 660.3L2436 662.2L2437 665.2L2438 667.4L2439 668.8L2440 669.6L2441 669.7L2442 669.9L2443 669.5L2444 664.9L2445 666.2L2446 668.2L2447 669.6L2448 670.1L2449 670.9L2450 670.7L2451 669.4L2452 670.0L2453 670.8L2454 667.7L2455 661.3L2456 663.1L2457 665.9L2458 667.9L2459 669.2L2460 669.9L2461 669.3L2462 670.2L2463 671.1L2464 670.2L2465 670.5L2466 671.4L2467 670.4L2468 669.6L2469 670.5L2470 670.3L2471 669.5L2472 670.6L2473 667.3L2474 660.6L2475 662.4L2476 665.4L2477 667.5L2478 668.9L2479 669.7L2480 670.1L2481 669.7L2482 671.0L2483 671.3L2484 670.1L2485 670.4L2486 670.9L2487 669.7L2488 669.5L2489 670.8L2490 670.5L2491 670.0L2492 671.2L2493 667.8L2494 661.5L2495 663.3L2496 666.0L2497 668.0L2498 669.3L2499 670.0L2500 670.4L2501 670.1L2502 671.2L2503 670.8L2504 669.5L2505 670.1L2506 670.7L2507 669.7L2508 670.1L2509 671.4L2510 670.7L2511 670.1L2512 671.0L2513 667.0L2514 660.0L2515 662.0L2516 665.0L2517 667.3L2518 668.7L2519 669.5L2520 669.9L2521 669.9L2522 670.8L2523 670.2L2524 669.3L2525 670.5L2526 671.0L2527 670.1L2528 670.7L2529 671.4L2530 670.1L2531 669.7L2532 670.7L2533 667.6L2534 661.3L2535 663.0L2536 665.8L2537 667.9L2538 669.2L2539 669.9L2540 669.8L2541 669.6L2542 670.7L2543 670.2L2544 669.8L2545 671.2L2546 671.2L2547 670.0L2548 670.5L2549 670.8L2550 669.5L2551 669.7L2552 670.9L2553 667.5L2554 661.1L2555 662.9L2556 665.7L2557 667.8L2558 669.1L2559 669.9L2560 669.5L2561 670.0L2562 671.2L2563 670.5L2564 670.3L2565 671.3L2566 670.6L2567 669.5L2568 670.3L2569 670.5L2570 669.6L2571 670.4L2572 667.1L2573 660.2L2574 662.1L2575 665.2L2576 667.4L2577 668.8L2578 669.6L2579 670.0L2580 669.9L2581 670.7L2582 671.5L2583 670.3L2584 670.0L2585 670.8L2586 670.0L2587 669.4L2588 670.7L2589 670.9L2590 670.1L2591 670.9L2592 667.3L2593 660.7L2594 662.5L2595 665.5L2596 667.6L2597 668.9L2598 669.7L2599 670.1L2600 670.1L2601 670.9L2602 671.0L2603 669.6L2604 669.8L2605 670.8L2606 670.0L2607 670.0L2608 671.3L2609 670.9L2610 670.0L2611 670.7L2612 667.5L2613 660.9L2614 662.8L2615 665.6L2616 667.7L2617 669.0L2618 669.8L2619 670.2L2620 669.7L2621 669.8L2622 665.6L2623 666.8L2624 668.6L2625 670.0L2626 670.3L2627 670.4L2628 671.3L2629 670.3L2630 669.5L2631 670.5L2632 667.8L2633 661.6L2634 663.3L2635 666.0L2636 668.0L2637 669.3L2638 670.0L2639 670.0L2640 669.4L2641 670.6L2642 670.5L2643 669.9L2644 671.0L2645 671.4L2646 670.1L2647 670.2L2648 670.8L2649 669.7L2650 669.5L2651 670.9L2652 667.7L2653 661.4L2654 663.2L2655 666.0L2656 668.0L2657 669.2L2658 670.0L2659 669.7L2660 669.8L2661 669.3L2662 664.7L2663 666.0L2664 668.0L2665 669.5L2666 669.4L2667 670.0L2668 670.7L2669 669.9L2670 670.2L2671 671.4L2672 667.6L2673 661.3L2674 663.0L2675 665.8L2676 667.9L2677 669.2L2678 669.9L2679 670.1L2680 670.5L2681 671.5L2682 670.4L2683 669.8L2684 670.7L2685 670.2L2686 669.4L2687 670.5L2688 671.1L2689 670.2L2690 670.6L2691 667.5L2692 660.9L2693 662.8L2694 665.6L2695 667.7L2696 669.0L2697 669.8L2698 670.2L2699 670.1L2700 670.5L2701 671.0L2702 669.7L2703 669.6L2704 670.7L2705 670.4L2706 669.9L2707 671.2L2708 671.2L2709 669.9L2710 670.4L2711 667.2L2712 660.3L2713 662.2L2714 665.2L2715 667.4L2716 668.8L2717 669.6L2718 670.0L2719 669.6L2720 670.2L2721 670.6L2722 669.6L2723 670.1L2724 671.3L2725 670.6L2726 670.2L2727 671.1L2728 670.5L2729 669.4L2730 670.2L2731 666.2L2732 658.5L2733 660.6L2734 664.1L2735 666.5L2736 668.1L2737 669.0L2738 669.5L2739 669.3L2740 669.2L2741 664.5L2742 665.8L2743 667.9L2744 669.4L2745 670.2L2746 669.9L2747 670.7L2748 670.0L2749 669.5L2750 670.8L2751 666.9L2752 659.9L2753 661.8L2754 664.9L2755 667.2L2756 668.6L2757 669.5L2758 669.9L2759 669.7L2760 671.1L2761 671.1L2762 670.1L2763 670.7L2764 670.9L2765 669.5L2766 669.8L2767 670.8L2768 670.2L2769 670.1L2770 671.4L2771 667.0L2772 660.0L2773 661.9L2774 665.0L2775 667.3L2776 668.7L2777 669.5L2778 669.9L2779 670.3L2780 671.4L2781 670.6L2782 669.6L2783 670.4L2784 670.5L2785 669.5L2786 670.3L2787 671.3L2788 670.4L2789 670.3L2790 667.8L2791 661.6L2792 663.3L2793 666.1L2794 668.1L2795 669.3L2796 670.0L2797 670.4L2798 670.3L2799 669.6L2800 665.2L2801 666.5L2802 668.4L2803 669.8L2804 670.7L2805 670.0L2806 671.0L2807 671.3L2808 670.0L2809 670.0L2810 667.3L2811 660.7L2812 662.6L2813 665.5L2814 667.6L2815 668.9L2816 669.7L2817 670.1L2818 669.6L2819 669.9L2820 670.7L2821 669.8L2822 669.9L2823 671.3L2824 670.9L2825 670.1L2826 670.9L2827 670.7L2828 669.4L2829 670.0L2830 666.9L2831 659.8L2832 661.8L2833 664.9L2834 667.2L2835 668.6L2836 669.4L2837 669.9L2838 669.3L2839 669.6L2840 665.2L2841 666.5L2842 668.4L2843 669.8L2844 670.4L2845 669.6L2846 670.6L2847 670.3L2848 669.5L2849 670.6L2850 667.8L2851 661.6L2852 663.3L2853 666.0L2854 668.0L2855 669.3L2856 670.0L2857 670.4L2858 669.7L2859 671.0L2860 671.3L2861 670.1L2862 670.4L2863 670.9L2864 669.7L2865 669.5L2866 670.8L2867 670.5L2868 670.0L2869 671.2L2870 667.7L2871 661.4L2872 663.2L2873 665.9L2874 668.0L2875 669.2L2876 670.0L2877 670.3L2878 670.1L2879 671.2L2880 670.8L2881 669.5L2882 670.1L2883 670.7L2884 669.7L2885 670.2L2886 671.4L2887 670.7L2888 670.1L2889 671.0L2890 667.6L2891 661.1L2892 662.9L2893 665.7L2894 667.8L2895 669.1L2896 669.9L2897 670.3L2898 669.9L2899 670.8L2900 670.2L2901 669.3L2902 670.5L2903 671.0L2904 670.1L2905 670.7L2906 671.4L2907 670.1L2908 669.7L2909 667.2L2910 660.4L2911 662.3L2912 665.3L2913 667.5L2914 668.8L2915 669.7L2916 670.1L2917 669.8L2918 669.6L2919 670.7L2920 670.2L2921 669.8L2922 671.2L2923 671.1L2924 670.0L2925 670.5L2926 670.8L2927 669.5L2928 669.7L2929 667.1L2930 660.2L2931 662.2L2932 665.2L2933 667.4L2934 668.8L2935 669.6L2936 670.0L2937 669.5L2938 670.0L2939 671.2L2940 670.5L2941 670.3L2942 671.3L2943 670.6L2944 669.5L2945 670.3L2946 670.5L2947 669.6L2948 670.4L2949 667.3L2950 660.5L2951 662.4L2952 665.4L2953 667.5L2954 668.9L2955 669.7L2956 670.1L2957 669.9L2958 670.7L2959 671.5L2960 670.2L2961 670.0L2962 670.8L2963 670.0L2964 669.4L2965 670.7L2966 670.9L2967 670.0L2968 670.9L2969 667.5L2970 661.0L2971 662.8L2972 674.0L2971 684.9L2970 686.6L2969 680.3L2968 677.1L2967 678.0L2966 677.1L2965 677.3L2964 678.6L2963 678.0L2962 677.2L2961 678.0L2960 677.8L2959 676.5L2958 677.3L2957 678.1L2956 678.2L2955 678.6L2954 679.5L2953 680.9L2952 683.2L2951 686.3L2950 688.4L2949 681.2L2948 677.6L2947 678.4L2946 677.5L2945 677.7L2944 678.5L2943 677.4L2942 676.7L2941 677.7L2940 677.5L2939 676.8L2938 678.0L2937 678.5L2936 677.8L2935 678.2L2934 679.0L2933 680.3L2932 682.3L2931 685.2L2930 687.0L2929 680.5L2928 678.3L2927 678.5L2926 677.2L2925 677.5L2924 678.0L2923 676.9L2922 676.8L2921 678.2L2920 677.8L2919 677.3L2918 678.4L2917 678.2L2916 678.0L2915 678.4L2914 679.2L2913 680.5L2912 682.7L2911 685.7L2910 687.6L2909 680.8L2908 678.3L2907 677.9L2906 676.6L2905 677.3L2904 677.9L2903 677.0L2902 677.5L2901 678.7L2900 677.8L2899 677.2L2898 678.1L2897 677.8L2896 678.1L2895 678.9L2894 680.2L2893 682.3L2892 685.1L2891 686.9L2890 680.5L2889 677.0L2888 677.9L2887 677.3L2886 676.6L2885 677.8L2884 678.3L2883 677.3L2882 677.9L2881 678.5L2880 677.2L2879 676.8L2878 677.9L2877 677.5L2876 677.9L2875 678.6L2874 679.9L2873 681.8L2872 684.5L2871 686.2L2870 680.1L2869 676.8L2868 678.0L2867 677.5L2866 677.2L2865 678.5L2864 678.3L2863 677.1L2862 677.6L2861 677.9L2860 676.7L2859 677.0L2858 678.3L2857 677.9L2856 678.3L2855 679.1L2854 680.4L2853 682.6L2852 685.5L2851 687.4L2850 680.7L2849 677.4L2848 678.5L2847 677.7L2846 677.4L2845 678.4L2844 677.6L2843 678.2L2842 679.6L2841 681.5L2840 682.8L2839 678.4L2838 678.7L2837 678.1L2836 678.5L2835 679.4L2834 680.8L2833 683.0L2832 686.1L2831 688.1L2830 681.1L2829 678.0L2828 678.6L2827 677.3L2826 677.1L2825 677.9L2824 677.1L2823 676.7L2822 678.1L2821 678.2L2820 677.3L2819 678.1L2818 678.4L2817 678.1L2816 678.5L2815 679.3L2814 680.7L2813 683.0L2812 686.0L2811 688.0L2810 681.0L2809 678.0L2808 678.0L2807 676.7L2806 677.0L2805 678.0L2804 677.3L2803 678.2L2802 679.6L2801 681.5L2800 682.8L2799 678.4L2798 677.7L2797 677.6L2796 678.0L2795 678.7L2794 680.0L2793 682.0L2792 684.7L2791 686.5L2790 680.2L2789 677.7L2788 677.6L2787 676.7L2786 677.7L2785 678.5L2784 677.5L2783 677.6L2782 678.4L2781 677.4L2780 676.6L2779 677.7L2778 678.2L2777 678.6L2776 679.5L2775 680.9L2774 683.2L2773 686.3L2772 688.3L2771 681.2L2770 676.6L2769 677.9L2768 677.8L2767 677.2L2766 678.2L2765 678.5L2764 677.1L2763 677.3L2762 677.9L2761 676.9L2760 676.9L2759 678.3L2758 678.1L2757 678.6L2756 679.4L2755 680.8L2754 683.1L2753 686.3L2752 688.3L2751 681.1L2750 677.2L2749 678.5L2748 678.0L2747 677.3L2746 678.1L2745 677.8L2744 678.6L2743 680.1L2742 682.2L2741 683.5L2740 678.8L2739 678.7L2738 678.6L2737 679.0L2736 680.0L2735 681.6L2734 684.1L2733 687.6L2732 689.8L2731 681.9L2730 677.8L2729 678.6L2728 677.5L2727 676.9L2726 677.8L2725 677.4L2724 676.7L2723 677.9L2722 678.4L2721 677.4L2720 677.8L2719 678.4L2718 677.9L2717 678.3L2716 679.2L2715 680.5L2714 682.7L2713 685.7L2712 687.6L2711 680.8L2710 677.6L2709 678.1L2708 676.8L2707 676.8L2706 678.1L2705 677.6L2704 677.3L2703 678.4L2702 678.3L2701 677.0L2700 677.5L2699 677.9L2698 677.6L2697 678.0L2696 678.7L2695 680.0L2694 682.0L2693 684.7L2692 686.5L2691 680.2L2690 677.4L2689 677.8L2688 676.9L2687 677.5L2686 678.6L2685 677.8L2684 677.3L2683 678.2L2682 677.6L2681 676.5L2680 677.5L2679 677.9L2678 677.9L2677 678.6L2676 679.8L2675 681.8L2674 684.5L2673 686.2L2672 680.1L2671 676.6L2670 677.8L2669 678.1L2668 677.3L2667 678.0L2666 678.6L2665 678.5L2664 680.0L2663 682.0L2662 683.3L2661 678.7L2660 678.2L2659 678.3L2658 678.0L2657 678.8L2656 680.0L2655 682.0L2654 684.8L2653 686.5L2652 680.3L2651 677.1L2650 678.5L2649 678.3L2648 677.2L2647 677.8L2646 677.9L2645 676.6L2644 677.0L2643 678.1L2642 677.5L2641 677.4L2640 678.6L2639 678.0L2638 678.2L2637 679.0L2636 680.3L2635 682.3L2634 685.2L2633 687.0L2632 680.5L2631 677.5L2630 678.5L2629 677.7L2628 676.7L2627 677.6L2626 677.7L2625 678.0L2624 679.4L2623 681.2L2622 682.4L2621 678.2L2620 678.3L2619 678.0L2618 678.4L2617 679.3L2616 680.7L2615 682.9L2614 686.0L2613 687.9L2612 680.9L2611 677.3L2610 678.0L2609 677.1L2608 676.7L2607 678.0L2606 678.0L2605 677.2L2604 678.2L2603 678.4L2602 677.0L2601 677.1L2600 677.9L2599 677.8L2598 678.2L2597 679.0L2596 680.3L2595 682.5L2594 685.4L2593 687.2L2592 680.6L2591 677.1L2590 677.9L2589 677.1L2588 677.3L2587 678.6L2586 678.0L2585 677.2L2584 678.0L2583 677.7L2582 676.5L2581 677.3L2580 678.1L2579 677.8L2578 678.2L2577 678.9L2576 680.2L2575 682.3L2574 685.2L2573 687.0L2572 680.5L2571 677.6L2570 678.4L2569 677.5L2568 677.7L2567 678.5L2566 677.4L2565 676.7L2564 677.7L2563 677.5L2562 676.8L2561 678.0L2560 678.5L2559 677.9L2558 678.6L2557 679.8L2556 681.8L2555 684.5L2554 686.2L2553 680.1L2552 677.1L2551 678.3L2550 678.5L2549 677.2L2548 677.5L2547 678.0L2546 676.8L2545 676.8L2544 678.2L2543 677.8L2542 677.3L2541 678.4L2540 678.2L2539 678.3L2538 679.1L2537 680.5L2536 682.6L2535 685.6L2534 687.4L2533 680.7L2532 677.3L2531 678.3L2530 677.9L2529 676.6L2528 677.3L2527 677.9L2526 677.0L2525 677.5L2524 678.7L2523 677.8L2522 677.2L2521 678.1L2520 678.2L2519 678.7L2518 679.6L2517 681.0L2516 683.4L2515 686.6L2514 688.6L2513 681.3L2512 677.0L2511 677.9L2510 677.3L2509 676.6L2508 677.9L2507 678.3L2506 677.3L2505 677.9L2504 678.5L2503 677.2L2502 676.8L2501 677.9L2500 677.7L2499 678.1L2498 678.9L2497 680.1L2496 682.2L2495 685.0L2494 686.8L2493 680.4L2492 676.8L2491 678.0L2490 677.5L2489 677.2L2488 678.5L2487 678.3L2486 677.1L2485 677.6L2484 677.9L2483 676.7L2482 677.0L2481 678.3L2480 677.9L2479 678.3L2478 679.2L2477 680.5L2476 682.7L2475 685.7L2474 687.6L2473 680.8L2472 677.4L2471 678.5L2470 677.7L2469 677.5L2468 678.4L2467 677.6L2466 676.6L2465 677.5L2464 677.8L2463 676.9L2462 677.8L2461 678.7L2460 678.0L2459 678.8L2458 680.0L2457 682.0L2456 684.8L2455 686.6L2454 680.3L2453 677.2L2452 678.0L2451 678.6L2450 677.3L2449 677.1L2448 677.9L2447 678.4L2446 679.8L2445 681.8L2444 683.1L2443 678.5L2442 678.1L2441 678.3L2440 678.5L2439 679.3L2438 680.8L2437 683.0L2436 686.1L2435 688.1L2434 681.0L2433 677.2L2432 678.0L2431 678.0L2430 676.7L2429 677.1L2428 678.0L2427 677.3L2426 677.4L2425 678.6L2424 678.0L2423 677.0L2422 677.8L2421 677.9L2420 678.3L2419 679.1L2418 680.4L2417 682.5L2416 685.5L2415 687.3L2414 680.7L2413 676.8L2412 677.7L2411 677.6L2410 676.8L2409 677.7L2408 678.5L2407 678.7L2406 680.2L2405 682.3L2404 683.7L2403 678.8L2402 677.7L2401 677.9L2400 678.3L2399 679.1L2398 680.4L2397 682.6L2396 685.5L2395 687.4L2394 680.7L2393 676.6L2392 677.9L2391 677.8L2390 677.2L2389 678.3L2388 678.5L2387 677.1L2386 677.3L2385 677.9L2384 676.9L2383 676.9L2382 678.3L2381 678.3L2380 678.7L2379 679.6L2378 681.0L2377 683.4L2376 686.6L2375 688.7L2374 681.3L2373 677.2L2372 678.6L2371 678.0L2370 677.3L2369 678.1L2368 677.8L2367 676.6L2366 677.3L2365 678.0L2364 677.2L2363 677.6L2362 678.7L2361 677.8L2360 678.2L2359 679.0L2358 680.3L2357 682.4L2356 685.3L2355 687.1L2354 680.6L2353 677.8L2352 678.6L2351 677.5L2350 676.9L2349 677.8L2348 677.4L2347 676.7L2346 677.9L2345 678.4L2344 677.4L2343 677.8L2342 678.4L2341 678.5L2340 679.3L2339 680.8L2338 683.0L2337 686.1L2336 688.1L2335 681.0L2334 677.3L2333 677.6L2332 678.1L2331 676.8L2330 676.8L2329 678.1L2328 677.6L2327 677.3L2326 678.5L2325 678.3L2324 677.0L2323 677.5L2322 678.7L2321 679.2L2320 680.1L2319 681.8L2318 684.3L2317 687.9L2316 690.2L2315 682.1L2314 676.7L2313 677.4L2312 677.8L2311 676.9L2310 677.5L2309 678.6L2308 677.8L2307 677.3L2306 678.2L2305 677.5L2304 676.5L2303 677.5L2302 677.9L2301 678.2L2300 679.0L2299 680.4L2298 682.5L2297 685.4L2296 687.2L2295 680.6L2294 676.6L2293 677.8L2292 678.1L2291 677.3L2290 678.0L2289 678.5L2288 677.2L2287 677.0L2286 677.9L2285 677.2L2284 676.8L2283 678.2L2282 678.3L2281 678.4L2280 679.3L2279 680.6L2278 682.9L2277 685.9L2276 687.8L2275 680.9L2274 677.1L2273 678.5L2272 678.2L2271 677.2L2270 677.8L2269 677.9L2268 677.9L2267 679.2L2266 681.0L2265 682.1L2264 678.0L2263 678.6L2262 678.0L2261 678.1L2260 678.8L2259 680.1L2258 682.1L2257 684.9L2256 686.7L2255 680.4L2254 677.5L2253 678.5L2252 677.7L2251 676.7L2250 677.6L2249 677.7L2248 676.8L2247 677.7L2246 678.6L2245 677.6L2244 677.5L2243 678.3L2242 678.6L2241 679.4L2240 680.9L2239 683.2L2238 686.3L2237 688.3L2236 681.2L2235 677.3L2234 677.3L2233 678.0L2232 677.0L2231 676.7L2230 678.0L2229 678.0L2228 677.3L2227 678.2L2226 678.4L2225 677.0L2224 677.1L2223 677.9L2222 678.3L2221 679.1L2220 680.5L2219 682.6L2218 685.6L2217 687.5L2216 680.7L2215 676.7L2214 677.1L2213 677.9L2212 677.1L2211 677.3L2210 678.6L2209 678.0L2208 677.2L2207 678.0L2206 677.7L2205 676.5L2204 677.3L2203 678.1L2202 678.5L2201 679.3L2200 680.7L2199 682.9L2198 686.0L2197 688.0L2196 681.0L2195 676.6L2194 677.6L2193 678.4L2192 677.4L2191 677.7L2190 678.5L2189 677.4L2188 676.7L2187 677.8L2186 677.5L2185 676.8L2184 678.0L2183 678.5L2182 678.4L2181 679.2L2180 680.6L2179 682.7L2178 685.7L2177 687.6L2176 680.8L2175 677.1L2174 678.3L2173 678.5L2172 677.2L2171 677.5L2170 678.0L2169 676.8L2168 676.8L2167 678.2L2166 677.8L2165 677.3L2164 678.4L2163 678.2L2162 678.4L2161 679.3L2160 680.7L2159 682.9L2158 685.9L2157 687.9L2156 680.9L2155 677.3L2154 678.3L2153 677.8L2152 676.6L2151 677.3L2150 677.9L2149 678.2L2148 679.6L2147 681.6L2146 682.8L2145 678.4L2144 678.1L2143 677.9L2142 678.3L2141 679.2L2140 680.5L2139 682.7L2138 685.7L2137 687.6L2136 680.8L2135 677.0L2134 677.9L2133 677.3L2132 676.6L2131 677.9L2130 678.3L2129 677.3L2128 677.9L2127 678.5L2126 677.1L2125 676.8L2124 678.0L2123 678.4L2122 679.3L2121 680.7L2120 682.9L2119 685.9L2118 687.9L2117 680.9L2116 676.8L2115 676.9L2114 678.0L2113 677.5L2112 677.2L2111 678.5L2110 678.3L2109 677.1L2108 677.7L2107 677.9L2106 676.7L2105 677.1L2104 678.3L2103 678.4L2102 679.2L2101 680.5L2100 682.7L2099 685.7L2098 687.6L2097 680.8L2096 676.7L2095 677.4L2094 678.5L2093 677.7L2092 677.5L2091 678.4L2090 677.6L2089 676.6L2088 677.5L2087 677.8L2086 676.9L2085 677.8L2084 678.7L2083 678.1L2082 678.9L2081 680.2L2080 682.2L2079 685.1L2078 686.9L2077 680.4L2076 677.2L2075 678.0L2074 678.6L2073 677.3L2072 677.1L2071 678.0L2070 677.1L2069 676.7L2068 678.1L2067 678.1L2066 677.3L2065 678.1L2064 678.3L2063 678.4L2062 679.2L2061 680.5L2060 682.7L2059 685.7L2058 687.6L2057 680.8L2056 677.2L2055 678.0L2054 678.0L2053 676.6L2052 677.1L2051 678.0L2050 677.3L2049 677.4L2048 678.6L2047 678.0L2046 677.0L2045 677.8L2044 678.0L2043 678.5L2042 679.3L2041 680.7L2040 682.9L2039 686.0L2038 688.0L2037 681.0L2036 676.8L2035 677.7L2034 677.6L2033 676.7L2032 677.7L2031 678.5L2030 677.5L2029 677.6L2028 678.4L2027 677.3L2026 676.6L2025 677.7L2024 677.9L2023 678.3L2022 679.1L2021 680.5L2020 682.6L2019 685.6L2018 687.5L2017 680.7L2016 676.7L2015 677.9L2014 677.8L2013 677.2L2012 678.3L2011 678.8L2010 680.4L2009 682.6L2008 684.0L2007 679.0L2006 676.9L2005 678.3L2004 678.0L2003 678.7L2002 680.0L2001 682.0L2000 684.7L1999 686.5L1998 680.2L1997 677.0L1996 677.2L1995 678.6L1994 678.0L1993 677.3L1992 678.1L1991 677.8L1990 676.5L1989 677.3L1988 678.0L1987 677.2L1986 677.6L1985 678.7L1984 678.6L1983 679.4L1982 680.9L1981 683.2L1980 686.3L1979 688.3L1978 681.2L1977 677.3L1976 677.8L1975 678.6L1974 677.4L1973 676.9L1972 677.8L1971 677.4L1970 676.7L1969 677.9L1968 678.4L1967 677.4L1966 677.8L1965 678.4L1964 678.2L1963 679.0L1962 680.3L1961 682.4L1960 685.2L1959 687.1L1958 680.5L1957 677.2L1956 677.7L1955 678.1L1954 676.8L1953 676.8L1952 678.1L1951 677.6L1950 677.3L1949 678.5L1948 678.2L1947 677.0L1946 677.5L1945 677.9L1944 678.3L1943 679.1L1942 680.4L1941 682.6L1940 685.5L1939 687.4L1938 680.7L1937 676.7L1936 677.4L1935 677.8L1934 676.9L1933 677.5L1932 678.6L1931 678.8L1930 680.4L1929 682.6L1928 684.0L1927 679.0L1926 677.5L1925 677.9L1924 678.2L1923 679.0L1922 680.3L1921 682.4L1920 685.3L1919 687.2L1918 680.6L1917 676.6L1916 677.8L1915 678.1L1914 677.3L1913 678.0L1912 678.5L1911 677.2L1910 677.0L1909 677.9L1908 677.2L1907 676.8L1906 678.8L1905 679.3L1904 680.3L1903 682.0L1902 684.7L1901 688.3L1900 690.7L1899 682.3L1898 677.3L1897 677.1L1896 678.5L1895 678.2L1894 677.2L1893 677.8L1892 677.9L1891 676.6L1890 677.1L1889 678.1L1888 677.5L1887 677.4L1886 678.6L1885 678.3L1884 679.1L1883 680.5L1882 682.7L1881 685.6L1880 687.5L1879 680.8L1878 677.6L1877 677.5L1876 678.5L1875 677.6L1874 676.8L1873 677.6L1872 678.3L1871 679.7L1870 681.6L1869 682.9L1868 678.4L1867 677.5L1866 678.3L1865 678.3L1864 679.1L1863 680.4L1862 682.5L1861 685.4L1860 687.3L1859 680.7L1858 677.3L1857 677.3L1856 678.0L1855 677.0L1854 676.7L1853 678.0L1852 678.0L1851 679.2L1850 680.9L1849 682.1L1848 678.0L1847 677.2L1846 677.9L1845 678.0L1844 678.8L1843 680.1L1842 682.1L1841 684.9L1840 686.6L1839 680.3L1838 676.7L1837 677.1L1836 677.9L1835 677.1L1834 677.3L1833 678.6L1832 678.0L1831 677.2L1830 678.0L1829 677.7L1828 676.5L1827 677.3L1826 678.1L1825 678.5L1824 679.3L1823 680.7L1822 683.0L1821 686.1L1820 688.0L1819 681.0L1818 676.6L1817 677.6L1816 678.4L1815 677.4L1814 677.7L1813 678.5L1812 677.4L1811 676.7L1810 677.8L1809 677.5L1808 676.8L1807 678.0L1806 678.5L1805 678.4L1804 679.2L1803 680.6L1802 682.8L1801 685.8L1800 687.7L1799 680.8L1798 677.1L1797 678.3L1796 678.5L1795 677.2L1794 677.5L1793 678.0L1792 676.8L1791 676.8L1790 678.2L1789 677.8L1788 677.3L1787 678.4L1786 678.2L1785 678.9L1784 680.1L1783 682.2L1782 685.0L1781 686.8L1780 680.4L1779 677.9L1778 677.4L1777 678.3L1776 677.8L1775 676.6L1774 677.3L1773 677.9L1772 677.0L1771 677.5L1770 678.7L1769 677.8L1768 677.2L1767 678.1L1766 678.2L1765 679.0L1764 680.3L1763 682.4L1762 685.3L1761 687.1L1760 680.5L1759 677.5L1758 677.0L1757 677.9L1756 677.3L1755 676.6L1754 677.9L1753 678.3L1752 677.3L1751 677.9L1750 678.5L1749 677.1L1748 676.9L1747 677.9L1746 678.1L1745 678.9L1744 680.2L1743 682.3L1742 685.1L1741 686.9L1740 680.5L1739 676.8L1738 676.9L1737 678.0L1736 677.4L1735 677.2L1734 678.5L1733 678.3L1732 677.1L1731 677.7L1730 677.9L1729 676.7L1728 677.1L1727 678.3L1726 678.5L1725 679.4L1724 680.8L1723 683.1L1722 686.2L1721 688.2L1720 681.1L1719 676.7L1718 677.4L1717 678.5L1716 677.7L1715 677.5L1714 678.4L1713 677.6L1712 676.6L1711 677.6L1710 677.8L1709 676.9L1708 677.8L1707 678.7L1706 678.5L1705 679.4L1704 680.8L1703 683.0L1702 686.1L1701 688.1L1700 681.1L1699 677.2L1698 678.1L1697 678.6L1696 677.3L1695 677.1L1694 678.0L1693 677.1L1692 676.7L1691 678.1L1690 678.1L1689 677.3L1688 678.1L1687 678.5L1686 679.3L1685 680.7L1684 683.0L1683 686.1L1682 688.0L1681 681.0L1680 678.2L1679 677.2L1678 678.0L1677 678.0L1676 676.6L1675 677.1L1674 678.0L1673 677.3L1672 677.4L1671 678.6L1670 678.0L1669 677.0L1668 678.0L1667 678.4L1666 679.2L1665 680.6L1664 682.8L1663 685.8L1662 687.8L1661 680.9L1660 677.7L1659 676.8L1658 677.7L1657 677.6L1656 676.7L1655 677.7L1654 678.5L1653 677.5L1652 677.6L1651 678.4L1650 677.3L1649 676.6L1648 678.1L1647 678.5L1646 679.3L1645 680.7L1644 682.9L1643 686.0L1642 688.0L1641 681.0L1640 677.0L1639 676.7L1638 678.0L1637 677.8L1636 677.2L1635 678.3L1634 678.4L1633 679.5L1632 681.4L1631 682.6L1630 678.3L1629 676.9L1628 678.3L1627 678.5L1626 679.3L1625 680.8L1624 683.0L1623 686.1L1622 688.1L1621 681.0L1620 677.0L1619 677.3L1618 678.6L1617 678.0L1616 677.3L1615 678.2L1614 677.8L1613 676.5L1612 677.3L1611 678.0L1610 677.2L1609 677.6L1608 678.7L1607 678.2L1606 679.0L1605 680.4L1604 682.5L1603 685.4L1602 687.3L1601 680.6L1600 677.3L1599 677.8L1598 678.6L1597 677.4L1596 676.9L1595 677.8L1594 677.4L1593 676.7L1592 678.0L1591 678.4L1590 677.4L1589 677.8L1588 678.4L1587 678.4L1586 679.2L1585 680.5L1584 682.7L1583 685.7L1582 687.6L1581 680.8L1580 677.2L1579 677.7L1578 678.1L1577 676.8L1576 676.8L1575 678.1L1574 677.6L1573 677.3L1572 678.5L1571 678.2L1570 677.0L1569 678.0L1568 678.4L1567 679.3L1566 680.6L1565 682.8L1564 685.9L1563 687.8L1562 680.9L1561 677.9L1560 676.7L1559 677.4L1558 677.8L1557 676.8L1556 677.5L1555 678.6L1554 677.7L1553 677.4L1552 678.2L1551 677.5L1550 676.5L1549 678.1L1548 678.6L1547 679.4L1546 680.8L1545 683.1L1544 686.2L1543 688.2L1542 681.1L1541 677.3L1540 676.6L1539 677.8L1538 678.1L1537 677.3L1536 678.0L1535 678.5L1534 677.2L1533 677.0L1532 677.9L1531 677.2L1530 676.8L1529 678.2L1528 678.3L1527 678.7L1526 680.0L1525 682.0L1524 684.7L1523 686.4L1522 680.2L1521 677.3L1520 677.1L1519 678.5L1518 678.2L1517 677.2L1516 677.8L1515 677.9L1514 676.6L1513 677.1L1512 678.1L1511 677.5L1510 677.4L1509 678.6L1508 678.5L1507 679.3L1506 680.7L1505 682.9L1504 686.0L1503 688.0L1502 681.0L1501 677.6L1500 677.5L1499 678.5L1498 677.6L1497 676.7L1496 677.6L1495 677.7L1494 676.8L1493 677.8L1492 678.6L1491 677.5L1490 677.5L1489 678.3L1488 678.2L1487 679.0L1486 680.3L1485 682.4L1484 685.3L1483 687.2L1482 680.6L1481 677.3L1480 677.3L1479 678.0L1478 677.0L1477 676.7L1476 678.0L1475 678.0L1474 677.3L1473 678.2L1472 678.4L1471 677.0L1470 677.7L1469 678.1L1468 678.8L1467 680.1L1466 682.1L1465 684.9L1464 686.7L1463 680.3L1462 678.1L1461 676.7L1460 677.1L1459 677.9L1458 677.1L1457 677.3L1456 678.6L1455 678.0L1454 677.2L1453 678.0L1452 677.7L1451 676.5L1450 677.7L1449 678.1L1448 678.9L1447 680.2L1446 682.2L1445 685.0L1444 686.8L1443 680.4L1442 677.5L1441 676.6L1440 677.6L1439 678.4L1438 677.4L1437 677.7L1436 678.5L1435 680.0L1434 682.0L1433 683.3L1432 678.6L1431 676.8L1430 678.0L1429 678.5L1428 678.9L1427 680.1L1426 682.2L1425 685.0L1424 686.8L1423 680.4L1422 677.6L1421 677.1L1420 678.3L1419 678.4L1418 677.2L1417 677.5L1416 678.0L1415 676.8L1414 676.9L1413 678.2L1412 677.8L1411 677.3L1410 678.4L1409 678.2L1408 678.9L1407 680.2L1406 682.3L1405 685.2L1404 687.0L1403 680.5L1402 677.9L1401 677.4L1400 678.3L1399 677.8L1398 676.6L1397 677.4L1396 677.9L1395 677.0L1394 677.6L1393 678.7L1392 677.8L1391 677.2L1390 678.1L1389 678.4L1388 679.2L1387 680.6L1386 682.8L1385 685.8L1384 687.7L1383 680.9L1382 677.5L1381 677.0L1380 677.9L1379 677.3L1378 676.6L1377 677.9L1376 678.3L1375 677.3L1374 677.9L1373 678.5L1372 677.1L1371 676.9L1370 677.9L1369 678.1L1368 678.9L1367 680.2L1366 682.2L1365 685.1L1364 686.9L1363 680.4L1362 676.8L1361 676.9L1360 678.0L1359 677.4L1358 677.2L1357 678.5L1356 678.2L1355 677.1L1354 677.7L1353 677.9L1352 676.7L1351 678.1L1350 678.6L1349 679.4L1348 680.9L1347 683.1L1346 686.3L1345 688.3L1344 681.1L1343 677.7L1342 676.7L1341 677.4L1340 678.5L1339 677.7L1338 677.5L1337 678.5L1336 680.0L1335 682.0L1334 683.3L1333 678.7L1332 676.9L1331 678.1L1330 678.7L1329 679.3L1328 680.7L1327 682.9L1326 686.0L1325 688.0L1324 681.0L1323 677.9L1322 677.2L1321 678.1L1320 678.6L1319 677.3L1318 677.2L1317 678.0L1316 677.1L1315 676.7L1314 678.1L1313 678.1L1312 677.3L1311 678.1L1310 678.5L1309 679.3L1308 680.7L1307 682.9L1306 686.0L1305 687.9L1304 681.0L1303 678.2L1302 677.2L1301 678.0L1300 678.0L1299 676.6L1298 677.1L1297 678.0L1296 677.3L1295 677.4L1294 678.6L1293 678.0L1292 677.0L1291 678.2L1290 678.7L1289 679.6L1288 681.0L1287 683.4L1286 686.6L1285 688.6L1284 681.3L1283 677.7L1282 676.8L1281 677.7L1280 677.6L1279 676.7L1278 677.7L1277 678.5L1276 679.2L1275 681.0L1274 682.1L1273 678.1L1272 676.6L1271 677.7L1270 678.0L1269 678.8L1268 680.0L1267 682.0L1266 684.8L1265 686.6L1264 680.3L1263 677.0L1262 676.7L1261 678.0L1260 677.8L1259 677.2L1258 678.3L1257 678.4L1256 677.1L1255 677.3L1254 677.9L1253 676.9L1252 676.9L1251 678.3L1250 678.3L1249 679.1L1248 680.4L1247 682.5L1246 685.5L1245 687.3L1244 680.7L1243 676.9L1242 677.3L1241 678.6L1240 677.9L1239 677.3L1238 678.2L1237 679.5L1236 681.5L1235 682.7L1234 678.3L1233 677.1L1232 678.1L1231 678.7L1230 679.4L1229 680.8L1228 683.0L1227 686.2L1226 688.1L1225 681.1L1224 678.2L1223 677.3L1222 677.8L1221 678.6L1220 677.4L1219 676.9L1218 677.8L1217 677.4L1216 676.7L1215 678.0L1214 678.4L1213 677.4L1212 677.8L1211 678.4L1210 678.9L1209 680.2L1208 682.3L1207 685.1L1206 686.9L1205 680.5L1204 678.4L1203 677.2L1202 677.7L1201 678.1L1200 676.8L1199 676.9L1198 678.1L1197 677.6L1196 677.3L1195 678.5L1194 678.2L1193 677.0L1192 677.9L1191 678.3L1190 679.2L1189 680.5L1188 682.7L1187 685.7L1186 687.6L1185 680.8L1184 677.9L1183 676.7L1182 677.4L1181 677.8L1180 676.8L1179 677.5L1178 678.6L1177 677.7L1176 677.4L1175 678.3L1174 677.5L1173 676.5L1172 677.9L1171 678.3L1170 679.2L1169 680.5L1168 682.7L1167 685.7L1166 687.6L1165 680.8L1164 677.2L1163 676.6L1162 677.8L1161 678.1L1160 677.3L1159 678.0L1158 678.5L1157 677.2L1156 677.0L1155 677.9L1154 677.2L1153 676.8L1152 678.2L1151 678.2L1150 679.0L1149 680.3L1148 682.4L1147 685.3L1146 687.2L1145 680.6L1144 677.3L1143 677.1L1142 678.5L1141 678.2L1140 677.2L1139 677.8L1138 677.9L1137 676.6L1136 677.1L1135 678.1L1134 677.4L1133 678.8L1132 679.3L1131 680.3L1130 682.0L1129 684.6L1128 688.3L1127 690.6L1126 682.3L1125 678.4L1124 677.6L1123 677.6L1122 678.5L1121 677.6L1120 676.7L1119 677.6L1118 677.6L1117 676.8L1116 677.8L1115 678.6L1114 677.5L1113 678.1L1112 678.5L1111 679.3L1110 680.7L1109 682.9L1108 686.0L1107 688.0L1106 681.0L1105 678.6L1104 677.3L1103 677.3L1102 678.0L1101 677.0L1100 676.7L1099 678.0L1098 678.0L1097 677.3L1096 678.2L1095 678.4L1094 677.0L1093 677.6L1092 677.9L1091 678.7L1090 679.9L1089 681.9L1088 684.6L1087 686.3L1086 680.2L1085 678.0L1084 676.7L1083 677.2L1082 677.9L1081 677.1L1080 677.3L1079 678.6L1078 678.0L1077 677.2L1076 678.0L1075 677.7L1074 676.5L1073 678.0L1072 678.4L1071 679.3L1070 680.7L1069 682.9L1068 685.9L1067 687.9L1066 680.9L1065 677.5L1064 676.6L1063 677.7L1062 678.4L1061 677.4L1060 677.7L1059 678.5L1058 677.3L1057 676.7L1056 677.8L1055 677.5L1054 676.8L1053 678.0L1052 678.5L1051 678.9L1050 680.2L1049 682.3L1048 685.1L1047 686.9L1046 680.5L1045 677.6L1044 677.1L1043 678.3L1042 678.4L1041 677.2L1040 677.5L1039 678.0L1038 676.8L1037 676.9L1036 678.2L1035 677.8L1034 677.3L1033 678.4L1032 678.2L1031 679.0L1030 680.3L1029 682.4L1028 685.3L1027 687.1L1026 680.5L1025 677.9L1024 677.4L1023 678.3L1022 677.8L1021 676.6L1020 677.4L1019 677.9L1018 677.0L1017 677.6L1016 678.7L1015 677.8L1014 678.1L1013 678.6L1012 679.4L1011 680.9L1010 683.2L1009 686.3L1008 688.3L1007 681.1L1006 678.7L1005 677.5L1004 677.0L1003 677.9L1002 677.3L1001 677.5L1000 678.5L999 679.9L998 682.0L997 683.3L996 678.6L995 677.1L994 677.8L993 678.2L992 679.0L991 680.4L990 682.5L989 685.4L988 687.3L987 680.6L986 678.1L985 676.8L984 676.9L983 678.0L982 677.4L981 677.2L980 678.5L979 678.2L978 677.1L977 677.7L976 677.9L975 676.6L974 677.7L973 678.3L972 678.9L971 680.2L970 682.3L969 685.1L968 686.9L967 680.5L966 677.7L965 676.7L964 677.5L963 678.5L962 677.7L961 677.5L960 678.4L959 677.5L958 676.6L957 677.6L956 677.8L955 676.9L954 678.3L953 678.7L952 679.6L951 681.1L950 683.4L949 686.7L948 688.7L947 681.4L946 677.9L945 677.2L944 678.1L943 678.6L942 677.2L941 677.2L940 678.0L939 677.1L938 676.7L937 678.1L936 678.1L935 677.3L934 678.1L933 678.3L932 678.6L931 679.9L930 681.8L929 684.5L928 686.2L927 680.1L926 678.2L925 677.2L924 678.0L923 678.0L922 677.7L921 678.7L920 680.3L919 682.5L918 683.8L917 678.9L916 678.0L915 677.8L914 678.2L913 679.0L912 680.3L911 682.4L910 685.3L909 687.1L908 680.6L907 678.6L906 677.7L905 676.8L904 677.7L903 677.6L902 676.7L901 677.7L900 678.5L899 677.5L898 677.6L897 678.4L896 677.3L895 678.2L894 678.6L893 679.5L892 680.9L891 683.2L890 686.4L889 688.4L888 681.2L887 678.1L886 677.0L885 676.7L884 678.0L883 677.8L882 677.8L881 678.8L880 680.4L879 682.6L878 684.0L877 679.0L876 676.9L875 677.9L874 678.3L873 679.1L872 680.4L871 682.6L870 685.5L869 687.4L868 680.7L867 677.9L866 676.9L865 677.3L864 678.6L863 677.9L862 677.3L861 678.2L860 677.7L859 676.5L858 677.3L857 678.0L856 677.1L855 678.1L854 678.7L853 679.4L852 680.8L851 683.1L850 686.2L849 688.2L848 681.1L847 678.2L846 677.3L845 677.8L844 678.6L843 677.4L842 676.9L841 677.8L840 677.4L839 676.7L838 678.0L837 678.4L836 677.4L835 678.1L834 678.6L833 679.4L832 680.8L831 683.1L830 686.2L829 688.2L828 681.1L827 678.4L826 677.2L825 677.7L824 678.0L823 676.8L822 676.9L821 678.1L820 677.6L819 677.3L818 678.5L817 678.2L816 677.0L815 677.6L814 678.0L813 678.7L812 679.9L811 681.9L810 684.6L809 686.4L808 680.2L807 677.9L806 676.7L805 677.4L804 677.8L803 677.2L802 678.1L801 679.4L800 681.3L799 682.5L798 678.3L797 677.5L796 677.8L795 678.2L794 679.0L793 680.3L792 682.4L791 685.2L790 687.1L789 680.5L788 678.0L787 677.2L786 676.6L785 677.9L784 678.1L783 677.3L782 678.0L781 678.5L780 677.2L779 677.0L778 677.9L777 677.1L776 678.1L775 678.5L774 679.4L773 680.8L772 683.0L771 686.1L770 688.1L769 681.0L768 677.9L767 677.3L766 677.1L765 678.5L764 678.2L763 677.2L762 677.9L761 679.2L760 681.0L759 682.2L758 678.1L757 677.4L756 678.2L755 678.7L754 679.6L753 681.0L752 683.4L751 686.6L750 688.6L749 681.3L748 678.4L747 677.6L746 677.6L745 678.5L744 677.6zM745.3 700.2l5.5 19.8l-5.5 19.8zM765.1 700.8l6.0 19.2l-6.0 19.2zM784.9 701.2l6.0 18.8l-6.0 18.8zM794.8 700.1l6.3 19.9l-6.3 19.9zM814.7 700.1l6.1 19.9l-6.1 19.9zM824.6 700.0l5.7 20.0l-5.7 20.0zM834.5 700.1l6.2 19.9l-6.2 19.9zM844.4 701.1l6.6 18.9l-6.6 18.9zM864.2 700.8l5.6 19.2l-5.6 19.2zM874.1 701.0l5.4 19.0l-5.4 19.0zM893.9 701.2l6.3 18.8l-6.3 18.8zM903.8 701.1l5.6 18.9l-5.6 18.9zM908.3 703.1l5.6 16.9l-5.6 16.9zM923.7 701.1l5.5 18.9l-5.5 18.9zM928.2 703.1l5.5 16.9l-5.5 16.9zM943.5 700.6l5.6 19.4l-5.6 19.4zM953.4 700.7l5.6 19.3l-5.6 19.3zM973.2 700.5l5.6 19.5l-5.6 19.5zM983.1 700.8l6.0 19.2l-6.0 19.2zM1002.9 701.0l5.9 19.0l-5.9 19.0zM1022.8 700.3l6.4 19.7l-6.4 19.7zM1032.7 700.9l5.8 19.1l-5.8 19.1zM1052.5 700.1l5.8 19.9l-5.8 19.9zM1062.4 701.1l6.4 18.9l-6.4 18.9zM1082.2 700.0l5.5 20.0l-5.5 20.0zM1102.0 700.4l5.5 19.6l-5.5 19.6zM1112.0 699.9l6.4 20.1l-6.4 20.1zM1131.8 701.2l5.9 18.8l-5.9 18.8zM1141.7 700.1l6.4 19.9l-6.4 19.9zM1161.5 699.8l6.5 20.2l-6.5 20.2zM1181.3 699.9l5.5 20.1l-5.5 20.1zM1191.2 700.1l6.2 19.9l-6.2 19.9zM1211.1 700.2l5.5 19.8l-5.5 19.8zM1215.6 702.2l5.5 17.8l-5.5 17.8zM1221.0 700.3l5.4 19.7l-5.4 19.7zM1240.8 700.5l5.6 19.5l-5.6 19.5zM1260.6 699.8l6.5 20.2l-6.5 20.2zM1270.5 700.4l6.3 19.6l-6.3 19.6zM1290.3 700.2l6.3 19.8l-6.3 19.8zM1300.2 700.7l5.5 19.3l-5.5 19.3zM1320.1 700.3l6.5 19.7l-6.5 19.7zM1330.0 700.1l5.8 19.9l-5.8 19.9zM1339.9 700.8l5.4 19.2l-5.4 19.2zM1349.8 700.8l6.1 19.2l-6.1 19.2zM1369.6 699.9l5.9 20.1l-5.9 20.1zM1379.5 699.8l6.5 20.2l-6.5 20.2zM1399.3 699.8l6.0 20.2l-6.0 20.2zM1419.2 699.8l5.4 20.2l-5.4 20.2zM1429.1 699.8l5.5 20.2l-5.5 20.2zM1448.9 699.8l6.0 20.2l-6.0 20.2zM1458.8 700.9l5.6 19.1l-5.6 19.1zM1468.7 700.4l5.6 19.6l-5.6 19.6zM1478.6 700.0l6.3 20.0l-6.3 20.0zM1498.4 699.8l5.4 20.2l-5.4 20.2zM1508.4 700.4l6.3 19.6l-6.3 19.6zM1528.2 700.4l5.6 19.6l-5.6 19.6zM1532.7 702.4l5.6 17.6l-5.6 17.6zM1538.1 700.1l6.5 19.9l-6.5 19.9zM1557.9 701.1l5.8 18.9l-5.8 18.9zM1577.7 700.6l5.8 19.4l-5.8 19.4zM1587.6 701.0l6.2 19.0l-6.2 19.0zM1607.5 701.0l6.2 19.0l-6.2 19.0zM1617.4 700.3l5.8 19.7l-5.8 19.7zM1637.2 700.9l5.8 19.1l-5.8 19.1zM1657.0 700.3l6.2 19.7l-6.2 19.7zM1666.9 701.1l6.3 18.9l-6.3 18.9zM1686.7 700.3l6.3 19.7l-6.3 19.7zM1696.6 700.8l6.4 19.2l-6.4 19.2zM1716.5 700.2l5.6 19.8l-5.6 19.8zM1736.3 701.1l5.7 18.9l-5.7 18.9zM1746.2 700.7l6.3 19.3l-6.3 19.3zM1766.0 700.7l6.2 19.3l-6.2 19.3zM1775.9 700.5l6.2 19.5l-6.2 19.5zM1795.7 700.4l5.6 19.6l-5.6 19.6zM1815.6 701.1l6.2 18.9l-6.2 18.9zM1825.5 700.6l6.5 19.4l-6.5 19.4zM1845.3 700.8l6.0 19.2l-6.0 19.2zM1855.2 700.5l6.2 19.5l-6.2 19.5zM1875.0 700.7l6.4 19.3l-6.4 19.3zM1894.8 699.8l6.5 20.2l-6.5 20.2zM1904.8 700.3l6.1 19.7l-6.1 19.7zM1924.6 700.7l5.8 19.3l-5.8 19.3zM1934.5 699.9l6.0 20.1l-6.0 20.1zM1954.3 699.9l5.9 20.1l-5.9 20.1zM1974.1 701.0l6.1 19.0l-6.1 19.0zM1984.0 700.7l5.9 19.3l-5.9 19.3zM2003.9 701.1l6.0 18.9l-6.0 18.9zM2013.8 699.8l5.8 20.2l-5.8 20.2zM2033.6 701.0l5.6 19.0l-5.6 19.0zM2053.4 700.5l6.5 19.5l-6.5 19.5zM2063.3 700.4l5.5 19.6l-5.5 19.6zM2083.1 701.1l5.6 18.9l-5.6 18.9zM2093.0 700.1l6.0 19.9l-6.0 19.9zM2112.9 700.5l5.6 19.5l-5.6 19.5zM2132.7 700.3l6.0 19.7l-6.0 19.7zM2142.6 700.5l6.1 19.5l-6.1 19.5zM2162.4 701.0l5.6 19.0l-5.6 19.0zM2172.3 700.4l6.5 19.6l-6.5 19.6zM2192.1 700.8l6.5 19.2l-6.5 19.2zM2196.6 702.8l6.5 17.2l-6.5 17.2zM2212.0 700.9l5.7 19.1l-5.7 19.1zM2221.9 699.8l6.2 20.2l-6.2 20.2zM2226.4 701.8l6.2 18.2l-6.2 18.2zM2241.7 700.1l5.7 19.9l-5.7 19.9zM2251.6 700.4l5.8 19.6l-5.8 19.6zM2271.4 700.8l5.4 19.2l-5.4 19.2zM2291.2 700.8l6.2 19.2l-6.2 19.2zM2301.1 700.5l6.4 19.5l-6.4 19.5zM2321.0 700.2l6.3 19.8l-6.3 19.8zM2330.9 700.6l6.5 19.4l-6.5 19.4zM2350.7 700.4l6.5 19.6l-6.5 19.6zM2370.5 700.8l5.5 19.2l-5.5 19.2zM2380.4 701.2l6.0 18.8l-6.0 18.8zM2400.2 700.0l6.4 20.0l-6.4 20.0zM2410.2 700.3l5.8 19.7l-5.8 19.7zM2430.0 700.3l5.7 19.7l-5.7 19.7zM2449.8 700.0l5.5 20.0l-5.5 20.0zM2454.3 702.0l5.5 18.0l-5.5 18.0zM2459.7 700.8l5.9 19.2l-5.9 19.2zM2479.5 699.9l6.5 20.1l-6.5 20.1zM2489.4 700.4l5.4 19.6l-5.4 19.6zM2509.3 700.1l5.9 19.9l-5.9 19.9zM2513.8 702.1l5.9 17.9l-5.9 17.9zM2529.1 700.5l6.5 19.5l-6.5 19.5zM2539.0 700.0l5.5 20.0l-5.5 20.0zM2558.8 701.0l6.0 19.0l-6.0 19.0zM2568.7 700.0l6.3 20.0l-6.3 20.0zM2588.5 700.5l5.7 19.5l-5.7 19.5zM2608.4 701.2l5.8 18.8l-5.8 18.8zM2618.3 701.0l5.7 19.0l-5.7 19.0zM2638.1 700.8l5.9 19.2l-5.9 19.2zM2648.0 700.5l6.1 19.5l-6.1 19.5zM2667.8 700.7l6.4 19.3l-6.4 19.3zM2687.6 701.0l6.3 19.0l-6.3 19.0zM2697.5 700.3l5.9 19.7l-5.9 19.7zM2717.4 700.3l6.1 19.7l-6.1 19.7zM2727.3 700.9l5.8 19.1l-5.8 19.1zM2747.1 700.9l6.4 19.1l-6.4 19.1zM2766.9 700.2l6.4 19.8l-6.4 19.8zM2776.8 700.9l6.0 19.1l-6.0 19.1zM2796.6 700.1l5.8 19.9l-5.8 19.9zM2806.6 700.8l5.6 19.2l-5.6 19.2zM2826.4 700.1l6.4 19.9l-6.4 19.9zM2830.9 702.1l6.4 17.9l-6.4 17.9zM2846.2 700.7l6.2 19.3l-6.2 19.3zM2856.1 700.9l6.3 19.1l-6.3 19.1zM2860.6 702.9l6.3 17.1l-6.3 17.1zM2875.9 700.4l5.9 19.6l-5.9 19.6zM2880.4 702.4l5.9 17.6l-5.9 17.6zM2885.8 700.2l5.5 19.8l-5.5 19.8zM2905.7 700.6l6.2 19.4l-6.2 19.4zM2925.5 700.2l6.4 19.8l-6.4 19.8zM2935.4 700.8l6.6 19.2l-6.6 19.2zM2955.2 700.6l5.6 19.4l-5.6 19.4zM2965.1 700.0l5.8 20.0l-5.8 20.0z" fill="#fdeea2"/></svg><div class="rl" style="color:#fff6d2;left:753.8px;top:613.2px">Drummer - Pop Songwriter</div><div class="rl" style="color:#fff6d2;left:2802px;top:613.2px">Drummer - Pop Songwriter</div><div style="left:663px;top:758.2px;width:2329px;height:141.4px;background:#c85a10;border-radius:8px 0 0 8px;box-shadow:0 0 0 1.500px #050505;"></div><div style="left:664px;top:846px;width:2308px;height:2px;background:#ffc8a6;"></div><svg style="left:0px;top:756px;" width="2973" height="148" viewBox="0 756 2973 148"><path d="M665 847V845h6V843h4V845h28V849h-28V851h-4V849h-6zM739 847V843h8V845h4V843h2V845h28V849h-28V851h-2V849h-4V851h-8zM819 847V843h2V845h2V843h4V845h4V843h2V845h28V849h-28V851h-2V849h-4V851h-4V849h-2V851h-2zM899 847V843h4V845h4V843h2V845h26V843h4V845h6V849h-6V851h-4V849h-26V851h-2V849h-4V851h-4zM1927 847V845h4V843h2V845h2V843h4V845h28V843h2V845h12V849h-12V851h-2V849h-28V851h-4V849h-2V851h-2V849h-4zM2009 847V845h2V843h2V845h2V843h2V845h2V843h4V845h64V843h2V845h78V843h4V845h8V849h-8V851h-4V849h-78V851h-2V849h-64V851h-4V849h-2V851h-2V849h-2V851h-2V849h-2zM2403 847V845h4V843h2V845h2V843h2V845h2V843h4V845h20V843h4V845h8V849h-8V851h-4V849h-20V851h-4V849h-2V851h-2V849h-2V851h-2V849h-4zM2483 847V845h4V843h2V845h2V843h4V845h4V843h2V845h2V843h4V845h26V849h-26V851h-4V849h-2V851h-2V849h-4V851h-4V849h-2V851h-2V849h-4z" fill="#ffc8a6"/></svg><div class="rl" style="color:#ffeadd;left:673.5px;top:761.2px">Two Note Guitar L<i class="stereo"></i></div><div class="rl" style="color:#ffeadd;left:2722px;top:761.2px">Two Note Guitar L<i class="stereo"></i></div><div style="left:663px;top:906.2px;width:2329px;height:141.4px;background:#c85a10;border-radius:8px 0 0 8px;box-shadow:0 0 0 1.500px #050505;"></div><div style="left:664px;top:994px;width:2308px;height:2px;background:#ffc8a6;"></div><svg style="left:0px;top:904px;" width="2973" height="148" viewBox="0 904 2973 148"><path d="M665 995V993h10V991h2V993h26V997h-26V999h-2V997h-10zM739 995V993h4V991h2V993h2V991h2V993h2V991h4V993h26V997h-26V999h-4V997h-2V999h-2V997h-2V999h-2V997h-4zM819 995V991h4V993h4V991h2V993h2V991h4V993h26V997h-26V999h-4V997h-2V999h-2V997h-4V999h-4zM899 995V993h4V991h2V993h2V991h4V993h28V991h2V993h4V997h-4V999h-2V997h-28V999h-4V997h-2V999h-2V997h-4zM1927 995V993h4V991h4V993h4V991h2V993h18V991h14V993h8V997h-8V999h-14V997h-18V999h-2V997h-4V999h-4V997h-4zM2009 995V993h2V991h8V993h4V991h2V993h62V991h4V993h80V991h2V993h6V997h-6V999h-2V997h-80V999h-4V997h-62V999h-2V997h-4V999h-8V997h-2zM2403 995V993h4V991h8V993h4V991h2V993h22V991h2V993h6V997h-6V999h-2V997h-22V999h-2V997h-4V999h-8V997h-4zM2483 995V993h4V991h4V993h4V991h2V993h2V991h4V993h4V991h2V993h24V997h-24V999h-2V997h-4V999h-4V997h-2V999h-2V997h-4V999h-4V997h-4z" fill="#ffc8a6"/></svg><div class="rl" style="color:#ffeadd;left:673.5px;top:909.2px">Two Note Guitar R<i class="stereo"></i></div><div class="rl" style="color:#ffeadd;left:2722px;top:909.2px">Two Note Guitar R<i class="stereo"></i></div><div style="left:663px;top:1054.2px;width:2329px;height:141.4px;background:#c85a10;border-radius:8px 0 0 8px;box-shadow:0 0 0 1.500px #050505;"></div><div style="left:664px;top:1142px;width:2308px;height:2px;background:#ffc8a6;"></div><svg style="left:0px;top:1052px;" width="2973" height="148" viewBox="0 1052 2973 148"><path d="M665 1143V1133h2V1131h2V1133h10V1135h4V1137h2V1139h6V1141h2V1145h-2V1147h-6V1149h-2V1151h-4V1153h-8V1155h-2V1153h-2V1155h-2zM699 1143V1135h4V1133h6V1135h2V1151h-4V1153h-6V1151h-2zM715 1143V1133h2V1131h2V1133h6V1135h2V1137h4V1139h2V1141h4V1145h-4V1147h-2V1149h-4V1151h-2V1153h-6V1155h-2V1153h-2zM739 1143V1131h2V1133h8V1135h4V1137h4V1139h4V1141h4V1145h-4V1147h-4V1149h-4V1151h-2V1153h-4V1155h-2V1153h-4V1155h-2zM775 1143V1131h4V1133h4V1135h2V1137h2V1139h2V1141h2V1145h-2V1147h-2V1149h-2V1151h-2V1153h-8zM797 1143V1137h2V1133h10V1135h2V1137h2V1149h-2V1151h-4V1153h-6V1151h-2V1149h-2zM819 1143V1131h2V1133h4V1131h2V1133h4V1135h6V1139h4V1141h4V1145h-2V1147h-4V1149h-6V1151h-2V1153h-12zM855 1143V1133h8V1135h4V1139h4V1141h2V1133h10V1135h4V1137h2V1139h2V1141h4V1145h-4V1147h-2V1149h-4V1151h-2V1153h-4V1155h-2V1153h-2V1155h-2V1145h-2V1147h-2V1149h-4V1151h-2V1153h-8zM899 1143V1137h2V1135h2V1133h10V1135h2V1137h2V1149h-2V1151h-2V1153h-8V1151h-4V1149h-2zM933 1143V1133h8V1135h2V1137h2V1139h4V1141h2V1145h-2V1147h-4V1149h-2V1151h-2V1153h-8zM953 1143V1133h4V1131h2V1133h4V1135h4V1137h4V1139h4V1141h4V1139h4V1141h2V1145h-2V1147h-4V1145h-4V1147h-4V1149h-4V1151h-4V1153h-2V1155h-2V1153h-6zM989 1143V1139h4V1141h8V1145h-8V1147h-4zM1009 1143V1141h4V1145h-4zM1019 1143V1139h4V1141h4V1145h-4V1147h-4zM1035 1143V1139h2V1141h8V1145h-8V1147h-2zM1049 1143V1137h4V1139h2V1141h4V1145h-4V1147h-2V1149h-4zM1065 1143V1135h2V1139h4V1141h2V1145h-4V1147h-2V1151h-2zM1075 1143V1137h2V1139h2V1141h4V1145h-4V1147h-2V1149h-2zM1085 1143V1137h2V1141h4V1145h-2V1147h-2V1149h-2zM1093 1143V1135h4V1141h4V1145h-2V1147h-2V1151h-4zM1103 1143V1131h4V1137h2V1141h2V1145h-2V1149h-2V1155h-4zM1113 1143V1133h4V1137h2V1139h2V1141h4V1145h-4V1147h-2V1149h-2V1153h-4zM1129 1143V1133h2V1137h4V1139h6V1141h2V1145h-4V1147h-4V1149h-4V1153h-2zM1149 1143V1135h2V1139h6V1141h6V1145h-6V1147h-6V1151h-2zM1169 1143V1137h2V1139h4V1141h4V1145h-2V1147h-6V1149h-2zM1183 1143V1133h4V1139h2V1141h2V1145h-2V1147h-2V1153h-4zM1193 1143V1135h4V1139h4V1141h4V1145h-4V1147h-4V1151h-4zM1207 1143V1133h4V1137h2V1139h4V1141h4V1145h-2V1147h-6V1149h-2V1153h-4zM1227 1143V1137h4V1139h2V1141h4V1145h-4V1147h-2V1149h-4zM1243 1143V1135h2V1139h4V1141h2V1145h-2V1147h-4V1151h-2zM1253 1143V1133h2V1137h2V1139h4V1141h4V1145h-4V1147h-4V1149h-2V1153h-2zM1267 1143V1129h4V1137h2V1141h2V1145h-2V1149h-2V1157h-4zM1277 1143V1131h4V1137h4V1139h4V1141h4V1145h-4V1147h-4V1149h-4V1155h-4zM1297 1143V1133h4V1139h2V1141h2V1145h-2V1147h-2V1153h-4zM1307 1143V1137h4V1139h4V1141h6V1145h-4V1147h-6V1149h-4zM1327 1143V1137h2V1139h4V1141h4V1145h-4V1147h-4V1149h-2zM1341 1143V1133h4V1139h2V1141h2V1145h-2V1147h-2V1153h-4zM1351 1143V1137h4V1141h6V1145h-4V1147h-2V1149h-4zM1367 1143V1133h2V1137h2V1139h2V1141h2V1145h-2V1147h-2V1149h-2V1153h-2zM1377 1143V1131h2V1135h2V1137h2V1141h2V1145h-2V1149h-2V1151h-2V1155h-2zM1387 1143V1135h2V1139h4V1141h2V1145h-2V1147h-4V1151h-2zM1397 1143V1135h2V1139h6V1141h2V1145h-2V1147h-6V1151h-2zM1411 1143V1131h4V1137h4V1139h2V1141h2V1145h-2V1147h-2V1149h-4V1155h-4zM1425 1143V1129h4V1135h2V1137h2V1139h2V1141h2V1145h-2V1147h-2V1149h-2V1151h-2V1157h-4zM1441 1143V1137h2V1139h2V1141h6V1145h-8V1149h-2zM1455 1143V1133h4V1137h2V1139h2V1141h4V1145h-4V1147h-2V1149h-2V1153h-4zM1471 1143V1137h2V1139h2V1141h4V1145h-4V1147h-2V1149h-2zM1481 1143V1131h2V1137h2V1139h2V1141h2V1145h-2V1147h-2V1149h-2V1155h-2zM1491 1143V1137h2V1139h4V1141h4V1145h-4V1147h-4V1149h-2zM1505 1143V1133h4V1139h2V1141h2V1145h-2V1147h-2V1153h-4zM1515 1143V1135h4V1139h6V1141h4V1145h-4V1147h-6V1151h-4zM1535 1143V1135h2V1139h6V1141h2V1145h-4V1147h-4V1151h-2zM1549 1143V1135h4V1139h6V1141h4V1145h-4V1147h-6V1151h-4zM1569 1143V1133h4V1137h2V1139h2V1141h4V1145h-4V1147h-2V1149h-2V1153h-4zM1585 1143V1137h2V1139h6V1141h6V1145h-6V1147h-6V1149h-2zM1605 1143V1135h2V1139h4V1141h4V1145h-4V1147h-4V1151h-2zM1619 1143V1131h4V1139h2V1141h2V1145h-2V1147h-2V1155h-4zM1629 1143V1135h4V1139h2V1141h2V1145h-2V1147h-2V1151h-4zM1639 1143V1135h4V1139h2V1141h2V1145h-2V1147h-2V1151h-4zM1649 1143V1133h2V1137h4V1139h4V1141h4V1145h-4V1147h-2V1149h-4V1147h-2V1153h-2zM1669 1143V1133h2V1137h4V1139h6V1141h2V1145h-2V1147h-8V1149h-2V1153h-2zM1689 1143V1137h2V1139h2V1141h4V1145h-4V1147h-2V1149h-2zM1699 1143V1133h2V1137h6V1139h2V1141h4V1145h-4V1147h-4V1149h-4V1153h-2zM1719 1143V1131h2V1137h6V1141h4V1145h-2V1147h-2V1149h-2V1151h-4V1155h-2zM1733 1143V1135h4V1139h2V1141h2V1145h-2V1147h-2V1151h-4zM1743 1143V1125h4V1133h2V1135h2V1139h2V1141h2V1145h-2V1149h-4V1153h-2V1161h-4zM1757 1143V1133h4V1139h2V1141h2V1145h-2V1147h-2V1153h-4zM1767 1143V1137h4V1141h2V1139h2V1141h6V1145h-8V1147h-2V1149h-4zM1787 1143V1125h4V1135h2V1139h2V1147h-2V1151h-2V1161h-4zM1797 1143V1125h4V1133h2V1135h4V1137h2V1139h2V1141h2V1145h-2V1147h-2V1149h-4V1153h-4V1161h-4zM1817 1143V1135h4V1139h4V1141h6V1145h-4V1147h-6V1151h-4zM1837 1143V1137h4V1139h2V1141h4V1145h-4V1147h-2V1149h-4zM1853 1143V1131h2V1137h2V1139h2V1141h2V1133h4V1139h2V1141h2V1145h-2V1147h-2V1153h-4V1145h-2V1147h-2V1149h-2V1155h-2zM1871 1143V1137h4V1139h2V1141h4V1145h-4V1147h-2V1149h-4zM1887 1143V1135h2V1139h4V1141h2V1145h-2V1147h-2V1149h-2V1151h-2zM1897 1143V1135h2V1139h4V1141h4V1145h-4V1147h-4V1151h-2zM1911 1143V1133h2V1131h4V1133h2V1131h2V1133h6V1135h4V1137h2V1139h6V1141h4V1145h-6V1147h-4V1149h-2V1151h-4V1153h-2V1155h-2V1153h-2V1155h-6V1153h-2V1155h-2zM1949 1143V1131h6V1133h4V1131h2V1133h2V1135h6V1137h4V1139h6V1141h2V1145h-4V1147h-4V1149h-2V1151h-8V1153h-6V1155h-8zM1989 1143V1131h2V1133h2V1131h4V1133h10V1135h4V1137h4V1139h4V1141h2V1145h-4V1147h-2V1149h-4V1151h-6V1153h-6V1155h-2V1153h-4V1155h-4zM2029 1143V1131h6V1133h2V1135h2V1137h2V1139h2V1141h2V1145h-2V1147h-2V1149h-2V1151h-2V1153h-2V1155h-6zM2049 1143V1131h8V1133h6V1135h2V1137h4V1139h2V1141h4V1145h-4V1147h-4V1149h-2V1151h-4V1153h-2V1155h-2V1153h-2V1155h-6zM2079 1143V1131h2V1133h4V1131h4V1133h2V1135h4V1137h2V1139h2V1141h4V1145h-4V1147h-2V1149h-4V1151h-4V1153h-2V1155h-2V1153h-4V1155h-2zM2109 1143V1131h2V1133h2V1131h4V1133h4V1135h2V1137h4V1139h2V1141h4V1145h-4V1147h-2V1149h-4V1151h-2V1153h-4V1155h-6V1153h-2zM2137 1143V1133h2V1131h6V1133h4V1135h4V1137h4V1139h2V1141h4V1145h-4V1147h-2V1149h-4V1151h-4V1153h-6V1155h-2V1153h-2V1155h-2zM2167 1143V1131h6V1133h2V1131h6V1135h2V1133h2V1135h4V1137h2V1139h4V1141h4V1145h-4V1147h-4V1149h-4V1151h-4V1153h-4V1155h-4V1153h-2V1155h-6zM2207 1143V1131h2V1133h4V1131h2V1133h2V1135h2V1137h2V1139h2V1141h2V1145h-2V1147h-2V1149h-4V1153h-4V1155h-2V1153h-2V1155h-2zM2227 1143V1131h10V1133h2V1135h4V1137h4V1139h2V1141h4V1145h-4V1147h-2V1149h-4V1151h-2V1153h-12V1155h-2zM2257 1143V1133h2V1131h6V1133h8V1135h4V1137h6V1139h2V1141h4V1145h-4V1147h-4V1149h-4V1151h-4V1153h-4V1155h-4V1153h-2V1155h-6zM2303 1143V1131h4V1137h6V1139h2V1141h4V1145h-4V1147h-4V1149h-4V1155h-4zM2323 1143V1129h4V1137h2V1141h2V1145h-2V1149h-2V1157h-4zM2333 1143V1125h4V1133h4V1135h2V1137h2V1139h2V1141h2V1145h-2V1147h-2V1149h-2V1151h-2V1153h-2V1155h-2V1161h-4zM2353 1143V1129h4V1137h2V1141h2V1145h-2V1147h-2V1157h-4zM2363 1143V1129h4V1139h2V1141h2V1145h-2V1149h-2V1157h-4zM2373 1143V1131h4V1135h2V1137h4V1139h2V1141h4V1145h-4V1147h-2V1149h-6V1155h-4zM2393 1143V1131h4V1137h2V1139h4V1141h2V1145h-2V1147h-4V1149h-2V1155h-4zM2409 1143V1127h2V1133h2V1135h2V1137h4V1139h2V1141h2V1145h-2V1147h-2V1149h-2V1151h-6V1159h-2zM2427 1143V1133h4V1139h2V1141h2V1145h-2V1147h-2V1153h-4zM2437 1143V1125h4V1137h2V1139h2V1147h-2V1149h-2V1161h-4zM2447 1143V1125h4V1133h4V1135h2V1137h2V1139h2V1141h2V1145h-2V1147h-2V1149h-2V1151h-2V1153h-4V1161h-4zM2467 1143V1133h4V1139h2V1141h2V1145h-2V1147h-2V1153h-4zM2477 1143V1125h4V1135h2V1139h2V1147h-2V1149h-2V1161h-4zM2487 1143V1129h4V1137h2V1141h2V1147h-2V1149h-2V1157h-4zM2497 1143V1127h4V1137h2V1139h2V1147h-2V1149h-2V1159h-4zM2507 1143V1129h4V1135h4V1137h2V1139h2V1141h4V1145h-4V1147h-2V1149h-2V1151h-4V1157h-4zM2527 1143V1131h2V1135h4V1137h4V1139h2V1141h4V1145h-4V1147h-2V1149h-8V1155h-2zM2547 1143V1133h2V1137h4V1139h2V1141h4V1145h-2V1147h-4V1149h-4V1153h-2zM2561 1143V1129h4V1137h2V1139h2V1145h-2V1149h-2V1157h-4zM2571 1143V1131h4V1137h6V1139h2V1141h4V1145h-4V1147h-2V1149h-4V1151h-2V1155h-4zM2591 1143V1127h4V1137h2V1139h2V1147h-2V1151h-2V1159h-4zM2601 1143V1129h4V1137h2V1141h2V1145h-2V1149h-2V1157h-4zM2611 1143V1125h4V1133h2V1135h2V1137h2V1139h4V1141h2V1145h-2V1147h-2V1149h-2V1151h-4V1153h-2V1161h-4zM2631 1143V1129h4V1135h2V1137h2V1139h2V1141h2V1145h-2V1147h-2V1149h-2V1151h-2V1157h-4zM2645 1143V1133h4V1139h2V1141h2V1145h-2V1147h-2V1153h-4zM2655 1143V1129h4V1137h2V1141h2V1147h-2V1149h-2V1157h-4zM2665 1143V1129h4V1137h2V1141h2V1145h-2V1149h-2V1157h-4zM2675 1143V1125h4V1137h2V1139h2V1147h-2V1151h-2V1161h-4zM2685 1143V1127h4V1133h2V1135h2V1139h2V1141h2V1145h-2V1147h-2V1151h-4V1159h-4zM2701 1143V1127h2V1133h2V1137h2V1141h2V1147h-2V1149h-2V1153h-2V1159h-2zM2711 1143V1131h2V1137h2V1139h2V1141h2V1145h-2V1147h-2V1149h-2V1155h-2zM2721 1143V1133h2V1137h4V1139h2V1141h4V1145h-2V1147h-4V1149h-4V1153h-2zM2735 1143V1127h4V1135h2V1137h2V1139h2V1141h2V1145h-2V1147h-2V1149h-2V1151h-2V1159h-4zM2749 1143V1129h4V1137h2V1141h2V1147h-2V1149h-2V1157h-4zM2759 1143V1127h4V1137h2V1139h2V1147h-2V1151h-2V1159h-4zM2769 1143V1131h4V1139h2V1141h2V1145h-2V1147h-2V1155h-4zM2779 1143V1131h4V1137h2V1139h4V1141h2V1145h-4V1147h-2V1149h-2V1155h-4zM2795 1143V1131h2V1137h2V1139h2V1141h2V1145h-2V1147h-2V1149h-2V1155h-2zM2805 1143V1131h2V1135h2V1137h2V1141h2V1145h-2V1149h-4V1155h-2zM2815 1143V1127h2V1135h4V1137h2V1139h2V1141h2V1145h-2V1147h-2V1149h-2V1151h-4V1159h-2zM2829 1143V1127h4V1137h2V1139h2V1147h-2V1149h-2V1159h-4zM2839 1143V1131h4V1137h4V1139h4V1141h4V1145h-4V1147h-4V1149h-4V1155h-4zM2859 1143V1129h2V1135h2V1137h2V1141h2V1145h-2V1149h-2V1151h-2V1157h-2zM2869 1143V1129h2V1137h2V1135h2V1137h2V1139h2V1141h2V1145h-2V1147h-4V1151h-4V1157h-2zM2883 1143V1133h4V1139h4V1141h4V1145h-4V1147h-4V1153h-4zM2899 1143V1133h2V1137h2V1139h2V1141h2V1145h-2V1147h-2V1149h-2V1153h-2zM2909 1143V1131h2V1135h4V1139h4V1141h2V1145h-2V1147h-2V1149h-6V1155h-2zM2923 1143V1129h4V1135h2V1137h4V1139h2V1141h4V1145h-4V1147h-2V1149h-4V1151h-2V1157h-4zM2943 1143V1127h4V1135h2V1137h2V1139h2V1141h2V1145h-2V1147h-2V1149h-2V1151h-2V1159h-4zM2959 1143V1127h2V1133h2V1139h2V1147h-2V1153h-2V1159h-2zM2967 1143V1129h4V1157h-4z" fill="#ffc8a6"/></svg><div class="rl" style="color:#ffeadd;left:673.5px;top:1057.2px">Picking Guitar L<i class="stereo"></i></div><div class="rl" style="color:#ffeadd;left:2722px;top:1057.2px">Picking Guitar L<i class="stereo"></i></div><div style="left:663px;top:1202.2px;width:2329px;height:141.4px;background:#c85a10;border-radius:8px 0 0 8px;box-shadow:0 0 0 1.500px #050505;"></div><div style="left:664px;top:1290px;width:2308px;height:2px;background:#ffc8a6;"></div><svg style="left:0px;top:1200px;" width="2973" height="148" viewBox="0 1200 2973 148"><path d="M665 1291V1281h2V1279h2V1281h2V1279h2V1281h2V1283h2V1281h2V1283h4V1285h2V1287h6V1289h2V1293h-4V1295h-4V1297h-4V1299h-2V1301h-14zM699 1291V1285h2V1281h8V1283h2V1297h-2V1301h-4V1299h-2V1301h-2V1299h-2zM715 1291V1281h10V1283h4V1285h2V1287h4V1289h2V1293h-4V1295h-4V1299h-6V1303h-2V1301h-6zM739 1291V1279h2V1281h2V1279h2V1281h4V1283h4V1285h4V1287h4V1289h4V1293h-4V1295h-4V1297h-2V1299h-6V1301h-10zM775 1291V1281h8V1283h2V1285h2V1287h2V1289h2V1293h-2V1295h-4V1299h-2V1301h-2V1303h-4V1301h-2zM797 1291V1285h2V1283h4V1281h4V1283h4V1285h2V1297h-2V1299h-2V1301h-8V1299h-2V1297h-2zM819 1291V1281h2V1279h2V1281h8V1283h4V1285h4V1287h2V1289h6V1292h-2V1293h-2V1295h-4V1297h-4V1299h-4V1301h-12zM855 1291V1281h8V1283h4V1285h2V1287h2V1289h2V1281h10V1283h2V1285h4V1287h2V1289h4V1293h-4V1295h-2V1297h-4V1299h-2V1301h-4V1303h-2V1301h-2V1303h-2V1293h-4V1295h-2V1297h-2V1299h-2V1301h-6V1303h-2zM899 1291V1285h4V1281h2V1283h2V1281h6V1283h2V1285h2V1297h-2V1299h-2V1301h-2V1303h-2V1301h-6V1299h-2V1297h-2zM933 1291V1281h2V1279h2V1281h6V1283h2V1287h4V1289h2V1293h-2V1295h-4V1297h-2V1299h-2V1301h-8zM953 1291V1281h8V1279h2V1281h2V1283h2V1285h4V1287h4V1289h4V1287h4V1289h8V1293h-8V1295h-4V1293h-4V1295h-4V1297h-2V1299h-6V1303h-2V1301h-8zM999 1291V1285h4V1289h4V1293h-4V1297h-4zM1009 1291V1285h4V1289h4V1293h-4V1297h-4zM1019 1291V1285h4V1287h2V1289h4V1293h-4V1295h-2V1297h-4zM1035 1291V1281h2V1285h2V1287h2V1289h2V1293h-2V1295h-2V1297h-2V1301h-2zM1045 1291V1279h2V1285h2V1287h2V1289h2V1293h-2V1295h-2V1297h-2V1303h-2zM1055 1291V1281h2V1285h2V1287h2V1289h2V1293h-2V1295h-2V1297h-2V1301h-2zM1065 1291V1285h2V1287h8V1289h4V1293h-6V1295h-6V1297h-2zM1085 1291V1281h2V1285h4V1287h4V1289h4V1293h-4V1295h-4V1297h-4V1301h-2zM1103 1291V1279h4V1285h2V1289h2V1293h-2V1295h-2V1303h-4zM1113 1291V1277h4V1283h2V1285h2V1287h2V1289h2V1293h-2V1295h-2V1297h-2V1299h-2V1305h-4zM1129 1291V1273h2V1281h2V1283h2V1287h2V1295h-2V1297h-2V1301h-2V1309h-2zM1139 1291V1273h2V1281h4V1283h2V1287h2V1289h2V1293h-2V1297h-2V1299h-2V1301h-2V1303h-2V1309h-2zM1153 1291V1279h4V1287h2V1289h2V1293h-2V1295h-2V1303h-4zM1163 1291V1275h4V1285h2V1287h2V1295h-2V1297h-2V1307h-4zM1173 1291V1273h4V1283h2V1287h2V1295h-2V1297h-2V1309h-4zM1183 1291V1273h4V1281h2V1283h2V1285h4V1287h2V1289h2V1293h-2V1295h-2V1297h-2V1299h-4V1301h-2V1309h-4zM1203 1291V1273h2V1281h6V1283h2V1285h2V1287h2V1289h2V1293h-2V1295h-2V1297h-2V1299h-4V1301h-4V1309h-2zM1223 1291V1277h2V1283h2V1287h2V1289h2V1293h-2V1297h-2V1299h-2V1305h-2zM1233 1291V1277h2V1283h2V1285h2V1289h2V1295h-2V1297h-2V1301h-2V1305h-2zM1243 1291V1273h2V1281h4V1285h2V1287h2V1289h2V1293h-2V1295h-2V1297h-2V1301h-4V1309h-2zM1257 1291V1281h4V1285h2V1287h2V1289h4V1293h-4V1295h-2V1297h-2V1301h-4zM1273 1291V1279h2V1283h2V1285h2V1287h2V1289h4V1293h-2V1295h-4V1297h-4V1303h-2zM1287 1291V1271h4V1283h2V1287h2V1295h-2V1299h-2V1311h-4zM1297 1291V1271h4V1279h2V1283h4V1285h2V1287h2V1289h2V1293h-2V1295h-2V1297h-2V1299h-2V1301h-2V1303h-2V1311h-4zM1317 1291V1277h2V1283h6V1285h2V1287h2V1289h4V1293h-4V1295h-2V1297h-2V1299h-6V1305h-2zM1337 1291V1273h2V1281h6V1283h2V1285h2V1287h2V1289h2V1293h-2V1295h-2V1297h-2V1299h-4V1301h-4V1309h-2zM1357 1291V1273h2V1281h2V1283h2V1287h2V1295h-2V1297h-2V1301h-2V1309h-2zM1367 1291V1277h2V1283h2V1285h2V1289h2V1293h-2V1297h-2V1299h-2V1305h-2zM1377 1291V1271h2V1281h4V1283h2V1285h2V1289h2V1293h-2V1295h-2V1299h-2V1301h-4V1311h-2zM1391 1291V1271h4V1283h2V1287h2V1295h-2V1299h-2V1311h-4zM1401 1291V1281h4V1285h2V1287h2V1289h4V1293h-4V1295h-2V1297h-2V1301h-4zM1417 1291V1279h2V1285h4V1287h2V1289h2V1293h-2V1295h-2V1297h-2V1299h-2V1303h-2zM1431 1291V1281h2V1285h6V1287h4V1289h2V1293h-2V1295h-4V1297h-6V1301h-2zM1451 1291V1265h2V1275h2V1281h2V1285h2V1297h-2V1303h-2V1305h-2V1317h-2zM1461 1291V1281h2V1285h2V1287h2V1289h2V1293h-2V1295h-2V1297h-2V1301h-2zM1471 1291V1279h2V1285h2V1283h2V1285h4V1287h2V1289h4V1293h-4V1295h-2V1297h-4V1299h-2V1297h-2V1303h-2zM1491 1291V1271h2V1279h2V1283h2V1287h2V1295h-2V1299h-2V1301h-2V1311h-2zM1501 1291V1273h2V1279h2V1281h2V1283h2V1285h2V1289h2V1293h-2V1297h-2V1299h-2V1301h-4V1309h-2zM1515 1291V1279h4V1285h2V1287h4V1289h2V1293h-4V1297h-2V1299h-2V1303h-4zM1531 1291V1281h2V1285h2V1289h2V1293h-2V1297h-2V1301h-2zM1539 1291V1275h4V1285h2V1287h2V1295h-2V1297h-2V1307h-4zM1549 1291V1279h4V1287h2V1289h2V1293h-2V1297h-2V1303h-4zM1559 1291V1267h4V1281h2V1287h2V1295h-2V1301h-2V1315h-4zM1569 1291V1271h4V1279h4V1283h2V1285h2V1287h2V1289h2V1293h-2V1295h-2V1297h-2V1299h-2V1301h-2V1303h-2V1311h-4zM1589 1291V1275h4V1283h4V1287h2V1289h2V1293h-2V1295h-2V1297h-2V1301h-2V1307h-4zM1605 1291V1273h2V1281h2V1283h2V1287h2V1295h-2V1299h-2V1301h-2V1309h-2zM1615 1291V1279h2V1285h2V1287h2V1289h2V1293h-2V1295h-2V1297h-2V1303h-2zM1625 1291V1281h2V1285h2V1287h2V1289h2V1293h-2V1295h-2V1297h-2V1301h-2zM1635 1291V1263h2V1275h4V1277h2V1281h2V1285h2V1287h2V1293h-2V1297h-2V1301h-2V1303h-2V1309h-2V1307h-2V1319h-2zM1653 1291V1279h4V1285h2V1287h2V1289h4V1293h-2V1295h-4V1297h-2V1303h-4zM1669 1291V1271h2V1279h2V1283h2V1287h2V1295h-2V1299h-2V1301h-2V1311h-2zM1679 1291V1279h2V1283h4V1285h2V1287h4V1289h4V1293h-4V1295h-2V1297h-8V1303h-2zM1699 1291V1279h2V1283h2V1285h4V1287h4V1289h4V1293h-4V1295h-4V1297h-2V1299h-2V1297h-2V1303h-2zM1719 1291V1271h2V1279h2V1283h2V1287h2V1295h-2V1299h-2V1303h-2V1311h-2zM1729 1291V1277h2V1283h2V1285h2V1287h2V1293h-2V1297h-2V1299h-2V1305h-2zM1739 1291V1273h2V1281h4V1283h2V1287h2V1289h2V1293h-2V1295h-2V1297h-2V1301h-4V1309h-2zM1753 1291V1279h2V1285h2V1283h2V1285h4V1287h2V1289h4V1293h-4V1295h-2V1297h-8V1303h-2zM1773 1291V1269h2V1279h2V1277h2V1279h2V1281h2V1285h2V1287h2V1289h2V1293h-2V1295h-2V1297h-2V1299h-2V1303h-6V1313h-2zM1793 1291V1277h2V1283h6V1285h2V1287h4V1289h2V1293h-4V1295h-2V1297h-2V1299h-6V1305h-2zM1813 1291V1275h2V1281h2V1283h2V1285h2V1287h2V1289h2V1293h-2V1295h-2V1297h-2V1299h-4V1307h-2zM1827 1291V1275h4V1283h2V1285h2V1287h2V1289h2V1293h-2V1295h-2V1297h-2V1301h-2V1307h-4zM1843 1291V1277h2V1283h2V1285h2V1287h2V1295h-2V1297h-2V1299h-2V1305h-2zM1853 1291V1269h2V1279h2V1281h2V1287h2V1271h4V1281h4V1283h2V1285h2V1287h2V1289h2V1293h-2V1295h-2V1297h-2V1299h-2V1301h-4V1311h-4V1295h-2V1299h-2V1301h-2V1313h-2zM1881 1291V1277h4V1285h2V1289h2V1293h-2V1297h-2V1305h-4zM1891 1291V1277h4V1283h2V1285h4V1287h2V1289h4V1293h-4V1295h-2V1297h-4V1299h-2V1305h-4zM1911 1291V1279h4V1277h2V1281h2V1283h4V1287h2V1289h2V1293h-2V1295h-2V1297h-2V1301h-4V1305h-2V1303h-2V1301h-2zM1929 1291V1279h6V1277h2V1279h2V1281h4V1283h2V1285h4V1287h2V1289h4V1293h-4V1295h-2V1297h-4V1299h-2V1301h-2V1303h-2V1305h-4V1303h-6zM1959 1291V1279h2V1277h6V1281h6V1283h2V1285h4V1287h2V1289h4V1293h-4V1295h-2V1297h-2V1299h-4V1301h-4V1303h-10zM1989 1291V1279h14V1281h4V1283h4V1285h4V1287h2V1289h4V1293h-2V1295h-6V1297h-4V1299h-4V1301h-4V1303h-4V1305h-2V1303h-6zM2029 1291V1279h12V1281h6V1283h4V1285h4V1287h2V1289h4V1293h-4V1295h-2V1297h-4V1299h-2V1301h-6V1303h-2V1301h-2V1303h-10zM2069 1291V1279h6V1277h2V1279h6V1281h2V1283h6V1285h4V1287h2V1289h6V1292h-2V1293h-4V1295h-2V1297h-6V1299h-2V1301h-6V1303h-4V1305h-2V1303h-6zM2109 1291V1279h8V1277h2V1279h2V1281h4V1283h4V1285h4V1287h4V1289h2V1290h2V1293h-4V1295h-4V1297h-4V1299h-4V1301h-4V1303h-2V1305h-4V1303h-4V1305h-2zM2147 1291V1279h6V1277h2V1279h6V1281h4V1283h4V1285h4V1287h4V1289h2V1293h-4V1295h-2V1297h-4V1299h-4V1301h-6V1303h-10V1301h-2zM2187 1291V1277h2V1279h8V1281h4V1283h2V1285h4V1287h2V1289h4V1293h-4V1295h-2V1297h-4V1299h-2V1301h-4V1303h-10zM2217 1291V1279h4V1277h2V1279h8V1281h4V1283h4V1285h4V1287h2V1289h4V1293h-4V1295h-2V1297h-4V1299h-4V1301h-6V1303h-12zM2257 1291V1279h6V1281h2V1283h2V1285h2V1287h6V1289h2V1293h-2V1295h-6V1299h-4V1301h-2V1303h-6zM2279 1291V1289h2V1287h2V1289h4V1293h-4V1295h-2V1293h-2zM2289 1291V1287h2V1285h4V1287h6V1289h4V1293h-4V1295h-6V1297h-4V1295h-2zM2309 1291V1287h2V1285h2V1287h2V1289h2V1293h-2V1295h-6zM2319 1291V1287h2V1285h4V1287h6V1289h4V1293h-6V1295h-4V1297h-4V1295h-2zM2339 1291V1287h2V1285h2V1287h6V1289h6V1293h-6V1295h-4V1297h-4V1295h-2zM2359 1291V1285h2V1283h2V1285h4V1287h4V1289h6V1292h-2V1293h-4V1295h-4V1297h-4V1299h-2V1297h-2zM2379 1291V1289h14V1293h-14zM2399 1291V1285h4V1287h2V1289h2V1293h-2V1295h-2V1297h-2V1295h-2zM2409 1291V1289h6V1293h-6zM2419 1291V1289h2V1287h2V1275h2V1283h4V1285h2V1287h4V1289h2V1293h-2V1295h-2V1297h-4V1299h-4V1307h-2V1295h-4zM2441 1291V1271h4V1279h2V1283h2V1285h2V1289h2V1293h-2V1297h-2V1299h-2V1301h-2V1311h-4zM2457 1291V1275h2V1283h2V1281h2V1285h2V1287h2V1289h2V1293h-2V1295h-2V1297h-2V1299h-4V1307h-2zM2471 1291V1273h4V1281h2V1283h2V1285h4V1287h2V1289h2V1293h-2V1295h-2V1297h-4V1301h-2V1303h-2V1309h-4zM2491 1291V1275h4V1281h2V1283h2V1285h2V1287h4V1289h2V1293h-4V1295h-2V1297h-2V1299h-4V1307h-4zM2511 1291V1279h4V1285h2V1287h4V1289h2V1293h-2V1295h-4V1299h-2V1303h-4zM2527 1291V1269h2V1279h2V1285h2V1297h-2V1303h-2V1313h-2zM2535 1291V1269h4V1277h2V1279h2V1283h2V1285h2V1287h2V1289h2V1293h-2V1295h-2V1297h-2V1301h-2V1303h-2V1305h-2V1313h-4zM2555 1291V1269h4V1283h2V1287h2V1295h-2V1299h-2V1313h-4zM2565 1291V1275h4V1285h2V1289h2V1295h-2V1297h-2V1307h-4zM2575 1291V1277h4V1285h4V1287h2V1289h2V1293h-2V1295h-2V1297h-2V1299h-2V1305h-4zM2591 1291V1269h2V1279h2V1283h2V1287h2V1295h-2V1299h-2V1303h-2V1313h-2zM2601 1291V1273h2V1281h2V1283h2V1287h2V1295h-2V1299h-2V1301h-2V1309h-2zM2611 1291V1279h2V1283h2V1287h2V1289h2V1293h-2V1295h-2V1297h-2V1303h-2zM2621 1291V1271h2V1279h2V1283h2V1287h2V1295h-2V1299h-2V1303h-2V1311h-2zM2631 1291V1277h2V1283h2V1285h2V1289h2V1293h-2V1297h-2V1299h-2V1305h-2zM2641 1291V1273h2V1281h2V1287h2V1295h-2V1301h-2V1309h-2zM2649 1291V1275h4V1285h2V1289h2V1295h-2V1297h-2V1307h-4zM2659 1291V1275h4V1283h4V1285h2V1287h4V1289h2V1293h-2V1295h-4V1297h-2V1299h-4V1307h-4zM2679 1291V1271h4V1283h2V1287h2V1295h-2V1299h-2V1311h-4zM2689 1291V1273h4V1281h2V1283h2V1285h2V1289h2V1293h-2V1295h-2V1299h-2V1301h-2V1309h-4zM2705 1291V1275h2V1281h4V1285h2V1287h2V1289h2V1293h-2V1295h-2V1297h-2V1299h-4V1307h-2zM2719 1291V1275h4V1285h2V1287h2V1295h-2V1297h-2V1307h-4zM2729 1291V1277h4V1283h2V1285h4V1287h2V1289h4V1293h-4V1295h-2V1297h-4V1299h-2V1305h-4zM2749 1291V1279h4V1285h2V1289h2V1293h-2V1297h-2V1303h-4zM2759 1291V1279h2V1285h4V1287h4V1289h2V1293h-2V1295h-2V1297h-6V1303h-2zM2773 1291V1277h4V1285h2V1287h2V1293h-2V1297h-2V1305h-4zM2783 1291V1275h4V1283h2V1285h2V1287h2V1289h2V1293h-2V1295h-2V1297h-2V1301h-2V1307h-4zM2799 1291V1275h2V1281h2V1285h2V1287h2V1295h-2V1297h-2V1299h-2V1307h-2zM2809 1291V1275h2V1283h2V1285h2V1287h2V1295h-2V1297h-2V1301h-2V1307h-2zM2819 1291V1271h2V1281h6V1283h2V1285h2V1287h2V1289h2V1293h-2V1295h-2V1297h-2V1299h-2V1301h-4V1303h-2V1311h-2zM2839 1291V1275h2V1283h4V1285h2V1287h2V1289h2V1293h-2V1295h-2V1297h-2V1299h-4V1307h-2zM2853 1291V1271h4V1283h2V1287h2V1295h-2V1299h-2V1311h-4zM2863 1291V1275h2V1281h4V1283h2V1285h2V1287h4V1289h2V1293h-2V1295h-4V1297h-2V1299h-2V1301h-4V1307h-2zM2883 1291V1273h2V1281h2V1285h2V1287h2V1295h-2V1297h-2V1301h-2V1309h-2zM2893 1291V1277h2V1283h2V1285h2V1289h2V1295h-2V1297h-2V1301h-2V1305h-2zM2903 1291V1269h2V1279h2V1281h2V1287h2V1295h-2V1301h-2V1303h-2V1313h-2zM2913 1291V1273h2V1281h4V1285h2V1287h2V1289h2V1293h-2V1295h-2V1299h-2V1301h-4V1309h-2zM2927 1291V1275h4V1285h2V1287h2V1295h-2V1297h-2V1307h-4zM2937 1291V1273h4V1283h2V1287h2V1295h-2V1299h-2V1309h-4zM2947 1291V1277h4V1285h2V1287h2V1293h-2V1297h-2V1305h-4zM2957 1291V1277h4V1283h2V1285h2V1287h2V1289h2V1293h-2V1295h-2V1297h-2V1299h-2V1305h-4z" fill="#ffc8a6"/></svg><div class="rl" style="color:#ffeadd;left:673.5px;top:1205.2px">Picking Guitar R<i class="stereo"></i></div><div class="rl" style="color:#ffeadd;left:2722px;top:1205.2px">Picking Guitar R<i class="stereo"></i></div><div style="left:663px;top:1350.2px;width:2329px;height:141.4px;background:#c9a612;border-radius:8px 0 0 8px;box-shadow:0 0 0 1.500px #050505;"></div><svg style="left:0px;top:1348px;" width="2973" height="148" viewBox="0 1348 2973 148"><path d="M665.0 1445.8l8.5 6.25l-8.5 6.25zM675.0 1426.8l8.5 6.25l-8.5 6.25zM692.0 1457.8l8.5 6.25l-8.5 6.25zM689.0 1463.1h15.5v1.800h-15.5zM702.0 1445.8l8.5 6.25l-8.5 6.25zM699.0 1451.1h15.5v1.800h-15.5zM715.0 1426.8l8.5 6.25l-8.5 6.25zM728.0 1426.8l8.5 6.25l-8.5 6.25zM725.0 1432.1h15.5v1.800h-15.5zM749.0 1426.8l8.5 6.25l-8.5 6.25zM770.0 1445.8l8.5 6.25l-8.5 6.25zM780.0 1426.8l8.5 6.25l-8.5 6.25zM801.0 1426.8l8.5 6.25l-8.5 6.25zM818.0 1426.8l8.5 6.25l-8.5 6.25zM831.0 1435.8l8.5 6.25l-8.5 6.25zM852.0 1445.8l8.5 6.25l-8.5 6.25zM862.0 1457.8l8.5 6.25l-8.5 6.25zM872.0 1457.8l8.5 6.25l-8.5 6.25zM869.0 1463.1h15.5v1.800h-15.5zM889.0 1445.8l8.5 6.25l-8.5 6.25zM899.0 1445.8l8.5 6.25l-8.5 6.25zM912.0 1445.8l8.5 6.25l-8.5 6.25zM925.0 1426.8l8.5 6.25l-8.5 6.25zM922.0 1432.1h15.5v1.800h-15.5zM941.5 1445.8l8.5 6.25l-8.5 6.25zM945.5 1414.8l8.5 6.25l-8.5 6.25zM953.0 1426.8l8.5 6.25l-8.5 6.25zM961.0 1426.8l8.5 6.25l-8.5 6.25zM970.5 1426.8l8.5 6.25l-8.5 6.25zM949.5 1435.8l8.5 6.25l-8.5 6.25zM981.1 1445.8l8.5 6.25l-8.5 6.25zM992.6 1426.8l8.5 6.25l-8.5 6.25zM1000.6 1426.8l8.5 6.25l-8.5 6.25zM1010.1 1426.8l8.5 6.25l-8.5 6.25zM1020.8 1445.8l8.5 6.25l-8.5 6.25zM1032.3 1426.8l8.5 6.25l-8.5 6.25zM1028.3 1432.1h16.5v1.800h-16.5zM1040.3 1426.8l8.5 6.25l-8.5 6.25zM1049.8 1426.8l8.5 6.25l-8.5 6.25zM1028.8 1435.8l8.5 6.25l-8.5 6.25zM1060.4 1445.8l8.5 6.25l-8.5 6.25zM1071.9 1426.8l8.5 6.25l-8.5 6.25zM1079.9 1426.8l8.5 6.25l-8.5 6.25zM1089.4 1426.8l8.5 6.25l-8.5 6.25zM1068.4 1435.8l8.5 6.25l-8.5 6.25zM1100.0 1445.8l8.5 6.25l-8.5 6.25zM1104.0 1414.8l8.5 6.25l-8.5 6.25zM1111.5 1426.8l8.5 6.25l-8.5 6.25zM1119.5 1426.8l8.5 6.25l-8.5 6.25zM1129.0 1426.8l8.5 6.25l-8.5 6.25zM1139.7 1445.8l8.5 6.25l-8.5 6.25zM1151.2 1426.8l8.5 6.25l-8.5 6.25zM1159.2 1426.8l8.5 6.25l-8.5 6.25zM1168.7 1426.8l8.5 6.25l-8.5 6.25zM1179.3 1445.8l8.5 6.25l-8.5 6.25zM1190.8 1426.8l8.5 6.25l-8.5 6.25zM1186.8 1432.1h16.5v1.800h-16.5zM1198.8 1426.8l8.5 6.25l-8.5 6.25zM1208.3 1426.8l8.5 6.25l-8.5 6.25zM1187.3 1435.8l8.5 6.25l-8.5 6.25zM1219.0 1445.8l8.5 6.25l-8.5 6.25zM1230.5 1426.8l8.5 6.25l-8.5 6.25zM1238.5 1426.8l8.5 6.25l-8.5 6.25zM1248.0 1426.8l8.5 6.25l-8.5 6.25zM1258.6 1445.8l8.5 6.25l-8.5 6.25zM1262.6 1414.8l8.5 6.25l-8.5 6.25zM1270.1 1426.8l8.5 6.25l-8.5 6.25zM1266.1 1432.1h16.5v1.800h-16.5zM1278.1 1426.8l8.5 6.25l-8.5 6.25zM1287.6 1426.8l8.5 6.25l-8.5 6.25zM1298.2 1445.8l8.5 6.25l-8.5 6.25zM1309.7 1426.8l8.5 6.25l-8.5 6.25zM1305.7 1432.1h16.5v1.800h-16.5zM1317.7 1426.8l8.5 6.25l-8.5 6.25zM1327.2 1426.8l8.5 6.25l-8.5 6.25zM1337.9 1445.8l8.5 6.25l-8.5 6.25zM1349.4 1426.8l8.5 6.25l-8.5 6.25zM1345.4 1432.1h16.5v1.800h-16.5zM1357.4 1426.8l8.5 6.25l-8.5 6.25zM1366.9 1426.8l8.5 6.25l-8.5 6.25zM1345.9 1435.8l8.5 6.25l-8.5 6.25zM1377.5 1445.8l8.5 6.25l-8.5 6.25zM1389.0 1426.8l8.5 6.25l-8.5 6.25zM1397.0 1426.8l8.5 6.25l-8.5 6.25zM1406.5 1426.8l8.5 6.25l-8.5 6.25zM1417.2 1445.8l8.5 6.25l-8.5 6.25zM1421.2 1414.8l8.5 6.25l-8.5 6.25zM1428.7 1426.8l8.5 6.25l-8.5 6.25zM1436.7 1426.8l8.5 6.25l-8.5 6.25zM1446.2 1426.8l8.5 6.25l-8.5 6.25zM1425.2 1435.8l8.5 6.25l-8.5 6.25zM1456.8 1445.8l8.5 6.25l-8.5 6.25zM1468.3 1426.8l8.5 6.25l-8.5 6.25zM1464.3 1432.1h16.5v1.800h-16.5zM1476.3 1426.8l8.5 6.25l-8.5 6.25zM1485.8 1426.8l8.5 6.25l-8.5 6.25zM1496.4 1445.8l8.5 6.25l-8.5 6.25zM1507.9 1426.8l8.5 6.25l-8.5 6.25zM1515.9 1426.8l8.5 6.25l-8.5 6.25zM1525.4 1426.8l8.5 6.25l-8.5 6.25zM1536.1 1445.8l8.5 6.25l-8.5 6.25zM1547.6 1426.8l8.5 6.25l-8.5 6.25zM1543.6 1432.1h16.5v1.800h-16.5zM1555.6 1426.8l8.5 6.25l-8.5 6.25zM1565.1 1426.8l8.5 6.25l-8.5 6.25zM1575.7 1445.8l8.5 6.25l-8.5 6.25zM1587.2 1426.8l8.5 6.25l-8.5 6.25zM1595.2 1426.8l8.5 6.25l-8.5 6.25zM1604.7 1426.8l8.5 6.25l-8.5 6.25zM1583.7 1435.8l8.5 6.25l-8.5 6.25zM1615.4 1445.8l8.5 6.25l-8.5 6.25zM1626.9 1426.8l8.5 6.25l-8.5 6.25zM1634.9 1426.8l8.5 6.25l-8.5 6.25zM1644.4 1426.8l8.5 6.25l-8.5 6.25zM1655.0 1445.8l8.5 6.25l-8.5 6.25zM1666.5 1426.8l8.5 6.25l-8.5 6.25zM1662.5 1432.1h16.5v1.800h-16.5zM1674.5 1426.8l8.5 6.25l-8.5 6.25zM1684.0 1426.8l8.5 6.25l-8.5 6.25zM1694.6 1445.8l8.5 6.25l-8.5 6.25zM1706.1 1426.8l8.5 6.25l-8.5 6.25zM1702.1 1432.1h16.5v1.800h-16.5zM1714.1 1426.8l8.5 6.25l-8.5 6.25zM1723.6 1426.8l8.5 6.25l-8.5 6.25zM1734.3 1445.8l8.5 6.25l-8.5 6.25zM1738.3 1414.8l8.5 6.25l-8.5 6.25zM1745.8 1426.8l8.5 6.25l-8.5 6.25zM1741.8 1432.1h16.5v1.800h-16.5zM1753.8 1426.8l8.5 6.25l-8.5 6.25zM1763.3 1426.8l8.5 6.25l-8.5 6.25zM1773.9 1445.8l8.5 6.25l-8.5 6.25zM1785.4 1426.8l8.5 6.25l-8.5 6.25zM1793.4 1426.8l8.5 6.25l-8.5 6.25zM1802.9 1426.8l8.5 6.25l-8.5 6.25zM1781.9 1435.8l8.5 6.25l-8.5 6.25zM1813.6 1445.8l8.5 6.25l-8.5 6.25zM1825.1 1426.8l8.5 6.25l-8.5 6.25zM1833.1 1426.8l8.5 6.25l-8.5 6.25zM1842.6 1426.8l8.5 6.25l-8.5 6.25zM1821.6 1435.8l8.5 6.25l-8.5 6.25zM1853.2 1445.8l8.5 6.25l-8.5 6.25zM1864.7 1426.8l8.5 6.25l-8.5 6.25zM1872.7 1426.8l8.5 6.25l-8.5 6.25zM1882.2 1426.8l8.5 6.25l-8.5 6.25zM1892.8 1445.8l8.5 6.25l-8.5 6.25zM1896.8 1414.8l8.5 6.25l-8.5 6.25zM1904.3 1426.8l8.5 6.25l-8.5 6.25zM1912.3 1426.8l8.5 6.25l-8.5 6.25zM1921.8 1426.8l8.5 6.25l-8.5 6.25zM1932.5 1445.8l8.5 6.25l-8.5 6.25zM1944.0 1426.8l8.5 6.25l-8.5 6.25zM1952.0 1426.8l8.5 6.25l-8.5 6.25zM1961.5 1426.8l8.5 6.25l-8.5 6.25zM1972.1 1445.8l8.5 6.25l-8.5 6.25zM1983.6 1426.8l8.5 6.25l-8.5 6.25zM1991.6 1426.8l8.5 6.25l-8.5 6.25zM2001.1 1426.8l8.5 6.25l-8.5 6.25zM2011.8 1445.8l8.5 6.25l-8.5 6.25zM2023.3 1426.8l8.5 6.25l-8.5 6.25zM2031.3 1426.8l8.5 6.25l-8.5 6.25zM2040.8 1426.8l8.5 6.25l-8.5 6.25zM2019.8 1435.8l8.5 6.25l-8.5 6.25zM2051.4 1445.8l8.5 6.25l-8.5 6.25zM2055.4 1414.8l8.5 6.25l-8.5 6.25zM2062.9 1426.8l8.5 6.25l-8.5 6.25zM2058.9 1432.1h16.5v1.800h-16.5zM2070.9 1426.8l8.5 6.25l-8.5 6.25zM2080.4 1426.8l8.5 6.25l-8.5 6.25zM2059.4 1435.8l8.5 6.25l-8.5 6.25zM2091.0 1445.8l8.5 6.25l-8.5 6.25zM2102.5 1426.8l8.5 6.25l-8.5 6.25zM2110.5 1426.8l8.5 6.25l-8.5 6.25zM2120.0 1426.8l8.5 6.25l-8.5 6.25zM2130.7 1445.8l8.5 6.25l-8.5 6.25zM2142.2 1426.8l8.5 6.25l-8.5 6.25zM2150.2 1426.8l8.5 6.25l-8.5 6.25zM2159.7 1426.8l8.5 6.25l-8.5 6.25zM2138.7 1435.8l8.5 6.25l-8.5 6.25zM2170.3 1445.8l8.5 6.25l-8.5 6.25zM2181.8 1426.8l8.5 6.25l-8.5 6.25zM2189.8 1426.8l8.5 6.25l-8.5 6.25zM2199.3 1426.8l8.5 6.25l-8.5 6.25zM2210.0 1445.8l8.5 6.25l-8.5 6.25zM2214.0 1414.8l8.5 6.25l-8.5 6.25zM2221.5 1426.8l8.5 6.25l-8.5 6.25zM2229.5 1426.8l8.5 6.25l-8.5 6.25zM2239.0 1426.8l8.5 6.25l-8.5 6.25zM2249.6 1445.8l8.5 6.25l-8.5 6.25zM2261.1 1426.8l8.5 6.25l-8.5 6.25zM2257.1 1432.1h16.5v1.800h-16.5zM2269.1 1426.8l8.5 6.25l-8.5 6.25zM2278.6 1426.8l8.5 6.25l-8.5 6.25zM2257.6 1435.8l8.5 6.25l-8.5 6.25zM2289.2 1445.8l8.5 6.25l-8.5 6.25zM2300.7 1426.8l8.5 6.25l-8.5 6.25zM2308.7 1426.8l8.5 6.25l-8.5 6.25zM2318.2 1426.8l8.5 6.25l-8.5 6.25zM2297.2 1435.8l8.5 6.25l-8.5 6.25zM2328.9 1445.8l8.5 6.25l-8.5 6.25zM2340.4 1426.8l8.5 6.25l-8.5 6.25zM2348.4 1426.8l8.5 6.25l-8.5 6.25zM2357.9 1426.8l8.5 6.25l-8.5 6.25zM2368.5 1445.8l8.5 6.25l-8.5 6.25zM2372.5 1414.8l8.5 6.25l-8.5 6.25zM2380.0 1426.8l8.5 6.25l-8.5 6.25zM2388.0 1426.8l8.5 6.25l-8.5 6.25zM2397.5 1426.8l8.5 6.25l-8.5 6.25zM2408.2 1445.8l8.5 6.25l-8.5 6.25zM2419.7 1426.8l8.5 6.25l-8.5 6.25zM2427.7 1426.8l8.5 6.25l-8.5 6.25zM2437.2 1426.8l8.5 6.25l-8.5 6.25zM2447.8 1445.8l8.5 6.25l-8.5 6.25zM2459.3 1426.8l8.5 6.25l-8.5 6.25zM2455.3 1432.1h16.5v1.800h-16.5zM2467.3 1426.8l8.5 6.25l-8.5 6.25zM2476.8 1426.8l8.5 6.25l-8.5 6.25zM2487.4 1445.8l8.5 6.25l-8.5 6.25zM2498.9 1426.8l8.5 6.25l-8.5 6.25zM2494.9 1432.1h16.5v1.800h-16.5zM2506.9 1426.8l8.5 6.25l-8.5 6.25zM2516.4 1426.8l8.5 6.25l-8.5 6.25zM2527.1 1445.8l8.5 6.25l-8.5 6.25zM2531.1 1414.8l8.5 6.25l-8.5 6.25zM2538.6 1426.8l8.5 6.25l-8.5 6.25zM2546.6 1426.8l8.5 6.25l-8.5 6.25zM2556.1 1426.8l8.5 6.25l-8.5 6.25zM2566.7 1445.8l8.5 6.25l-8.5 6.25zM2578.2 1426.8l8.5 6.25l-8.5 6.25zM2586.2 1426.8l8.5 6.25l-8.5 6.25zM2595.7 1426.8l8.5 6.25l-8.5 6.25zM2606.4 1445.8l8.5 6.25l-8.5 6.25zM2617.9 1426.8l8.5 6.25l-8.5 6.25zM2625.9 1426.8l8.5 6.25l-8.5 6.25zM2635.4 1426.8l8.5 6.25l-8.5 6.25zM2646.0 1445.8l8.5 6.25l-8.5 6.25zM2657.5 1426.8l8.5 6.25l-8.5 6.25zM2665.5 1426.8l8.5 6.25l-8.5 6.25zM2675.0 1426.8l8.5 6.25l-8.5 6.25zM2685.6 1445.8l8.5 6.25l-8.5 6.25zM2689.6 1414.8l8.5 6.25l-8.5 6.25zM2697.1 1426.8l8.5 6.25l-8.5 6.25zM2705.1 1426.8l8.5 6.25l-8.5 6.25zM2714.6 1426.8l8.5 6.25l-8.5 6.25zM2725.3 1445.8l8.5 6.25l-8.5 6.25zM2736.8 1426.8l8.5 6.25l-8.5 6.25zM2744.8 1426.8l8.5 6.25l-8.5 6.25zM2754.3 1426.8l8.5 6.25l-8.5 6.25zM2733.3 1435.8l8.5 6.25l-8.5 6.25zM2764.9 1445.8l8.5 6.25l-8.5 6.25zM2776.4 1426.8l8.5 6.25l-8.5 6.25zM2784.4 1426.8l8.5 6.25l-8.5 6.25zM2793.9 1426.8l8.5 6.25l-8.5 6.25zM2804.6 1445.8l8.5 6.25l-8.5 6.25zM2816.1 1426.8l8.5 6.25l-8.5 6.25zM2824.1 1426.8l8.5 6.25l-8.5 6.25zM2833.6 1426.8l8.5 6.25l-8.5 6.25zM2812.6 1435.8l8.5 6.25l-8.5 6.25zM2844.2 1445.8l8.5 6.25l-8.5 6.25zM2848.2 1414.8l8.5 6.25l-8.5 6.25zM2855.7 1426.8l8.5 6.25l-8.5 6.25zM2851.7 1432.1h16.5v1.800h-16.5zM2863.7 1426.8l8.5 6.25l-8.5 6.25zM2873.2 1426.8l8.5 6.25l-8.5 6.25zM2883.8 1445.8l8.5 6.25l-8.5 6.25zM2895.3 1426.8l8.5 6.25l-8.5 6.25zM2891.3 1432.1h16.5v1.800h-16.5zM2903.3 1426.8l8.5 6.25l-8.5 6.25zM2912.8 1426.8l8.5 6.25l-8.5 6.25zM2923.5 1445.8l8.5 6.25l-8.5 6.25zM2935.0 1426.8l8.5 6.25l-8.5 6.25zM2943.0 1426.8l8.5 6.25l-8.5 6.25zM2952.5 1426.8l8.5 6.25l-8.5 6.25zM2963.1 1445.8l8.5 6.25l-8.5 6.25z" fill="#fdeea2"/></svg><div class="rl" style="color:#fff6d2;left:673.5px;top:1353.2px">Bass Player - Pop Songwriter</div><div class="rl" style="color:#fff6d2;left:2722px;top:1353.2px">Bass Player - Pop Songwriter</div><div style="left:663px;top:1498.2px;width:2329px;height:141.4px;background:#c80fa6;border-radius:8px 0 0 8px;box-shadow:0 0 0 1.500px #050505;"></div><div style="left:664px;top:1586px;width:2308px;height:2px;background:#ffa8ea;"></div><svg style="left:0px;top:1496px;" width="2973" height="148" viewBox="0 1496 2973 148"><path d="M739 1587V1579h12V1581h4V1591h-2V1593h-2V1591h-2V1593h-4V1597h-2V1595h-2V1593h-2zM759 1587V1579h4V1581h2V1579h2V1577h2V1579h8V1583h2V1581h4V1579h4V1577h2V1579h2V1575h2V1577h2V1579h2V1577h2V1581h4V1583h2V1591h-4V1593h-6V1595h-2V1597h-2V1595h-4V1593h-4V1595h-2V1593h-2V1591h-4V1593h-2V1595h-2V1593h-2V1597h-2V1593h-4V1595h-2V1599h-2zM807 1587V1581h2V1583h2V1581h4V1579h2V1577h2V1579h6V1581h8V1583h4V1579h2V1567h2V1577h6V1579h2V1593h-2V1595h-2V1597h-2V1595h-2V1605h-2V1593h-2V1589h-2V1591h-6V1593h-2V1591h-6V1595h-2V1593h-2V1595h-6V1591h-4zM853 1587V1579h2V1581h4V1577h2V1579h2V1583h2V1591h-2V1597h-2V1595h-2V1597h-2V1593h-2V1597h-2zM867 1587V1583h2V1581h2V1583h2V1581h2V1579h4V1581h2V1579h2V1581h2V1579h2V1581h6V1583h2V1585h2V1577h6V1579h4V1581h2V1579h2V1581h4V1583h2V1591h-4V1593h-2V1591h-4V1595h-2V1593h-2V1595h-2V1593h-4V1589h-2V1591h-2V1593h-2V1591h-2V1593h-4V1591h-2V1593h-4V1595h-4V1593h-6V1591h-2zM919 1587V1577h2V1567h4V1581h2V1579h6V1577h4V1579h6V1581h4V1583h2V1577h4V1575h2V1581h6V1579h2V1581h8V1583h4V1591h-2V1593h-2V1591h-2V1593h-4V1591h-2V1593h-10V1595h-4V1589h-2V1593h-2V1591h-2V1593h-2V1595h-2V1593h-6V1595h-2V1593h-4V1591h-2V1605h-4V1593h-2zM1137 1587V1579h4V1581h2V1579h2V1581h2V1579h8V1583h2V1579h2V1569h2V1579h6V1581h8V1579h6V1581h2V1583h4V1591h-6V1593h-14V1595h-6V1601h-2V1593h-2V1591h-4V1593h-4V1595h-6V1593h-6zM1189 1587V1579h2V1569h2V1579h2V1581h2V1577h2V1579h4V1581h2V1591h-2V1593h-4V1595h-2V1591h-2V1593h-2V1603h-2V1593h-2zM1207 1587V1573h2V1577h2V1579h10V1581h2V1579h2V1581h2V1579h8V1581h4V1583h2V1579h2V1583h6V1581h2V1583h2V1589h-2V1591h-2V1593h-2V1591h-2V1593h-10V1595h-2V1593h-4V1595h-4V1593h-2V1591h-2V1593h-4V1595h-2V1593h-2V1595h-6zM1255 1587V1583h2V1571h4V1581h2V1579h4V1581h2V1579h2V1583h4V1577h2V1579h2V1581h4V1579h2V1583h2V1577h2V1569h4V1579h2V1581h4V1579h2V1581h2V1577h2V1579h2V1583h6V1591h-4V1593h-10V1591h-2V1593h-4V1603h-4V1595h-2V1591h-2V1595h-2V1593h-2V1591h-2V1597h-2V1595h-2V1591h-8V1593h-4V1595h-2V1599h-4V1589h-2zM1315 1587V1581h2V1573h4V1581h4V1583h2V1591h-2V1593h-4V1599h-4V1591h-2zM1331 1587V1581h4V1579h8V1581h2V1583h2V1579h2V1581h2V1583h4V1585h2V1589h-2V1593h-2V1591h-2V1593h-6V1591h-4V1593h-4V1595h-2V1593h-4zM1359 1587V1579h2V1581h2V1577h4V1579h4V1581h2V1583h4V1581h4V1583h4V1591h-10V1593h-2V1591h-2V1593h-2V1591h-2V1593h-4V1595h-2V1591h-2zM1389 1587V1581h4V1579h2V1581h2V1577h2V1579h4V1581h4V1583h2V1579h2V1581h4V1585h2V1583h2V1589h-2V1591h-2V1593h-2V1591h-2V1593h-2V1591h-4V1593h-10V1595h-2V1593h-2V1591h-2zM1423 1587V1575h2V1569h4V1579h4V1581h2V1591h-2V1593h-2V1591h-2V1603h-4V1595h-2zM1437 1587V1579h4V1581h2V1579h2V1577h2V1579h4V1581h2V1579h2V1583h2V1591h-4V1593h-2V1595h-2V1599h-2V1595h-6V1593h-4zM1461 1587V1583h2V1573h2V1583h2V1581h2V1579h6V1581h10V1585h2V1589h-2V1591h-2V1593h-6V1591h-2V1593h-10V1599h-2V1591h-2zM1491 1587V1579h4V1581h2V1579h2V1581h2V1577h2V1579h2V1581h2V1579h6V1581h2V1585h2V1589h-2V1591h-2V1593h-6V1595h-2V1593h-2V1595h-2V1591h-2V1595h-2V1593h-4V1599h-2zM1519 1587V1575h2V1579h2V1577h2V1579h6V1591h-2V1593h-2V1595h-2V1593h-2V1591h-2V1593h-2zM1535 1587V1581h2V1573h4V1581h4V1577h2V1581h6V1583h8V1591h-2V1589h-2V1591h-8V1593h-8V1599h-4V1591h-2zM1563 1587V1581h2V1571h4V1579h2V1581h4V1583h2V1581h2V1583h4V1589h-2V1591h-6V1593h-2V1595h-2V1593h-2V1601h-4V1593h-2zM1587 1587V1581h2V1569h4V1579h2V1581h6V1579h2V1583h2V1581h4V1583h2V1591h-2V1593h-6V1595h-2V1591h-2V1593h-6V1601h-4V1593h-2zM1691 1587V1573h4V1579h2V1581h2V1583h4V1591h-2V1593h-6V1599h-4zM1707 1587V1581h2V1579h4V1577h2V1579h4V1581h2V1579h2V1581h6V1583h4V1585h2V1591h-8V1593h-8V1591h-2V1595h-4V1593h-4V1595h-2zM1739 1587V1581h2V1579h4V1581h6V1591h-4V1593h-2V1595h-2V1593h-2V1591h-2zM1755 1587V1583h2V1581h2V1579h4V1577h2V1581h2V1579h4V1581h2V1579h2V1581h6V1583h2V1581h2V1583h4V1581h4V1583h2V1581h2V1583h2V1581h2V1579h2V1581h4V1583h4V1589h-2V1593h-2V1591h-4V1593h-4V1591h-2V1589h-2V1591h-4V1593h-2V1591h-6V1589h-2V1593h-2V1591h-4V1593h-2V1595h-2V1593h-4V1595h-2V1593h-4V1591h-6zM1815 1587V1581h2V1579h2V1581h2V1577h2V1581h2V1579h2V1581h2V1583h2V1575h2V1581h8V1583h6V1589h-2V1591h-2V1589h-2V1591h-2V1593h-4V1591h-2V1597h-2V1591h-6V1595h-2V1593h-6V1591h-2zM1851 1587V1583h12V1581h6V1583h10V1581h4V1569h2V1581h2V1579h2V1583h2V1593h-6V1603h-2V1593h-4V1589h-8V1591h-2V1593h-2V1591h-2V1593h-2V1591h-12zM1895 1587V1581h4V1573h2V1581h4V1579h6V1581h8V1585h4V1579h2V1577h2V1579h4V1577h2V1581h2V1579h2V1581h4V1583h2V1579h4V1581h2V1585h2V1591h-8V1593h-4V1595h-2V1593h-8V1597h-2V1593h-2V1595h-2V1589h-2V1591h-2V1593h-4V1591h-2V1593h-2V1591h-2V1593h-2V1591h-6V1599h-2V1591h-2V1589h-2zM1955 1587V1579h6V1581h4V1579h2V1581h4V1591h-2V1593h-8V1591h-2V1597h-2V1593h-2zM1975 1587V1575h4V1581h2V1577h2V1579h2V1583h4V1585h2V1589h-4V1591h-2V1593h-2V1595h-2V1591h-2V1597h-4zM1995 1587V1571h4V1581h2V1577h4V1581h8V1583h2V1575h4V1597h-4V1591h-4V1593h-2V1591h-4V1593h-2V1595h-2V1593h-2V1601h-4zM2043 1587V1571h2V1581h2V1577h2V1579h2V1581h2V1579h6V1583h8V1585h8V1588h-2V1589h-6V1591h-4V1593h-10V1591h-2V1593h-2V1595h-2V1597h-2V1601h-2zM2123 1587V1571h2V1577h2V1579h2V1577h4V1579h4V1581h4V1583h2V1581h4V1585h6V1586h2V1589h-8V1591h-6V1593h-4V1595h-4V1593h-4V1595h-4V1601h-2zM2203 1587V1571h2V1575h2V1577h2V1579h10V1581h2V1583h10V1585h8V1588h-2V1589h-8V1591h-2V1593h-2V1589h-2V1591h-2V1593h-8V1595h-4V1593h-2V1595h-2V1601h-2zM2283 1587V1571h2V1579h6V1575h2V1581h2V1579h2V1581h4V1583h2V1581h2V1583h6V1585h8V1588h-2V1589h-6V1591h-10V1593h-4V1595h-2V1593h-4V1595h-6V1601h-2zM2403 1587V1581h2V1577h2V1579h4V1581h2V1579h2V1581h4V1579h4V1569h2V1581h2V1579h2V1581h10V1579h2V1581h4V1583h2V1577h2V1579h2V1581h10V1583h2V1591h-4V1593h-12V1591h-8V1595h-2V1591h-2V1593h-2V1591h-2V1593h-4V1597h-2V1601h-2V1593h-4V1591h-4V1595h-2V1593h-4V1595h-4V1593h-2zM2467 1587V1577h2V1579h8V1581h2V1579h4V1577h2V1581h6V1583h4V1579h4V1577h2V1581h4V1577h4V1581h4V1579h6V1581h4V1583h4V1573h2V1581h2V1577h2V1579h2V1581h2V1577h4V1581h6V1591h-2V1595h-4V1593h-6V1591h-2V1593h-2V1595h-2V1599h-2V1591h-6V1593h-2V1591h-2V1593h-16V1595h-2V1597h-4V1591h-4V1593h-4V1595h-2V1591h-2V1593h-2V1595h-2V1593h-2V1591h-2V1593h-4V1595h-2V1597h-2zM2551 1587V1567h4V1579h2V1577h2V1579h2V1581h2V1579h2V1581h4V1583h2V1579h4V1581h2V1575h2V1579h2V1581h6V1583h2V1581h2V1579h2V1581h8V1583h2V1589h-2V1591h-8V1593h-2V1591h-2V1593h-2V1591h-4V1593h-4V1595h-4V1593h-2V1597h-2V1591h-4V1593h-2V1595h-8V1593h-2V1603h-4zM2607 1587V1567h4V1579h4V1581h2V1579h2V1577h8V1581h6V1583h2V1591h-2V1593h-2V1591h-2V1595h-2V1593h-2V1595h-4V1593h-2V1591h-4V1593h-4V1605h-4zM2639 1587V1581h2V1579h2V1583h2V1581h2V1579h2V1583h2V1579h8V1577h2V1579h4V1577h2V1581h2V1583h2V1577h2V1579h2V1569h2V1581h6V1577h2V1581h2V1579h4V1581h2V1579h2V1583h4V1591h-2V1589h-2V1593h-4V1591h-2V1595h-2V1593h-2V1595h-4V1593h-2V1595h-2V1603h-2V1591h-2V1593h-2V1591h-2V1593h-4V1595h-4V1593h-2V1595h-2V1593h-2V1591h-2V1593h-2V1591h-2V1593h-2V1595h-2V1593h-2V1595h-2V1593h-2zM2703 1587V1583h6V1581h2V1579h4V1581h2V1583h6V1585h4V1589h-2V1591h-8V1593h-4V1591h-8V1589h-2zM2731 1587V1583h4V1573h2V1583h2V1581h10V1579h2V1581h2V1583h4V1585h2V1581h2V1579h2V1581h2V1579h2V1581h6V1579h4V1583h2V1581h2V1583h6V1589h-2V1591h-2V1593h-4V1591h-2V1593h-2V1591h-2V1593h-4V1591h-2V1593h-2V1591h-8V1589h-2V1591h-2V1593h-2V1591h-2V1593h-6V1595h-2V1593h-2V1591h-2V1599h-2V1591h-4zM2791 1587V1569h4V1579h8V1581h2V1579h6V1581h2V1583h2V1581h2V1585h2V1591h-2V1593h-2V1591h-2V1593h-16V1595h-2V1603h-4zM2823 1587V1577h4V1579h2V1577h2V1581h2V1579h2V1577h2V1579h2V1577h2V1579h2V1581h2V1579h2V1577h2V1579h2V1581h2V1579h2V1581h2V1579h2V1583h2V1581h2V1579h2V1577h4V1579h2V1581h6V1579h2V1583h2V1579h2V1583h4V1591h-2V1593h-2V1591h-2V1593h-10V1591h-2V1593h-6V1591h-4V1593h-10V1595h-2V1593h-2V1591h-2V1593h-14V1595h-2V1591h-2V1595h-2zM2891 1587V1577h2V1581h2V1579h8V1575h2V1581h2V1577h4V1579h2V1581h2V1593h-10V1595h-2V1593h-4V1595h-4V1593h-4zM2919 1587V1571h4V1579h2V1581h8V1579h2V1581h2V1579h2V1581h2V1583h2V1579h2V1581h2V1579h2V1581h2V1579h4V1577h2V1579h6V1577h2V1581h4V1583h2V1567h2V1603h-2V1591h-8V1593h-4V1599h-2V1597h-2V1595h-4V1593h-4V1595h-2V1593h-2V1591h-6V1593h-4V1591h-2V1593h-4V1595h-2V1593h-2V1601h-4z" fill="#ffa8ea"/></svg><div class="rl" style="color:#ffe2f7;left:673.5px;top:1501.2px">Piano<i class="stereo"></i></div><div class="rl" style="color:#ffe2f7;left:2722px;top:1501.2px">Piano<i class="stereo"></i></div><div style="left:663px;top:1646.2px;width:2329px;height:141.4px;background:#c80fa6;border-radius:8px 0 0 8px;box-shadow:0 0 0 1.500px #050505;"></div><div style="left:664px;top:1734px;width:2308px;height:2px;background:#ffa8ea;"></div><svg style="left:0px;top:1644px;" width="2973" height="148" viewBox="0 1644 2973 148"><path d="M739 1735V1727h12V1729h4V1739h-2V1741h-2V1739h-2V1741h-4V1745h-2V1743h-2V1741h-2zM759 1735V1727h4V1729h2V1727h2V1725h2V1727h8V1731h2V1729h4V1727h4V1725h2V1727h2V1723h2V1725h2V1727h2V1725h2V1729h4V1731h2V1739h-4V1741h-6V1743h-2V1745h-2V1743h-4V1741h-4V1743h-2V1741h-2V1739h-4V1741h-2V1743h-2V1741h-2V1745h-2V1741h-4V1743h-2V1747h-2zM807 1735V1729h2V1731h2V1729h4V1727h2V1725h2V1727h6V1729h8V1731h4V1727h2V1715h2V1725h6V1727h2V1741h-2V1743h-2V1745h-2V1743h-2V1753h-2V1741h-2V1737h-2V1739h-6V1741h-2V1739h-6V1743h-2V1741h-2V1743h-6V1739h-4zM853 1735V1727h2V1729h4V1725h2V1727h2V1731h2V1739h-2V1745h-2V1743h-2V1745h-2V1741h-2V1745h-2zM867 1735V1731h2V1729h2V1731h2V1729h2V1727h4V1729h2V1727h2V1729h2V1727h2V1729h6V1731h2V1733h2V1725h6V1727h4V1729h2V1727h2V1729h4V1731h2V1739h-4V1741h-2V1739h-4V1743h-2V1741h-2V1743h-2V1741h-4V1737h-2V1739h-2V1741h-2V1739h-2V1741h-4V1739h-2V1741h-4V1743h-4V1741h-6V1739h-2zM919 1735V1725h2V1715h4V1729h2V1727h6V1725h4V1727h6V1729h4V1731h2V1725h4V1723h2V1729h6V1727h2V1729h8V1731h4V1739h-2V1741h-2V1739h-2V1741h-4V1739h-2V1741h-10V1743h-4V1737h-2V1741h-2V1739h-2V1741h-2V1743h-2V1741h-6V1743h-2V1741h-4V1739h-2V1753h-4V1741h-2zM1137 1735V1727h4V1729h2V1727h2V1729h2V1727h8V1731h2V1727h2V1717h2V1727h6V1729h8V1727h6V1729h2V1731h4V1739h-6V1741h-14V1743h-6V1749h-2V1741h-2V1739h-4V1741h-4V1743h-6V1741h-6zM1189 1735V1727h2V1717h2V1727h2V1729h2V1725h2V1727h4V1729h2V1739h-2V1741h-4V1743h-2V1739h-2V1741h-2V1751h-2V1741h-2zM1207 1735V1721h2V1725h2V1727h10V1729h2V1727h2V1729h2V1727h8V1729h4V1731h2V1727h2V1731h6V1729h2V1731h2V1737h-2V1739h-2V1741h-2V1739h-2V1741h-10V1743h-2V1741h-4V1743h-4V1741h-2V1739h-2V1741h-4V1743h-2V1741h-2V1743h-6zM1255 1735V1731h2V1719h4V1729h2V1727h4V1729h2V1727h2V1731h4V1725h2V1727h2V1729h4V1727h2V1731h2V1725h2V1717h4V1727h2V1729h4V1727h2V1729h2V1725h2V1727h2V1731h6V1739h-4V1741h-10V1739h-2V1741h-4V1751h-4V1743h-2V1739h-2V1743h-2V1741h-2V1739h-2V1745h-2V1743h-2V1739h-8V1741h-4V1743h-2V1747h-4V1737h-2zM1315 1735V1729h2V1721h4V1729h4V1731h2V1739h-2V1741h-4V1747h-4V1739h-2zM1331 1735V1729h4V1727h8V1729h2V1731h2V1727h2V1729h2V1731h4V1733h2V1737h-2V1741h-2V1739h-2V1741h-6V1739h-4V1741h-4V1743h-2V1741h-4zM1359 1735V1727h2V1729h2V1725h4V1727h4V1729h2V1731h4V1729h4V1731h4V1739h-10V1741h-2V1739h-2V1741h-2V1739h-2V1741h-4V1743h-2V1739h-2zM1389 1735V1729h4V1727h2V1729h2V1725h2V1727h4V1729h4V1731h2V1727h2V1729h4V1733h2V1731h2V1737h-2V1739h-2V1741h-2V1739h-2V1741h-2V1739h-4V1741h-10V1743h-2V1741h-2V1739h-2zM1423 1735V1723h2V1717h4V1727h4V1729h2V1739h-2V1741h-2V1739h-2V1751h-4V1743h-2zM1437 1735V1727h4V1729h2V1727h2V1725h2V1727h4V1729h2V1727h2V1731h2V1739h-4V1741h-2V1743h-2V1747h-2V1743h-6V1741h-4zM1461 1735V1731h2V1721h2V1731h2V1729h2V1727h6V1729h10V1733h2V1737h-2V1739h-2V1741h-6V1739h-2V1741h-10V1747h-2V1739h-2zM1491 1735V1727h4V1729h2V1727h2V1729h2V1725h2V1727h2V1729h2V1727h6V1729h2V1733h2V1737h-2V1739h-2V1741h-6V1743h-2V1741h-2V1743h-2V1739h-2V1743h-2V1741h-4V1747h-2zM1519 1735V1723h2V1727h2V1725h2V1727h6V1739h-2V1741h-2V1743h-2V1741h-2V1739h-2V1741h-2zM1535 1735V1729h2V1721h4V1729h4V1725h2V1729h6V1731h8V1739h-2V1737h-2V1739h-8V1741h-8V1747h-4V1739h-2zM1563 1735V1729h2V1719h4V1727h2V1729h4V1731h2V1729h2V1731h4V1737h-2V1739h-6V1741h-2V1743h-2V1741h-2V1749h-4V1741h-2zM1587 1735V1729h2V1717h4V1727h2V1729h6V1727h2V1731h2V1729h4V1731h2V1739h-2V1741h-6V1743h-2V1739h-2V1741h-6V1749h-4V1741h-2zM1691 1735V1721h4V1727h2V1729h2V1731h4V1739h-2V1741h-6V1747h-4zM1707 1735V1729h2V1727h4V1725h2V1727h4V1729h2V1727h2V1729h6V1731h4V1733h2V1739h-8V1741h-8V1739h-2V1743h-4V1741h-4V1743h-2zM1739 1735V1729h2V1727h4V1729h6V1739h-4V1741h-2V1743h-2V1741h-2V1739h-2zM1755 1735V1731h2V1729h2V1727h4V1725h2V1729h2V1727h4V1729h2V1727h2V1729h6V1731h2V1729h2V1731h4V1729h4V1731h2V1729h2V1731h2V1729h2V1727h2V1729h4V1731h4V1737h-2V1741h-2V1739h-4V1741h-4V1739h-2V1737h-2V1739h-4V1741h-2V1739h-6V1737h-2V1741h-2V1739h-4V1741h-2V1743h-2V1741h-4V1743h-2V1741h-4V1739h-6zM1815 1735V1729h2V1727h2V1729h2V1725h2V1729h2V1727h2V1729h2V1731h2V1723h2V1729h8V1731h6V1737h-2V1739h-2V1737h-2V1739h-2V1741h-4V1739h-2V1745h-2V1739h-6V1743h-2V1741h-6V1739h-2zM1851 1735V1731h12V1729h6V1731h10V1729h4V1717h2V1729h2V1727h2V1731h2V1741h-6V1751h-2V1741h-4V1737h-8V1739h-2V1741h-2V1739h-2V1741h-2V1739h-12zM1895 1735V1729h4V1721h2V1729h4V1727h6V1729h8V1733h4V1727h2V1725h2V1727h4V1725h2V1729h2V1727h2V1729h4V1731h2V1727h4V1729h2V1733h2V1739h-8V1741h-4V1743h-2V1741h-8V1745h-2V1741h-2V1743h-2V1737h-2V1739h-2V1741h-4V1739h-2V1741h-2V1739h-2V1741h-2V1739h-6V1747h-2V1739h-2V1737h-2zM1955 1735V1727h6V1729h4V1727h2V1729h4V1739h-2V1741h-8V1739h-2V1745h-2V1741h-2zM1975 1735V1723h4V1729h2V1725h2V1727h2V1731h4V1733h2V1737h-4V1739h-2V1741h-2V1743h-2V1739h-2V1745h-4zM1995 1735V1719h4V1729h2V1725h4V1729h8V1731h2V1723h4V1745h-4V1739h-4V1741h-2V1739h-4V1741h-2V1743h-2V1741h-2V1749h-4zM2043 1735V1719h2V1729h2V1725h2V1727h2V1729h2V1727h6V1731h8V1733h8V1736h-2V1737h-6V1739h-4V1741h-10V1739h-2V1741h-2V1743h-2V1745h-2V1749h-2zM2123 1735V1719h2V1725h2V1727h2V1725h4V1727h4V1729h4V1731h2V1729h4V1733h6V1734h2V1737h-8V1739h-6V1741h-4V1743h-4V1741h-4V1743h-4V1749h-2zM2203 1735V1719h2V1723h2V1725h2V1727h10V1729h2V1731h10V1733h8V1736h-2V1737h-8V1739h-2V1741h-2V1737h-2V1739h-2V1741h-8V1743h-4V1741h-2V1743h-2V1749h-2zM2283 1735V1719h2V1727h6V1723h2V1729h2V1727h2V1729h4V1731h2V1729h2V1731h6V1733h8V1736h-2V1737h-6V1739h-10V1741h-4V1743h-2V1741h-4V1743h-6V1749h-2zM2403 1735V1729h2V1725h2V1727h4V1729h2V1727h2V1729h4V1727h4V1717h2V1729h2V1727h2V1729h10V1727h2V1729h4V1731h2V1725h2V1727h2V1729h10V1731h2V1739h-4V1741h-12V1739h-8V1743h-2V1739h-2V1741h-2V1739h-2V1741h-4V1745h-2V1749h-2V1741h-4V1739h-4V1743h-2V1741h-4V1743h-4V1741h-2zM2467 1735V1725h2V1727h8V1729h2V1727h4V1725h2V1729h6V1731h4V1727h4V1725h2V1729h4V1725h4V1729h4V1727h6V1729h4V1731h4V1721h2V1729h2V1725h2V1727h2V1729h2V1725h4V1729h6V1739h-2V1743h-4V1741h-6V1739h-2V1741h-2V1743h-2V1747h-2V1739h-6V1741h-2V1739h-2V1741h-16V1743h-2V1745h-4V1739h-4V1741h-4V1743h-2V1739h-2V1741h-2V1743h-2V1741h-2V1739h-2V1741h-4V1743h-2V1745h-2zM2551 1735V1715h4V1727h2V1725h2V1727h2V1729h2V1727h2V1729h4V1731h2V1727h4V1729h2V1723h2V1727h2V1729h6V1731h2V1729h2V1727h2V1729h8V1731h2V1737h-2V1739h-8V1741h-2V1739h-2V1741h-2V1739h-4V1741h-4V1743h-4V1741h-2V1745h-2V1739h-4V1741h-2V1743h-8V1741h-2V1751h-4zM2607 1735V1715h4V1727h4V1729h2V1727h2V1725h8V1729h6V1731h2V1739h-2V1741h-2V1739h-2V1743h-2V1741h-2V1743h-4V1741h-2V1739h-4V1741h-4V1753h-4zM2639 1735V1729h2V1727h2V1731h2V1729h2V1727h2V1731h2V1727h8V1725h2V1727h4V1725h2V1729h2V1731h2V1725h2V1727h2V1717h2V1729h6V1725h2V1729h2V1727h4V1729h2V1727h2V1731h4V1739h-2V1737h-2V1741h-4V1739h-2V1743h-2V1741h-2V1743h-4V1741h-2V1743h-2V1751h-2V1739h-2V1741h-2V1739h-2V1741h-4V1743h-4V1741h-2V1743h-2V1741h-2V1739h-2V1741h-2V1739h-2V1741h-2V1743h-2V1741h-2V1743h-2V1741h-2zM2703 1735V1731h6V1729h2V1727h4V1729h2V1731h6V1733h4V1737h-2V1739h-8V1741h-4V1739h-8V1737h-2zM2731 1735V1731h4V1721h2V1731h2V1729h10V1727h2V1729h2V1731h4V1733h2V1729h2V1727h2V1729h2V1727h2V1729h6V1727h4V1731h2V1729h2V1731h6V1737h-2V1739h-2V1741h-4V1739h-2V1741h-2V1739h-2V1741h-4V1739h-2V1741h-2V1739h-8V1737h-2V1739h-2V1741h-2V1739h-2V1741h-6V1743h-2V1741h-2V1739h-2V1747h-2V1739h-4zM2791 1735V1717h4V1727h8V1729h2V1727h6V1729h2V1731h2V1729h2V1733h2V1739h-2V1741h-2V1739h-2V1741h-16V1743h-2V1751h-4zM2823 1735V1725h4V1727h2V1725h2V1729h2V1727h2V1725h2V1727h2V1725h2V1727h2V1729h2V1727h2V1725h2V1727h2V1729h2V1727h2V1729h2V1727h2V1731h2V1729h2V1727h2V1725h4V1727h2V1729h6V1727h2V1731h2V1727h2V1731h4V1739h-2V1741h-2V1739h-2V1741h-10V1739h-2V1741h-6V1739h-4V1741h-10V1743h-2V1741h-2V1739h-2V1741h-14V1743h-2V1739h-2V1743h-2zM2891 1735V1725h2V1729h2V1727h8V1723h2V1729h2V1725h4V1727h2V1729h2V1741h-10V1743h-2V1741h-4V1743h-4V1741h-4zM2919 1735V1719h4V1727h2V1729h8V1727h2V1729h2V1727h2V1729h2V1731h2V1727h2V1729h2V1727h2V1729h2V1727h4V1725h2V1727h6V1725h2V1729h4V1731h2V1715h2V1751h-2V1739h-8V1741h-4V1747h-2V1745h-2V1743h-4V1741h-4V1743h-2V1741h-2V1739h-6V1741h-4V1739h-2V1741h-4V1743h-2V1741h-2V1749h-4z" fill="#ffa8ea"/></svg><div class="rl" style="color:#ffe2f7;left:673.5px;top:1649.2px">Piano.1<i class="stereo"></i></div><div class="rl" style="color:#ffe2f7;left:2722px;top:1649.2px">Piano.1<i class="stereo"></i></div><div style="left:2972px;top:71px;width:30px;height:1800px;background:#2c2c2c;"></div><div style="left:2972px;top:146px;width:1.5px;height:1645px;background:#0c0c0c;"></div><svg style="left:898px;top:109.5px;" width="38" height="36" viewBox="0 0 38 36"><path d="M1.500 7.500a6 6 0 0 1 6-6h23a6 6 0 0 1 6 6v9.500c0 4-2.500 6.500-5.500 9L19 34 7 26C4 23.500 1.500 21 1.500 17z" fill="#b7b7b7" stroke="#cfcfcf" stroke-width="1"/></svg><div style="left:914.5px;top:118px;width:3.5px;height:1760px;background:rgba(0,0,0,.30);"></div><div style="left:916.0px;top:118px;width:2px;height:1760px;background:#f6f6f6;"></div></div><div style="left:0;top:170px;width:2px;height:1876px;background:rgba(255,255,255,.2)"></div><div style="left:0;top:0;width:1.500px;height:170px;background:rgba(0,0,0,.2)"></div><div style="left:472px;top:168.300px;width:2984px;height:1.700px;background:#6d6866"></div></div></div></body></html>
